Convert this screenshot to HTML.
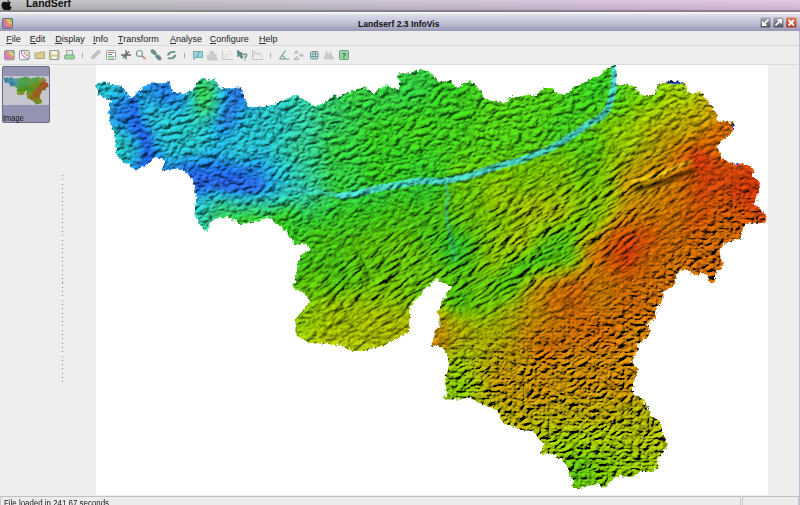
<!DOCTYPE html>
<html><head><meta charset="utf-8">
<style>
*{margin:0;padding:0;box-sizing:border-box}
html,body{width:800px;height:505px;overflow:hidden;background:#eeeeee;font-family:"Liberation Sans",sans-serif}
.a{position:absolute}
#macbar{left:0;top:0;width:800px;height:11px;background:linear-gradient(to right,#b6b6b6 0%,#bab4c0 25%,#c4b8cc 50%,#d0b8d4 75%,#dcbcdc 100%)}
#macshade{left:0;top:0;width:800px;height:11px;background:linear-gradient(to bottom,rgba(255,255,255,.22),rgba(0,0,0,.08))}
#macline{left:0;top:10px;width:800px;height:2px;background:linear-gradient(to right,#8a8a8a,#857e90 50%,#907a98)}
#wtop{left:0;top:12px;width:800px;height:3px;background:linear-gradient(#f6f6f6,#f0f0f0 60%,#d4d4dc)}
#title{left:0;top:15px;width:800px;height:16px;background:linear-gradient(#dcdcea,#c8c8dc 35%,#b0b0c8 70%,#9898b6)}
#menu{left:0;top:31px;width:800px;height:15px;background:#ececec;border-bottom:1px solid #d8d8d8}
#tool{left:0;top:46px;width:800px;height:19px;background:linear-gradient(#efefef,#ededed);border-bottom:1px solid #dcdcdc}
#canvas{left:96px;top:65px;width:672px;height:430px;background:#fff}
#rightb{left:799px;top:31px;width:1px;height:474px;background:#bcbcd4}
#status{left:0;top:496px;width:800px;height:9px;background:#ececec;border-top:1px solid #c4c4c4}
#sp1{left:0;top:496px;width:741px;height:9px;border-top:1px solid #c0c0c0;border-left:1px solid #c8c8c8;border-right:1px solid #c8c8c8;background:#ececec}
#sp2{left:742px;top:496px;width:57px;height:9px;border-top:1px solid #c0c0c0;border-left:1px solid #c8c8c8;border-right:1px solid #c8c8c8;background:#ececec}
.m{position:absolute;top:34px;font-size:9px;line-height:10px;color:#1a1a1a;white-space:nowrap}
.m u{text-decoration:none;border-bottom:1px solid #333;display:inline-block;line-height:8px}
#lsf{left:26px;top:-2px;font-size:10.4px;font-weight:bold;color:#111;white-space:nowrap;line-height:12px}
#ttl{left:358px;top:18.5px;font-size:8.6px;font-weight:bold;color:#111;white-space:nowrap;line-height:10px}
#stt{left:4px;top:498px;font-size:8.5px;color:#111;white-space:nowrap;line-height:10px;transform:scaleX(0.93);transform-origin:0 0}
#thumb{left:2px;top:66px;width:48px;height:57px;background:#9494b2;border:1px solid #6c6c88;border-radius:2px}
#thimg{left:3px;top:76px;width:46px;height:29px;background:#c6c6d0}
#thl{left:3px;top:113px;font-size:8.5px;color:#111;line-height:10px;transform:scaleX(0.88);transform-origin:0 0}
#dots{left:62px;top:175px;width:1px;height:211px;background:repeating-linear-gradient(to bottom,#8a8a8a 0,#8a8a8a 1px,transparent 1px,transparent 4.3px)}
</style></head><body>
<div id="macbar" class="a"></div>
<div id="macshade" class="a"></div>
<div id="macline" class="a"></div>
<div id="wtop" class="a"></div>
<div id="title" class="a"></div>
<div id="menu" class="a"></div>
<div id="tool" class="a"></div>
<div id="canvas" class="a"></div>
<div id="rightb" class="a"></div>
<div id="sp1" class="a"></div>
<div id="sp2" class="a"></div>
<div id="dots" class="a"></div>
<div id="thumb" class="a"></div>
<div id="thimg" class="a"></div>
<svg class="a" style="left:3px;top:76px;filter:brightness(.82) saturate(1.1)" width="46" height="29" viewBox="96 65 672 430" preserveAspectRatio="none"><use href="#mapg"/></svg>
<div id="thl" class="a">Image</div>
<div id="lsf" class="a">LandSerf</div>
<div id="ttl" class="a">Landserf 2.3 InfoVis</div>
<div id="stt" class="a">File loaded in 241.67 seconds</div>
<div class="m" style="left:6.3px"><u>F</u>ile</div>
<div class="m" style="left:29.8px"><u>E</u>dit</div>
<div class="m" style="left:55.2px"><u>D</u>isplay</div>
<div class="m" style="left:93px"><u>I</u>nfo</div>
<div class="m" style="left:117.8px"><u>T</u>ransform</div>
<div class="m" style="left:170px"><u>A</u>nalyse</div>
<div class="m" style="left:209.7px"><u>C</u>onfigure</div>
<div class="m" style="left:259px"><u>H</u>elp</div>
<svg class="a" style="left:0;top:0" width="360" height="66" viewBox="0 0 360 66">
<!-- title icon -->
<defs><clipPath id="ic0"><rect x="2.5" y="18.5" width="10" height="10" rx="1"/></clipPath></defs>
<g clip-path="url(#ic0)"><rect x="2" y="18" width="11" height="11" fill="#c070c0"/><circle cx="13" cy="18.5" r="9.5" fill="#e08868"/><circle cx="13" cy="18.5" r="6.3" fill="#d8c070"/><circle cx="13" cy="18.5" r="3.2" fill="#70c070"/></g>
<rect x="2.5" y="18.5" width="10" height="10" rx="1.3" fill="none" stroke="#5a7474" stroke-width="1"/>
<!-- icon1 -->
<defs><clipPath id="ic1"><rect x="5" y="51" width="9" height="8.5" rx="0.5"/></clipPath><clipPath id="ic2"><rect x="20" y="51" width="9" height="8.5" rx="0.5"/></clipPath></defs>
<g clip-path="url(#ic1)"><rect x="4" y="50" width="11" height="10" fill="#d878c8"/><circle cx="14.5" cy="50.5" r="9" fill="#e0907a"/><circle cx="14.5" cy="50.5" r="6" fill="#dcc888"/><circle cx="14.5" cy="50.5" r="3" fill="#78c878"/></g>
<rect x="4.5" y="50.5" width="9.8" height="9.3" rx="1.2" fill="none" stroke="#7c9a96" stroke-width="1"/>
<g clip-path="url(#ic2)"><rect x="19" y="50" width="11" height="10" fill="#fafafa"/><circle cx="29.5" cy="50.5" r="8.3" fill="none" stroke="#c868c8" stroke-width="1.1"/><circle cx="29.5" cy="50.5" r="5.6" fill="none" stroke="#e07c70" stroke-width="1.1"/><circle cx="29.5" cy="50.5" r="3" fill="none" stroke="#d8c070" stroke-width="1.1"/></g>
<rect x="19.5" y="50.5" width="9.8" height="9.3" rx="1.2" fill="none" stroke="#7c9a96" stroke-width="1"/>
<!-- folder -->
<path d="M35 53 L39 53 L40 52 L44.5 52 L44.5 58.5 L35 58.5Z" fill="#dccb8c" stroke="#a8a880" stroke-width="1"/>
<!-- floppy -->
<g><rect x="49.5" y="50.5" width="9.5" height="9" rx="1" fill="#d8c88c" stroke="#8a9a90" stroke-width="1"/><rect x="51.5" y="51" width="5.5" height="3.5" fill="#f4f4f4"/><rect x="52" y="56.5" width="4.5" height="2.5" fill="#fafafa"/></g>
<!-- printer -->
<g><rect x="66.5" y="50.5" width="6" height="4.5" fill="#e4e8e4" stroke="#a0a8a8" stroke-width="1"/><rect x="64.5" y="55" width="10" height="4" rx="1" fill="#98d898" stroke="#80a890" stroke-width="1"/></g>
<rect x="82" y="53" width="1" height="5" fill="#a8a8a8"/>
<!-- pencil -->
<path d="M91.5 59 L92 56 L98.5 50 L100.5 52 L94 58.5Z" fill="#c0c0c0" stroke="#b0b0b0" stroke-width="0.6"/>
<!-- list -->
<g><rect x="106.5" y="50.5" width="9" height="9" rx="1" fill="#f4f4f4" stroke="#90a0a0" stroke-width="1"/><rect x="108" y="52" width="6" height="1" fill="#e07060"/><rect x="108" y="54" width="4" height="1" fill="#6080c0"/><rect x="108" y="56" width="6" height="1" fill="#80c080"/><rect x="108" y="57.5" width="6" height="1" fill="#90c890"/></g>
<!-- cross -->
<path d="M121 55 L131 55 M126 50 L126 59.5 M123 58 L129 51.5" stroke="#606868" stroke-width="1.3"/>
<!-- magnifier -->
<circle cx="139.5" cy="53.5" r="3" fill="#f0f4f4" stroke="#7aa0a0" stroke-width="1.2"/><path d="M141.8 55.8 L145.5 59" stroke="#c08070" stroke-width="1.6"/>
<!-- move -->
<g fill="#6a8c8a"><ellipse cx="153.7" cy="52.2" rx="3.6" ry="2.1" transform="rotate(42 153.7 52.2)"/><ellipse cx="158.4" cy="57.4" rx="3.6" ry="2.1" transform="rotate(42 158.4 57.4)"/></g>
<!-- rotate -->
<path d="M167 55.5 Q167.5 51.5 172 51 Q174.5 50.8 176 51.5 L174.5 53 Q172.5 52.6 171 53.2 Q169.5 54 169.3 55.5Z M176.3 54.8 Q175.8 58.8 171.3 59.3 Q168.8 59.5 167.3 58.8 L168.8 57.3 Q170.8 57.7 172.3 57.1 Q173.8 56.3 174 54.8Z" fill="#6a9494"/>
<rect x="184" y="53" width="1" height="5" fill="#a8a8a8"/>
<!-- bubble -->
<path d="M193.5 51.5 L202.5 51.5 L202.5 57.5 L196 57.5 L194 59.5 L194 57.5 L193.5 57.5Z" fill="#98d4dc" stroke="#70a8b0" stroke-width="1"/><path d="M197 57 L199 52" stroke="#508890" stroke-width="0.8"/>
<!-- bar chart -->
<path d="M207.5 59.5 L218 59.5 M208 55 L208 59 M210.5 51 L210.5 59 M213 51 L213 59 M215.5 54 L215.5 59" stroke="#c8c8c8" stroke-width="2.2"/>
<!-- scatter -->
<path d="M222.5 50 L222.5 59.5 L232.5 59.5" stroke="#c8c8c8" stroke-width="1" fill="none"/><g fill="#c0c0c0"><rect x="224" y="56" width="1" height="1"/><rect x="226" y="54" width="1" height="1"/><rect x="228" y="52" width="1" height="1"/><rect x="230" y="51" width="1" height="1"/><rect x="227" y="57" width="1" height="1"/><rect x="231" y="54" width="1" height="1"/></g>
<!-- cursor ? -->
<path d="M237.5 50.5 L238 57 L239.5 55.5 L241.5 58.5 L243 57.5 L241 54.5 L243 54Z" fill="#5a8a88" stroke="#5a8a88" stroke-width="1"/><path d="M243.5 55.5 Q244 53.5 246 54 Q247.5 55 246 56.5 L245 57.5 L245 58.5" stroke="#5a8a88" stroke-width="1.3" fill="none"/><rect x="244.5" y="59.5" width="1.2" height="1" fill="#5a8a88"/>
<!-- line chart -->
<path d="M252.5 50 L252.5 59.5 L263 59.5 M253 57 L255 51.5 L257.5 55 L259.5 52.5 L262.5 57.5" stroke="#c0c4c4" stroke-width="1" fill="none"/>
<rect x="270" y="53" width="1" height="5" fill="#a8a8a8"/>
<!-- angle -->
<path d="M279.5 59 L289 59 M279.5 59 L285.5 50.5 M282 55.5 Q284.5 56.5 285 59" stroke="#6a9898" stroke-width="1.1" fill="none"/>
<!-- mounds -->
<path d="M294.5 53 L296.5 50.5 L298.5 53Z M299.5 56 L301.5 53.5 L303.5 56Z M294 59.5 L296.5 56.5 L299 59.5Z" fill="#d0d4d4" stroke="#a8b0b0" stroke-width="0.8"/>
<!-- grid -->
<g stroke="#6a9898" stroke-width="1" fill="none"><rect x="310.5" y="51.5" width="7.5" height="7.5" rx="1"/><path d="M313 51.5 L313 59 M315.5 51.5 L315.5 59 M310.5 54 L318 54 M310.5 56.5 L318 56.5"/></g>
<!-- mountains -->
<path d="M324 59 L326.5 51 L328.5 55 L330.5 52 L333.5 59Z" fill="#c8cccc" stroke="#b8bcbc" stroke-width="0.6"/>
<!-- help -->
<rect x="339.5" y="50.5" width="9" height="9" rx="1" fill="#98d8a4" stroke="#6a9a80" stroke-width="1"/><text x="344" y="58.3" font-family="Liberation Sans" font-weight="bold" font-size="8" text-anchor="middle" fill="#3a5a50">?</text>
</svg>
<svg class="a" style="left:756px;top:14px" width="44" height="18" viewBox="756 14 44 18">
<defs><linearGradient id="gb" x1="0" y1="0" x2="0" y2="1"><stop offset="0" stop-color="#a8a8b8"/><stop offset="1" stop-color="#50505e"/></linearGradient>
<linearGradient id="gr" x1="0" y1="0" x2="0" y2="1"><stop offset="0" stop-color="#e87a5a"/><stop offset="1" stop-color="#b03828"/></linearGradient></defs>
<rect x="760.5" y="17.5" width="10" height="10" rx="1" fill="url(#gb)"/>
<path d="M768.5 19.5 L763 25 M762.8 21.5 L762.8 25.2 L766.5 25.2" stroke="#fff" stroke-width="1.7" fill="none"/>
<rect x="773.5" y="17.5" width="10" height="10" rx="1" fill="url(#gb)"/>
<path d="M775.5 25.5 L781 20 M777.5 19.8 L781.2 19.8 L781.2 23.5" stroke="#fff" stroke-width="1.7" fill="none"/>
<rect x="786" y="17.5" width="10.5" height="10" rx="1" fill="url(#gr)"/>
<path d="M788.5 20 L794 25.5 M794 20 L788.5 25.5" stroke="#fff" stroke-width="1.8"/>
</svg>
<svg class="a" style="left:0;top:0" width="14" height="12" viewBox="0 0 14 12">
<path d="M7 2.2 C8 1.3 9.8 1 11 2.2 C10 3 9.8 4.2 10 5.2 C10.3 6.4 11 7 11.8 7.2 C11.3 8.6 10.4 10 9.2 10.3 C8.4 10.5 7.8 9.9 7 9.9 C6.2 9.9 5.6 10.5 4.7 10.3 C3 9.8 1.5 7 1.5 5 C1.5 2.7 3 1.6 4.5 1.7 C5.7 1.8 6.3 2.5 7 2.2Z M7.2 1.5 C7.3 0.5 8 -0.3 9 -0.5 C9 0.5 8.3 1.4 7.2 1.5Z" fill="#111"/>
</svg>
<svg class="a" style="left:0;top:0" width="800" height="505" viewBox="0 0 800 505">
<defs><mask id="mk" maskUnits="userSpaceOnUse" x="0" y="0" width="800" height="505"><g filter="url(#rough)"><polygon fill="#fff" points="96,84 104,81 111,85 121,85.5 125,90 127.5,95 132.5,98 135,94 142.5,87.5 149,84 154,82 160,84 169,82 171,87.5 172.5,92.5 185,94 192.5,90 197.5,81 204,77.5 210,81 215,77.5 219,87.5 229,89 237.5,87.5 242.5,89 244,97.5 247.5,106 260,107.5 272.5,105 280,101 287.5,99 296,95 302.5,99 310,102.5 316,106 320,105 330,99 334,94 337.5,97.5 344,94 355,90 365,87 369,90 374,94 377.5,90 380,88 387.5,84.5 391,88 399,89.5 400,84.5 398,78 399,72 406,74 416,71 421,69 429,72 435,78 440,82 450,81 454,84.5 457.5,88 465,83 470,81 475,84.5 481,91 484,98 492.5,101 500,102 506,103 509,97 517.5,97 522.5,96 529,94.5 535,96 540,92 545,88 552.5,88 556,92 564,96 569,91 580,84.5 587.5,81 594,78 601,74.5 607.5,68 612.5,67 615,65 616,69.5 617.5,76 615,84.5 622.5,85 626,84 635,87 640,94.5 645,96 652.5,96 656,92 657.5,84 662.5,83 665,82.5 671,80.5 684,82.5 686,85 687.5,92 692.5,93 702.5,92.5 705,97.5 710,104 714,110 717.5,115 716,119 719,122 724,121 732,123 735,124 733,130 731,134 726,137 721,142 717,146 719,151 722,154 720,157 725,160 732,163.5 740,163.5 750.5,166 754,170 752,177 759,180 760,188.5 757,195 754,204 762,210.5 767,217 765.5,222 757,224 749,222 744,225.5 742,232.5 740,239 732,240 724,244 719,252 722,259.5 723,267 716.5,270 715,276 715,283 709,283 707.5,275 701,272.5 698.5,276 692,275 688,268.5 678,271 675.5,277.5 675.5,284 667.5,289 663.5,292 661.5,303 654.5,310 656,317 647.5,324 651,333 645.5,338.5 638.5,344 636.5,352.5 631,361.5 638.5,369 636.5,375 633,382 633,394 643,398.5 647.5,408 652,417.5 659,420 662,427 662,434 666.5,439 666.5,448 662,453 657,460 659,467 652,472 640,472 631,477 620,476 615,477 609,482.5 604.5,488 599,484 590,485.5 579.5,488 572,488 573.5,482.5 570.5,476.5 569,469 564.5,461.5 555.5,455.5 548,452.5 542,455.5 541,449.5 545,445 539,439 535,433 529,430.5 521,430 512,426 503.5,423.5 501,417 497,410.5 488,406 477,402 468.5,397.5 457.5,399.5 444.5,399.5 447,391 444.5,380 447,373.5 449,365 447,354 442.5,347.5 431.5,345 433.5,338.5 436,330 439.5,325.5 439.5,316 436.5,311.5 439.5,310 441,303 443.5,299 446.5,297.5 447.5,292 452,288 447.5,285 439,281 437,278.5 435,280 430,285 424,289.5 420,296 413,302 409,310 410,316 409,325.5 409,332 398,338 383,346 362,351 352,351 341.5,346 326,343.5 310.5,343.5 300.5,338 295.5,333 295.5,320 300.5,312.5 310.5,302 305.5,294.5 292.5,287 295.5,281.5 298,263.5 303,253.5 310.5,250.5 308,245.5 300.5,243 295.5,245.5 292.5,240.5 285,230 281,227.5 273.5,221.5 269,217 260,220 251,223 241,224.5 235,220 227.5,217 217,218.5 209.5,221.5 208,230.5 202.5,229 198,221.5 195,214 195,206.5 196.5,197.5 195,188.5 193.5,183 189,175.5 183,169.5 177.5,168.5 169.5,169.5 161,171 165,162.5 162.5,158.5 155.5,157 148.5,164 141.5,167 136,170.5 132,167 122,161.5 116.5,156 115.5,144.5 114,131 109.5,121 108.5,111.5 111,101 102.5,97.5 99,94"/></g></mask>
<mask id="ard" maskUnits="userSpaceOnUse" x="0" y="0" width="800" height="505"><g filter="url(#bl2)"><polygon fill="#fff" points="300 255 420 215 520 180 620 150 690 125 715 160 660 240 600 290 520 320 440 320 320 330"/></g></mask>
<filter id="bl" x="0" y="0" width="1" height="1"><feGaussianBlur stdDeviation="5"/></filter>
<filter id="bl3" x="0" y="0" width="800" height="505" filterUnits="userSpaceOnUse"><feGaussianBlur stdDeviation="2.5"/></filter>
<filter id="bl4" x="0" y="0" width="800" height="505" filterUnits="userSpaceOnUse"><feGaussianBlur stdDeviation="1.5"/></filter>
<filter id="bl2" x="0" y="0" width="800" height="505" filterUnits="userSpaceOnUse"><feGaussianBlur stdDeviation="25"/></filter>
<filter id="hs" x="-200" y="-300" width="1200" height="1100" filterUnits="userSpaceOnUse">
<feTurbulence type="turbulence" baseFrequency="0.1 0.13" numOctaves="4" seed="11" result="n"/>
<feDiffuseLighting in="n" surfaceScale="3.5" lighting-color="#ffffff" diffuseConstant="1" result="l"><feDistantLight azimuth="250" elevation="38"/></feDiffuseLighting>
<feComposite in="SourceGraphic" in2="l" operator="arithmetic" k1="1.45" k2="0.12" k3="0" k4="0" result="c"/>
<feComposite in="c" in2="SourceGraphic" operator="in"/>
</filter>
<filter id="hs2" x="-200" y="-300" width="1200" height="1100" filterUnits="userSpaceOnUse">
<feTurbulence type="turbulence" baseFrequency="0.05 0.16" numOctaves="3" seed="4" result="n"/>
<feDiffuseLighting in="n" surfaceScale="4" lighting-color="#ffffff" diffuseConstant="1" result="l"><feDistantLight azimuth="235" elevation="38"/></feDiffuseLighting>
<feComposite in="SourceGraphic" in2="l" operator="arithmetic" k1="1.35" k2="0" k3="0" k4="0" result="c"/>
<feComposite in="c" in2="SourceGraphic" operator="in"/>
</filter>
<mask id="sth" maskUnits="userSpaceOnUse" x="0" y="0" width="800" height="505"><g filter="url(#bl2)"><polygon fill="#fff" points="420 345 520 330 600 300 660 250 700 200 790 180 790 510 410 510"/></g></mask>
<filter id="hs3" x="0" y="0" width="800" height="505" filterUnits="userSpaceOnUse">
<feTurbulence type="turbulence" baseFrequency="0.12 0.15" numOctaves="3" seed="21" result="n"/>
<feDiffuseLighting in="n" surfaceScale="4" lighting-color="#ffffff" diffuseConstant="1" result="l"><feDistantLight azimuth="240" elevation="38"/></feDiffuseLighting>
<feComposite in="SourceGraphic" in2="l" operator="arithmetic" k1="1.35" k2="0" k3="0" k4="0" result="c"/>
<feComposite in="c" in2="SourceGraphic" operator="in"/>
</filter>
<filter id="rough" x="80" y="50" width="700" height="450" filterUnits="userSpaceOnUse"><feTurbulence type="fractalNoise" baseFrequency="0.35" numOctaves="2" seed="3" result="t"/><feDisplacementMap in="SourceGraphic" in2="t" scale="5" xChannelSelector="R" yChannelSelector="G"/></filter>
<g id="colg"><g filter="url(#bl)"><g stroke-width="8"><path stroke="#28b8c8" d="M90 64h16"/><path stroke="#28b8cc" d="M106 64h8"/><path stroke="#28b4d0" d="M114 64h8"/><path stroke="#24a8d0" d="M122 64h8"/><path stroke="#24a0d4" d="M130 64h8"/><path stroke="#2498d4" d="M138 64h8"/><path stroke="#2490d8" d="M146 64h8"/><path stroke="#208cd8" d="M154 64h8"/><path stroke="#2490d8" d="M162 64h8"/><path stroke="#2498d4" d="M170 64h8"/><path stroke="#24acd0" d="M178 64h8"/><path stroke="#28b8c4" d="M186 64h8"/><path stroke="#2cbcb8" d="M194 64h8"/><path stroke="#2cbcb0" d="M202 64h8"/><path stroke="#2cbcb8" d="M210 64h8"/><path stroke="#28b8c8" d="M218 64h8"/><path stroke="#24a8d0" d="M226 64h8"/><path stroke="#249cd4" d="M234 64h8"/><path stroke="#2498d4" d="M242 64h8"/><path stroke="#24a0d4" d="M250 64h8"/><path stroke="#24acd0" d="M258 64h8"/><path stroke="#28b8cc" d="M266 64h8"/><path stroke="#28bcc0" d="M274 64h8"/><path stroke="#2cbcb8" d="M282 64h8"/><path stroke="#2cc0b0" d="M290 64h8"/><path stroke="#2cc0a8" d="M298 64h8"/><path stroke="#30c4a0" d="M306 64h8"/><path stroke="#30c48c" d="M314 64h8"/><path stroke="#30c47c" d="M322 64h8"/><path stroke="#30c468" d="M330 64h8"/><path stroke="#30c45c" d="M338 64h8"/><path stroke="#30c450" d="M346 64h8"/><path stroke="#30c448" d="M354 64h8"/><path stroke="#30c444" d="M362 64h8"/><path stroke="#30c440" d="M370 64h8"/><path stroke="#30c43c" d="M378 64h16"/><path stroke="#30c438" d="M394 64h40"/><path stroke="#34c430" d="M434 64h8"/><path stroke="#34c428" d="M442 64h8"/><path stroke="#34c420" d="M450 64h8"/><path stroke="#38c420" d="M458 64h8"/><path stroke="#3cc420" d="M466 64h8"/><path stroke="#40c41c" d="M474 64h8"/><path stroke="#44c41c" d="M482 64h8"/><path stroke="#48c418" d="M490 64h8"/><path stroke="#4cc418" d="M498 64h8"/><path stroke="#50c814" d="M506 64h16"/><path stroke="#54c814" d="M522 64h24"/><path stroke="#50c814" d="M546 64h16"/><path stroke="#4cc418" d="M562 64h8"/><path stroke="#48c418" d="M570 64h8"/><path stroke="#44c418" d="M578 64h8"/><path stroke="#44c41c" d="M586 64h16"/><path stroke="#48c418" d="M602 64h8"/><path stroke="#50c814" d="M610 64h8"/><path stroke="#5cc810" d="M618 64h8"/><path stroke="#68c808" d="M626 64h8"/><path stroke="#78c804" d="M634 64h8"/><path stroke="#84c804" d="M642 64h8"/><path stroke="#8cc804" d="M650 64h8"/><path stroke="#98c800" d="M658 64h8"/><path stroke="#a0c800" d="M666 64h8"/><path stroke="#a4c800" d="M674 64h8"/><path stroke="#a8c400" d="M682 64h8"/><path stroke="#acc000" d="M690 64h8"/><path stroke="#b0b800" d="M698 64h8"/><path stroke="#b4b400" d="M706 64h8"/><path stroke="#b8ac00" d="M714 64h8"/><path stroke="#bca400" d="M722 64h8"/><path stroke="#c0a000" d="M730 64h8"/><path stroke="#c49c00" d="M738 64h8"/><path stroke="#c49800" d="M746 64h8"/><path stroke="#c89400" d="M754 64h16"/><path stroke="#c89000" d="M770 64h8"/><path stroke="#28b8c4" d="M90 72h16"/><path stroke="#28b8c8" d="M106 72h8"/><path stroke="#28b4d0" d="M114 72h8"/><path stroke="#24a8d0" d="M122 72h8"/><path stroke="#249cd4" d="M130 72h8"/><path stroke="#2494d8" d="M138 72h8"/><path stroke="#2088d8" d="M146 72h8"/><path stroke="#2084d8" d="M154 72h8"/><path stroke="#2088d8" d="M162 72h8"/><path stroke="#2490d8" d="M170 72h8"/><path stroke="#24a8d0" d="M178 72h8"/><path stroke="#28bcbc" d="M186 72h8"/><path stroke="#2cc0a8" d="M194 72h8"/><path stroke="#30c4a0" d="M202 72h8"/><path stroke="#2cc0ac" d="M210 72h8"/><path stroke="#28b8c8" d="M218 72h8"/><path stroke="#249cd4" d="M226 72h8"/><path stroke="#208cd8" d="M234 72h8"/><path stroke="#2088d8" d="M242 72h8"/><path stroke="#2494d8" d="M250 72h8"/><path stroke="#24a4d4" d="M258 72h8"/><path stroke="#28b8cc" d="M266 72h8"/><path stroke="#28bcc0" d="M274 72h8"/><path stroke="#2cbcb4" d="M282 72h8"/><path stroke="#2cc0ac" d="M290 72h8"/><path stroke="#2cc0a4" d="M298 72h8"/><path stroke="#30c49c" d="M306 72h8"/><path stroke="#30c488" d="M314 72h8"/><path stroke="#30c474" d="M322 72h8"/><path stroke="#30c464" d="M330 72h8"/><path stroke="#30c454" d="M338 72h8"/><path stroke="#30c448" d="M346 72h8"/><path stroke="#30c444" d="M354 72h8"/><path stroke="#30c440" d="M362 72h8"/><path stroke="#30c43c" d="M370 72h56"/><path stroke="#30c438" d="M426 72h8"/><path stroke="#34c430" d="M434 72h8"/><path stroke="#34c424" d="M442 72h8"/><path stroke="#34c420" d="M450 72h8"/><path stroke="#38c420" d="M458 72h8"/><path stroke="#3cc420" d="M466 72h8"/><path stroke="#40c41c" d="M474 72h8"/><path stroke="#44c41c" d="M482 72h8"/><path stroke="#48c418" d="M490 72h8"/><path stroke="#4cc418" d="M498 72h8"/><path stroke="#50c814" d="M506 72h16"/><path stroke="#54c814" d="M522 72h16"/><path stroke="#50c814" d="M538 72h16"/><path stroke="#4cc418" d="M554 72h8"/><path stroke="#48c418" d="M562 72h8"/><path stroke="#44c41c" d="M570 72h8"/><path stroke="#40c41c" d="M578 72h8"/><path stroke="#3cc420" d="M586 72h16"/><path stroke="#40c41c" d="M602 72h8"/><path stroke="#48c418" d="M610 72h8"/><path stroke="#58c810" d="M618 72h8"/><path stroke="#64c80c" d="M626 72h8"/><path stroke="#74cc04" d="M634 72h8"/><path stroke="#80c804" d="M642 72h8"/><path stroke="#88c804" d="M650 72h8"/><path stroke="#94c800" d="M658 72h8"/><path stroke="#9cc800" d="M666 72h8"/><path stroke="#a0c800" d="M674 72h8"/><path stroke="#a4c800" d="M682 72h8"/><path stroke="#a8c400" d="M690 72h8"/><path stroke="#acbc00" d="M698 72h8"/><path stroke="#b4b400" d="M706 72h8"/><path stroke="#b8a800" d="M714 72h8"/><path stroke="#c0a000" d="M722 72h8"/><path stroke="#c09c00" d="M730 72h8"/><path stroke="#c49800" d="M738 72h8"/><path stroke="#c89400" d="M746 72h8"/><path stroke="#c89000" d="M754 72h16"/><path stroke="#cc8c00" d="M770 72h8"/><path stroke="#28bcc0" d="M90 80h8"/><path stroke="#28b8c0" d="M98 80h8"/><path stroke="#28b8c8" d="M106 80h8"/><path stroke="#28b4d0" d="M114 80h8"/><path stroke="#24a8d0" d="M122 80h8"/><path stroke="#249cd4" d="M130 80h8"/><path stroke="#2490d8" d="M138 80h8"/><path stroke="#2084d8" d="M146 80h8"/><path stroke="#2080dc" d="M154 80h16"/><path stroke="#2088d8" d="M170 80h8"/><path stroke="#24a4d4" d="M178 80h8"/><path stroke="#2cbcb4" d="M186 80h8"/><path stroke="#30c47c" d="M194 80h8"/><path stroke="#30c46c" d="M202 80h8"/><path stroke="#30c4a0" d="M210 80h8"/><path stroke="#28b8cc" d="M218 80h8"/><path stroke="#2088d8" d="M226 80h8"/><path stroke="#207cdc" d="M234 80h16"/><path stroke="#2088d8" d="M250 80h8"/><path stroke="#24a0d4" d="M258 80h8"/><path stroke="#28b8c8" d="M266 80h8"/><path stroke="#28bcbc" d="M274 80h8"/><path stroke="#2cbcb4" d="M282 80h8"/><path stroke="#2cc0ac" d="M290 80h8"/><path stroke="#2cc0a4" d="M298 80h8"/><path stroke="#30c498" d="M306 80h8"/><path stroke="#30c484" d="M314 80h8"/><path stroke="#30c470" d="M322 80h8"/><path stroke="#30c460" d="M330 80h8"/><path stroke="#30c450" d="M338 80h8"/><path stroke="#30c444" d="M346 80h8"/><path stroke="#30c440" d="M354 80h8"/><path stroke="#30c43c" d="M362 80h64"/><path stroke="#30c438" d="M426 80h8"/><path stroke="#34c42c" d="M434 80h8"/><path stroke="#34c424" d="M442 80h8"/><path stroke="#34c420" d="M450 80h8"/><path stroke="#38c420" d="M458 80h8"/><path stroke="#3cc420" d="M466 80h8"/><path stroke="#40c41c" d="M474 80h8"/><path stroke="#44c418" d="M482 80h8"/><path stroke="#4cc418" d="M490 80h8"/><path stroke="#4cc814" d="M498 80h8"/><path stroke="#50c814" d="M506 80h40"/><path stroke="#4cc814" d="M546 80h8"/><path stroke="#48c418" d="M554 80h8"/><path stroke="#44c41c" d="M562 80h8"/><path stroke="#40c41c" d="M570 80h8"/><path stroke="#3cc41c" d="M578 80h8"/><path stroke="#38c420" d="M586 80h8"/><path stroke="#34c420" d="M594 80h8"/><path stroke="#38c420" d="M602 80h8"/><path stroke="#44c41c" d="M610 80h8"/><path stroke="#54c814" d="M618 80h8"/><path stroke="#60c80c" d="M626 80h8"/><path stroke="#70cc08" d="M634 80h8"/><path stroke="#78c804" d="M642 80h8"/><path stroke="#80c804" d="M650 80h8"/><path stroke="#8cc804" d="M658 80h8"/><path stroke="#98c800" d="M666 80h8"/><path stroke="#9cc800" d="M674 80h16"/><path stroke="#a4c800" d="M690 80h8"/><path stroke="#acbc00" d="M698 80h8"/><path stroke="#b4b000" d="M706 80h8"/><path stroke="#bca800" d="M714 80h8"/><path stroke="#c0a000" d="M722 80h8"/><path stroke="#c49800" d="M730 80h8"/><path stroke="#c89400" d="M738 80h8"/><path stroke="#c89000" d="M746 80h8"/><path stroke="#cc9000" d="M754 80h8"/><path stroke="#cc8c00" d="M762 80h16"/><path stroke="#28bcc0" d="M90 88h8"/><path stroke="#28b8c0" d="M98 88h8"/><path stroke="#28b8cc" d="M106 88h8"/><path stroke="#24b0d0" d="M114 88h8"/><path stroke="#24a4d4" d="M122 88h8"/><path stroke="#2498d4" d="M130 88h8"/><path stroke="#2494d4" d="M138 88h8"/><path stroke="#2088d8" d="M146 88h8"/><path stroke="#207cdc" d="M154 88h16"/><path stroke="#2080dc" d="M170 88h8"/><path stroke="#2498d4" d="M178 88h8"/><path stroke="#2cbcb4" d="M186 88h8"/><path stroke="#30c450" d="M194 88h8"/><path stroke="#30c440" d="M202 88h8"/><path stroke="#30c47c" d="M210 88h8"/><path stroke="#28b4d0" d="M218 88h8"/><path stroke="#207cdc" d="M226 88h8"/><path stroke="#2074dc" d="M234 88h16"/><path stroke="#2084d8" d="M250 88h8"/><path stroke="#24a4d4" d="M258 88h8"/><path stroke="#28b8c4" d="M266 88h8"/><path stroke="#2cbcb8" d="M274 88h8"/><path stroke="#2cbcb0" d="M282 88h8"/><path stroke="#2cc0a8" d="M290 88h8"/><path stroke="#2cc0a4" d="M298 88h8"/><path stroke="#30c498" d="M306 88h8"/><path stroke="#30c480" d="M314 88h8"/><path stroke="#30c46c" d="M322 88h8"/><path stroke="#30c460" d="M330 88h8"/><path stroke="#30c44c" d="M338 88h8"/><path stroke="#30c440" d="M346 88h8"/><path stroke="#30c43c" d="M354 88h64"/><path stroke="#30c438" d="M418 88h8"/><path stroke="#30c434" d="M426 88h8"/><path stroke="#34c424" d="M434 88h8"/><path stroke="#34c420" d="M442 88h16"/><path stroke="#38c420" d="M458 88h8"/><path stroke="#3cc41c" d="M466 88h8"/><path stroke="#40c41c" d="M474 88h8"/><path stroke="#48c418" d="M482 88h8"/><path stroke="#4cc818" d="M490 88h8"/><path stroke="#50c814" d="M498 88h48"/><path stroke="#4cc814" d="M546 88h8"/><path stroke="#48c418" d="M554 88h8"/><path stroke="#44c41c" d="M562 88h8"/><path stroke="#40c41c" d="M570 88h8"/><path stroke="#3cc41c" d="M578 88h8"/><path stroke="#38c420" d="M586 88h8"/><path stroke="#34c420" d="M594 88h8"/><path stroke="#38c420" d="M602 88h8"/><path stroke="#48c418" d="M610 88h8"/><path stroke="#54c814" d="M618 88h8"/><path stroke="#60c80c" d="M626 88h8"/><path stroke="#70cc08" d="M634 88h8"/><path stroke="#74cc04" d="M642 88h8"/><path stroke="#78c804" d="M650 88h8"/><path stroke="#88c804" d="M658 88h8"/><path stroke="#98c800" d="M666 88h24"/><path stroke="#a0c800" d="M690 88h8"/><path stroke="#acbc00" d="M698 88h8"/><path stroke="#b8ac00" d="M706 88h8"/><path stroke="#c0a000" d="M714 88h8"/><path stroke="#c49c00" d="M722 88h8"/><path stroke="#c49800" d="M730 88h8"/><path stroke="#c89000" d="M738 88h8"/><path stroke="#cc8c00" d="M746 88h16"/><path stroke="#cc8800" d="M762 88h8"/><path stroke="#d08800" d="M770 88h8"/><path stroke="#28b8c4" d="M90 96h8"/><path stroke="#28b8c8" d="M98 96h8"/><path stroke="#24b0d0" d="M106 96h8"/><path stroke="#24a0d4" d="M114 96h8"/><path stroke="#2494d8" d="M122 96h8"/><path stroke="#2498d4" d="M130 96h8"/><path stroke="#249cd4" d="M138 96h8"/><path stroke="#2498d4" d="M146 96h8"/><path stroke="#2080dc" d="M154 96h8"/><path stroke="#2078dc" d="M162 96h8"/><path stroke="#2084dc" d="M170 96h8"/><path stroke="#2490d8" d="M178 96h8"/><path stroke="#28bcc0" d="M186 96h8"/><path stroke="#30c44c" d="M194 96h8"/><path stroke="#30c43c" d="M202 96h8"/><path stroke="#30c47c" d="M210 96h8"/><path stroke="#24acd0" d="M218 96h8"/><path stroke="#2078dc" d="M226 96h8"/><path stroke="#2074dc" d="M234 96h8"/><path stroke="#2078dc" d="M242 96h8"/><path stroke="#208cd8" d="M250 96h8"/><path stroke="#24b0d0" d="M258 96h8"/><path stroke="#28bcbc" d="M266 96h8"/><path stroke="#2cbcb8" d="M274 96h8"/><path stroke="#2cc0b0" d="M282 96h8"/><path stroke="#2cc0a8" d="M290 96h8"/><path stroke="#30c0a0" d="M298 96h8"/><path stroke="#30c498" d="M306 96h8"/><path stroke="#30c478" d="M314 96h8"/><path stroke="#30c468" d="M322 96h8"/><path stroke="#30c460" d="M330 96h8"/><path stroke="#30c450" d="M338 96h8"/><path stroke="#30c440" d="M346 96h8"/><path stroke="#30c43c" d="M354 96h56"/><path stroke="#30c438" d="M410 96h8"/><path stroke="#30c434" d="M418 96h8"/><path stroke="#34c42c" d="M426 96h8"/><path stroke="#34c424" d="M434 96h8"/><path stroke="#34c420" d="M442 96h8"/><path stroke="#38c420" d="M450 96h8"/><path stroke="#3cc41c" d="M458 96h16"/><path stroke="#40c41c" d="M474 96h8"/><path stroke="#4cc418" d="M482 96h8"/><path stroke="#50c814" d="M490 96h64"/><path stroke="#48c418" d="M554 96h8"/><path stroke="#40c41c" d="M562 96h24"/><path stroke="#3cc420" d="M586 96h8"/><path stroke="#38c420" d="M594 96h8"/><path stroke="#3cc41c" d="M602 96h8"/><path stroke="#50c814" d="M610 96h8"/><path stroke="#54c814" d="M618 96h8"/><path stroke="#60c80c" d="M626 96h8"/><path stroke="#70cc08" d="M634 96h8"/><path stroke="#74cc04" d="M642 96h8"/><path stroke="#74c804" d="M650 96h8"/><path stroke="#8cc804" d="M658 96h8"/><path stroke="#9cc800" d="M666 96h8"/><path stroke="#98c800" d="M674 96h16"/><path stroke="#a4c800" d="M690 96h8"/><path stroke="#b4b400" d="M698 96h8"/><path stroke="#bca400" d="M706 96h8"/><path stroke="#c0a000" d="M714 96h8"/><path stroke="#c49800" d="M722 96h8"/><path stroke="#c89000" d="M730 96h8"/><path stroke="#cc8c00" d="M738 96h8"/><path stroke="#cc8800" d="M746 96h8"/><path stroke="#d08400" d="M754 96h24"/><path stroke="#28b8cc" d="M90 104h16"/><path stroke="#249cd4" d="M106 104h8"/><path stroke="#2080dc" d="M114 104h8"/><path stroke="#207cdc" d="M122 104h8"/><path stroke="#2490d8" d="M130 104h8"/><path stroke="#24a4d4" d="M138 104h8"/><path stroke="#24a8d0" d="M146 104h8"/><path stroke="#249cd4" d="M154 104h8"/><path stroke="#208cd8" d="M162 104h16"/><path stroke="#2490d8" d="M178 104h8"/><path stroke="#28b8c4" d="M186 104h8"/><path stroke="#30c46c" d="M194 104h8"/><path stroke="#30c458" d="M202 104h8"/><path stroke="#30c48c" d="M210 104h8"/><path stroke="#24a0d4" d="M218 104h8"/><path stroke="#2078dc" d="M226 104h16"/><path stroke="#2088d8" d="M242 104h8"/><path stroke="#24a4d4" d="M250 104h8"/><path stroke="#28b8c8" d="M258 104h8"/><path stroke="#28bcb8" d="M266 104h8"/><path stroke="#2cbcb8" d="M274 104h8"/><path stroke="#2cbcb0" d="M282 104h8"/><path stroke="#2cc0a4" d="M290 104h8"/><path stroke="#30c4a0" d="M298 104h8"/><path stroke="#30c498" d="M306 104h8"/><path stroke="#30c474" d="M314 104h8"/><path stroke="#30c464" d="M322 104h8"/><path stroke="#30c460" d="M330 104h8"/><path stroke="#30c458" d="M338 104h8"/><path stroke="#30c440" d="M346 104h8"/><path stroke="#30c43c" d="M354 104h24"/><path stroke="#30c438" d="M378 104h24"/><path stroke="#30c434" d="M402 104h8"/><path stroke="#34c430" d="M410 104h8"/><path stroke="#34c428" d="M418 104h8"/><path stroke="#34c424" d="M426 104h8"/><path stroke="#34c420" d="M434 104h8"/><path stroke="#38c420" d="M442 104h8"/><path stroke="#3cc420" d="M450 104h8"/><path stroke="#3cc41c" d="M458 104h8"/><path stroke="#40c41c" d="M466 104h8"/><path stroke="#44c41c" d="M474 104h8"/><path stroke="#4cc818" d="M482 104h8"/><path stroke="#50c814" d="M490 104h64"/><path stroke="#48c418" d="M554 104h8"/><path stroke="#44c41c" d="M562 104h8"/><path stroke="#40c41c" d="M570 104h32"/><path stroke="#4cc418" d="M602 104h8"/><path stroke="#54c814" d="M610 104h8"/><path stroke="#58c810" d="M618 104h8"/><path stroke="#68c808" d="M626 104h8"/><path stroke="#7cc804" d="M634 104h8"/><path stroke="#78c804" d="M642 104h8"/><path stroke="#7cc804" d="M650 104h8"/><path stroke="#9cc800" d="M658 104h8"/><path stroke="#a8c400" d="M666 104h24"/><path stroke="#b0b800" d="M690 104h8"/><path stroke="#b8ac00" d="M698 104h8"/><path stroke="#c0a000" d="M706 104h8"/><path stroke="#c49c00" d="M714 104h8"/><path stroke="#c89400" d="M722 104h8"/><path stroke="#cc8800" d="M730 104h8"/><path stroke="#d08400" d="M738 104h8"/><path stroke="#d08000" d="M746 104h32"/><path stroke="#28b8cc" d="M90 112h8"/><path stroke="#28b8d0" d="M98 112h8"/><path stroke="#2494d4" d="M106 112h8"/><path stroke="#2078dc" d="M114 112h8"/><path stroke="#2070e0" d="M122 112h8"/><path stroke="#2080dc" d="M130 112h8"/><path stroke="#24a8d4" d="M138 112h8"/><path stroke="#28b8cc" d="M146 112h16"/><path stroke="#28b4d0" d="M162 112h8"/><path stroke="#24b0d0" d="M170 112h8"/><path stroke="#28b4d0" d="M178 112h8"/><path stroke="#28bcbc" d="M186 112h8"/><path stroke="#30c488" d="M194 112h8"/><path stroke="#30c46c" d="M202 112h8"/><path stroke="#2cc0a8" d="M210 112h8"/><path stroke="#2494d4" d="M218 112h8"/><path stroke="#207cdc" d="M226 112h8"/><path stroke="#2084d8" d="M234 112h8"/><path stroke="#24acd0" d="M242 112h8"/><path stroke="#28b8cc" d="M250 112h8"/><path stroke="#28b8c4" d="M258 112h8"/><path stroke="#2cbcb8" d="M266 112h16"/><path stroke="#2cbcb4" d="M282 112h8"/><path stroke="#2cc0a4" d="M290 112h8"/><path stroke="#30c4a0" d="M298 112h8"/><path stroke="#30c498" d="M306 112h8"/><path stroke="#30c474" d="M314 112h8"/><path stroke="#30c464" d="M322 112h8"/><path stroke="#30c460" d="M330 112h8"/><path stroke="#30c45c" d="M338 112h8"/><path stroke="#30c448" d="M346 112h8"/><path stroke="#30c43c" d="M354 112h16"/><path stroke="#30c438" d="M370 112h8"/><path stroke="#30c434" d="M378 112h8"/><path stroke="#34c430" d="M386 112h8"/><path stroke="#34c42c" d="M394 112h8"/><path stroke="#34c424" d="M402 112h8"/><path stroke="#38c420" d="M410 112h40"/><path stroke="#3cc420" d="M450 112h8"/><path stroke="#3cc41c" d="M458 112h8"/><path stroke="#40c41c" d="M466 112h8"/><path stroke="#44c418" d="M474 112h8"/><path stroke="#4cc814" d="M482 112h8"/><path stroke="#50c814" d="M490 112h64"/><path stroke="#48c418" d="M554 112h8"/><path stroke="#44c41c" d="M562 112h8"/><path stroke="#40c41c" d="M570 112h16"/><path stroke="#44c418" d="M586 112h8"/><path stroke="#50c814" d="M594 112h8"/><path stroke="#5cc810" d="M602 112h8"/><path stroke="#64c80c" d="M610 112h8"/><path stroke="#6ccc08" d="M618 112h8"/><path stroke="#78c804" d="M626 112h8"/><path stroke="#90c800" d="M634 112h8"/><path stroke="#98c800" d="M642 112h16"/><path stroke="#a8c800" d="M658 112h8"/><path stroke="#acc000" d="M666 112h8"/><path stroke="#b4b000" d="M674 112h24"/><path stroke="#b8ac00" d="M698 112h8"/><path stroke="#c0a000" d="M706 112h8"/><path stroke="#c49800" d="M714 112h8"/><path stroke="#d08800" d="M722 112h8"/><path stroke="#d07c00" d="M730 112h8"/><path stroke="#d07800" d="M738 112h40"/><path stroke="#28b4d0" d="M90 120h8"/><path stroke="#24a8d0" d="M98 120h8"/><path stroke="#2490d8" d="M106 120h8"/><path stroke="#2080dc" d="M114 120h8"/><path stroke="#2070e0" d="M122 120h8"/><path stroke="#206ce0" d="M130 120h8"/><path stroke="#208cd8" d="M138 120h8"/><path stroke="#28b4d0" d="M146 120h8"/><path stroke="#28b8c4" d="M154 120h8"/><path stroke="#28b8c0" d="M162 120h16"/><path stroke="#28bcc0" d="M178 120h8"/><path stroke="#28bcbc" d="M186 120h8"/><path stroke="#2cc0a8" d="M194 120h8"/><path stroke="#2cc0a4" d="M202 120h8"/><path stroke="#28b8cc" d="M210 120h8"/><path stroke="#2088d8" d="M218 120h8"/><path stroke="#2084d8" d="M226 120h8"/><path stroke="#249cd4" d="M234 120h8"/><path stroke="#28b8c8" d="M242 120h16"/><path stroke="#28b8c0" d="M258 120h8"/><path stroke="#28bcbc" d="M266 120h8"/><path stroke="#2cbcb8" d="M274 120h8"/><path stroke="#2cbcb0" d="M282 120h8"/><path stroke="#2cc0a4" d="M290 120h8"/><path stroke="#30c4a0" d="M298 120h8"/><path stroke="#30c498" d="M306 120h8"/><path stroke="#30c478" d="M314 120h8"/><path stroke="#30c464" d="M322 120h8"/><path stroke="#30c460" d="M330 120h8"/><path stroke="#30c45c" d="M338 120h8"/><path stroke="#30c44c" d="M346 120h8"/><path stroke="#30c440" d="M354 120h8"/><path stroke="#30c438" d="M362 120h8"/><path stroke="#34c430" d="M370 120h8"/><path stroke="#34c428" d="M378 120h16"/><path stroke="#34c420" d="M394 120h8"/><path stroke="#38c420" d="M402 120h8"/><path stroke="#3cc41c" d="M410 120h40"/><path stroke="#40c41c" d="M450 120h24"/><path stroke="#48c418" d="M474 120h8"/><path stroke="#4cc814" d="M482 120h8"/><path stroke="#50c814" d="M490 120h56"/><path stroke="#48c418" d="M546 120h8"/><path stroke="#44c41c" d="M554 120h8"/><path stroke="#40c41c" d="M562 120h8"/><path stroke="#44c418" d="M570 120h8"/><path stroke="#48c418" d="M578 120h8"/><path stroke="#50c814" d="M586 120h8"/><path stroke="#60c80c" d="M594 120h8"/><path stroke="#6ccc08" d="M602 120h8"/><path stroke="#78c804" d="M610 120h8"/><path stroke="#7cc804" d="M618 120h8"/><path stroke="#84c804" d="M626 120h8"/><path stroke="#a0c800" d="M634 120h8"/><path stroke="#a8c400" d="M642 120h16"/><path stroke="#acc000" d="M658 120h8"/><path stroke="#b4b400" d="M666 120h8"/><path stroke="#b8ac00" d="M674 120h8"/><path stroke="#bca800" d="M682 120h8"/><path stroke="#b8a800" d="M690 120h8"/><path stroke="#bca400" d="M698 120h8"/><path stroke="#c49800" d="M706 120h8"/><path stroke="#d08400" d="M714 120h8"/><path stroke="#d47000" d="M722 120h24"/><path stroke="#d47400" d="M746 120h32"/><path stroke="#28b8c8" d="M90 128h8"/><path stroke="#28b8c4" d="M98 128h8"/><path stroke="#28b8c8" d="M106 128h8"/><path stroke="#24acd0" d="M114 128h8"/><path stroke="#2088d8" d="M122 128h8"/><path stroke="#1c68e0" d="M130 128h8"/><path stroke="#2070e0" d="M138 128h8"/><path stroke="#249cd4" d="M146 128h8"/><path stroke="#28b8c4" d="M154 128h8"/><path stroke="#28bcc0" d="M162 128h16"/><path stroke="#28bcbc" d="M178 128h24"/><path stroke="#28bcc0" d="M202 128h8"/><path stroke="#24a4d4" d="M210 128h8"/><path stroke="#208cd8" d="M218 128h16"/><path stroke="#24a4d4" d="M234 128h8"/><path stroke="#28b8c8" d="M242 128h8"/><path stroke="#28b8c4" d="M250 128h8"/><path stroke="#28bcc0" d="M258 128h8"/><path stroke="#28bcbc" d="M266 128h8"/><path stroke="#28bcb8" d="M274 128h8"/><path stroke="#2cbcb4" d="M282 128h8"/><path stroke="#2cc0a8" d="M290 128h8"/><path stroke="#30c4a0" d="M298 128h8"/><path stroke="#30c494" d="M306 128h8"/><path stroke="#30c47c" d="M314 128h8"/><path stroke="#30c464" d="M322 128h8"/><path stroke="#30c45c" d="M330 128h8"/><path stroke="#30c450" d="M338 128h8"/><path stroke="#30c448" d="M346 128h8"/><path stroke="#30c43c" d="M354 128h8"/><path stroke="#34c42c" d="M362 128h8"/><path stroke="#34c424" d="M370 128h24"/><path stroke="#38c420" d="M394 128h8"/><path stroke="#3cc41c" d="M402 128h8"/><path stroke="#40c41c" d="M410 128h56"/><path stroke="#44c41c" d="M466 128h8"/><path stroke="#4cc418" d="M474 128h8"/><path stroke="#50c814" d="M482 128h56"/><path stroke="#4cc418" d="M538 128h8"/><path stroke="#44c41c" d="M546 128h8"/><path stroke="#40c41c" d="M554 128h16"/><path stroke="#44c418" d="M570 128h8"/><path stroke="#50c814" d="M578 128h8"/><path stroke="#5cc810" d="M586 128h8"/><path stroke="#68c808" d="M594 128h8"/><path stroke="#7cc804" d="M602 128h8"/><path stroke="#88c804" d="M610 128h8"/><path stroke="#8cc804" d="M618 128h8"/><path stroke="#94c800" d="M626 128h8"/><path stroke="#a0c800" d="M634 128h8"/><path stroke="#acc000" d="M642 128h8"/><path stroke="#b4b400" d="M650 128h8"/><path stroke="#b8ac00" d="M658 128h16"/><path stroke="#bca800" d="M674 128h16"/><path stroke="#c09c00" d="M690 128h8"/><path stroke="#cc9000" d="M698 128h8"/><path stroke="#d08000" d="M706 128h8"/><path stroke="#d47000" d="M714 128h8"/><path stroke="#d46800" d="M722 128h8"/><path stroke="#d46c00" d="M730 128h16"/><path stroke="#d47000" d="M746 128h32"/><path stroke="#28b8c4" d="M90 136h8"/><path stroke="#28bcc0" d="M98 136h8"/><path stroke="#28bcbc" d="M106 136h16"/><path stroke="#28b8cc" d="M122 136h8"/><path stroke="#2084d8" d="M130 136h8"/><path stroke="#1c6ce0" d="M138 136h8"/><path stroke="#207cdc" d="M146 136h8"/><path stroke="#28b4d0" d="M154 136h8"/><path stroke="#28b8c4" d="M162 136h16"/><path stroke="#28bcc0" d="M178 136h24"/><path stroke="#28b8c8" d="M202 136h8"/><path stroke="#24acd0" d="M210 136h8"/><path stroke="#249cd4" d="M218 136h8"/><path stroke="#24a4d4" d="M226 136h8"/><path stroke="#28b4d0" d="M234 136h8"/><path stroke="#28b8c8" d="M242 136h8"/><path stroke="#28b8c4" d="M250 136h8"/><path stroke="#28bcc0" d="M258 136h8"/><path stroke="#28bcbc" d="M266 136h8"/><path stroke="#2cbcb8" d="M274 136h8"/><path stroke="#2cc0b0" d="M282 136h8"/><path stroke="#30c4a0" d="M290 136h8"/><path stroke="#30c490" d="M298 136h8"/><path stroke="#30c48c" d="M306 136h8"/><path stroke="#30c478" d="M314 136h8"/><path stroke="#30c45c" d="M322 136h8"/><path stroke="#30c448" d="M330 136h8"/><path stroke="#30c440" d="M338 136h16"/><path stroke="#30c434" d="M354 136h8"/><path stroke="#34c428" d="M362 136h8"/><path stroke="#34c424" d="M370 136h24"/><path stroke="#34c420" d="M394 136h8"/><path stroke="#3cc420" d="M402 136h8"/><path stroke="#40c41c" d="M410 136h56"/><path stroke="#48c418" d="M466 136h8"/><path stroke="#50c814" d="M474 136h64"/><path stroke="#4cc418" d="M538 136h8"/><path stroke="#44c41c" d="M546 136h8"/><path stroke="#40c41c" d="M554 136h16"/><path stroke="#4cc418" d="M570 136h8"/><path stroke="#54c814" d="M578 136h8"/><path stroke="#58c810" d="M586 136h8"/><path stroke="#64c80c" d="M594 136h8"/><path stroke="#7cc804" d="M602 136h8"/><path stroke="#90c800" d="M610 136h8"/><path stroke="#94c800" d="M618 136h16"/><path stroke="#9cc800" d="M634 136h8"/><path stroke="#b0b800" d="M642 136h8"/><path stroke="#b8a800" d="M650 136h8"/><path stroke="#bca400" d="M658 136h8"/><path stroke="#c0a000" d="M666 136h16"/><path stroke="#c09c00" d="M682 136h8"/><path stroke="#cc8c00" d="M690 136h8"/><path stroke="#d47800" d="M698 136h8"/><path stroke="#d47000" d="M706 136h8"/><path stroke="#d46c00" d="M714 136h64"/><path stroke="#28b8c4" d="M90 144h8"/><path stroke="#28bcc0" d="M98 144h8"/><path stroke="#28bcbc" d="M106 144h24"/><path stroke="#24b0d0" d="M130 144h8"/><path stroke="#2074dc" d="M138 144h16"/><path stroke="#24a8d4" d="M154 144h8"/><path stroke="#28b8cc" d="M162 144h8"/><path stroke="#28b8c8" d="M170 144h8"/><path stroke="#28b8c0" d="M178 144h8"/><path stroke="#28bcbc" d="M186 144h8"/><path stroke="#28bcc0" d="M194 144h8"/><path stroke="#28b8c8" d="M202 144h8"/><path stroke="#24b0d0" d="M210 144h8"/><path stroke="#24acd0" d="M218 144h8"/><path stroke="#28b8cc" d="M226 144h8"/><path stroke="#28b8c8" d="M234 144h24"/><path stroke="#28b8c4" d="M258 144h8"/><path stroke="#28bcbc" d="M266 144h8"/><path stroke="#2cbcb4" d="M274 144h8"/><path stroke="#2cc0a4" d="M282 144h8"/><path stroke="#30c490" d="M290 144h8"/><path stroke="#30c488" d="M298 144h16"/><path stroke="#30c474" d="M314 144h8"/><path stroke="#30c450" d="M322 144h8"/><path stroke="#30c440" d="M330 144h8"/><path stroke="#30c43c" d="M338 144h16"/><path stroke="#30c438" d="M354 144h8"/><path stroke="#34c428" d="M362 144h8"/><path stroke="#34c424" d="M370 144h24"/><path stroke="#34c420" d="M394 144h8"/><path stroke="#38c420" d="M402 144h8"/><path stroke="#3cc41c" d="M410 144h24"/><path stroke="#40c41c" d="M434 144h24"/><path stroke="#44c41c" d="M458 144h8"/><path stroke="#4cc418" d="M466 144h8"/><path stroke="#50c814" d="M474 144h24"/><path stroke="#54c814" d="M498 144h8"/><path stroke="#50c814" d="M506 144h24"/><path stroke="#54c814" d="M530 144h16"/><path stroke="#50c814" d="M546 144h8"/><path stroke="#4cc418" d="M554 144h8"/><path stroke="#4cc814" d="M562 144h8"/><path stroke="#54c814" d="M570 144h24"/><path stroke="#5cc810" d="M594 144h8"/><path stroke="#78c804" d="M602 144h8"/><path stroke="#90c800" d="M610 144h8"/><path stroke="#94c800" d="M618 144h16"/><path stroke="#a8c400" d="M634 144h8"/><path stroke="#b4b400" d="M642 144h8"/><path stroke="#b8ac00" d="M650 144h8"/><path stroke="#c0a400" d="M658 144h8"/><path stroke="#c49800" d="M666 144h8"/><path stroke="#cc8800" d="M674 144h8"/><path stroke="#d08000" d="M682 144h8"/><path stroke="#d47000" d="M690 144h8"/><path stroke="#d46c00" d="M698 144h56"/><path stroke="#d86800" d="M754 144h16"/><path stroke="#d86400" d="M770 144h8"/><path stroke="#28b8c4" d="M90 152h8"/><path stroke="#28bcc0" d="M98 152h8"/><path stroke="#28bcbc" d="M106 152h24"/><path stroke="#28b8d0" d="M130 152h8"/><path stroke="#2084d8" d="M138 152h8"/><path stroke="#1c6ce0" d="M146 152h8"/><path stroke="#208cd8" d="M154 152h8"/><path stroke="#28b8cc" d="M162 152h8"/><path stroke="#28b8c8" d="M170 152h16"/><path stroke="#28b8c4" d="M186 152h8"/><path stroke="#28b8c8" d="M194 152h8"/><path stroke="#24b0d0" d="M202 152h8"/><path stroke="#24a4d4" d="M210 152h8"/><path stroke="#24a8d0" d="M218 152h8"/><path stroke="#28b8cc" d="M226 152h8"/><path stroke="#28b8c8" d="M234 152h16"/><path stroke="#28b8cc" d="M250 152h16"/><path stroke="#28b8c4" d="M266 152h8"/><path stroke="#2cbcb4" d="M274 152h8"/><path stroke="#2cc0a4" d="M282 152h8"/><path stroke="#30c48c" d="M290 152h8"/><path stroke="#30c488" d="M298 152h16"/><path stroke="#30c474" d="M314 152h8"/><path stroke="#30c44c" d="M322 152h8"/><path stroke="#30c43c" d="M330 152h24"/><path stroke="#30c438" d="M354 152h8"/><path stroke="#34c42c" d="M362 152h8"/><path stroke="#34c424" d="M370 152h24"/><path stroke="#34c420" d="M394 152h8"/><path stroke="#38c420" d="M402 152h24"/><path stroke="#3cc420" d="M426 152h8"/><path stroke="#3cc41c" d="M434 152h8"/><path stroke="#44c41c" d="M442 152h8"/><path stroke="#44c418" d="M450 152h8"/><path stroke="#4cc418" d="M458 152h8"/><path stroke="#50c814" d="M466 152h24"/><path stroke="#54c814" d="M490 152h8"/><path stroke="#58c810" d="M498 152h8"/><path stroke="#54c814" d="M506 152h24"/><path stroke="#5cc810" d="M530 152h8"/><path stroke="#64c80c" d="M538 152h8"/><path stroke="#68c80c" d="M546 152h8"/><path stroke="#68c808" d="M554 152h8"/><path stroke="#64c80c" d="M562 152h8"/><path stroke="#60c810" d="M570 152h8"/><path stroke="#54c814" d="M578 152h16"/><path stroke="#5cc810" d="M594 152h8"/><path stroke="#78c804" d="M602 152h8"/><path stroke="#90c800" d="M610 152h8"/><path stroke="#98c800" d="M618 152h8"/><path stroke="#a0c800" d="M626 152h8"/><path stroke="#b0b800" d="M634 152h8"/><path stroke="#b8b000" d="M642 152h8"/><path stroke="#b8ac00" d="M650 152h8"/><path stroke="#c0a000" d="M658 152h8"/><path stroke="#cc8c00" d="M666 152h8"/><path stroke="#d07c00" d="M674 152h8"/><path stroke="#d46c00" d="M682 152h8"/><path stroke="#d8400c" d="M690 152h8"/><path stroke="#d8480c" d="M698 152h8"/><path stroke="#d86000" d="M706 152h8"/><path stroke="#d46800" d="M714 152h8"/><path stroke="#d46c00" d="M722 152h16"/><path stroke="#d86800" d="M738 152h8"/><path stroke="#d86400" d="M746 152h8"/><path stroke="#d86000" d="M754 152h8"/><path stroke="#d85c04" d="M762 152h16"/><path stroke="#28b8c4" d="M90 160h8"/><path stroke="#28b8c0" d="M98 160h8"/><path stroke="#28bcc0" d="M106 160h16"/><path stroke="#28b8c8" d="M122 160h8"/><path stroke="#24a4d4" d="M130 160h8"/><path stroke="#207cdc" d="M138 160h8"/><path stroke="#1c6ce0" d="M146 160h8"/><path stroke="#2080dc" d="M154 160h8"/><path stroke="#24a8d4" d="M162 160h8"/><path stroke="#24a8d0" d="M170 160h8"/><path stroke="#2498d4" d="M178 160h8"/><path stroke="#2490d8" d="M186 160h16"/><path stroke="#208cd8" d="M202 160h8"/><path stroke="#2088d8" d="M210 160h8"/><path stroke="#208cd8" d="M218 160h8"/><path stroke="#249cd4" d="M226 160h8"/><path stroke="#24acd0" d="M234 160h16"/><path stroke="#24a0d4" d="M250 160h8"/><path stroke="#24a4d4" d="M258 160h8"/><path stroke="#28b8d0" d="M266 160h8"/><path stroke="#28bcc0" d="M274 160h8"/><path stroke="#2cc0ac" d="M282 160h8"/><path stroke="#30c4a0" d="M290 160h8"/><path stroke="#30c490" d="M298 160h8"/><path stroke="#30c48c" d="M306 160h8"/><path stroke="#30c478" d="M314 160h8"/><path stroke="#30c454" d="M322 160h8"/><path stroke="#30c440" d="M330 160h8"/><path stroke="#30c43c" d="M338 160h16"/><path stroke="#30c438" d="M354 160h8"/><path stroke="#34c42c" d="M362 160h8"/><path stroke="#34c424" d="M370 160h8"/><path stroke="#34c420" d="M378 160h24"/><path stroke="#34c424" d="M402 160h24"/><path stroke="#34c420" d="M426 160h8"/><path stroke="#3cc420" d="M434 160h8"/><path stroke="#44c41c" d="M442 160h8"/><path stroke="#4cc418" d="M450 160h8"/><path stroke="#54c814" d="M458 160h16"/><path stroke="#58c810" d="M474 160h16"/><path stroke="#5cc810" d="M490 160h8"/><path stroke="#64c80c" d="M498 160h32"/><path stroke="#6cc808" d="M530 160h8"/><path stroke="#74cc04" d="M538 160h8"/><path stroke="#78c804" d="M546 160h24"/><path stroke="#6ccc08" d="M570 160h8"/><path stroke="#60c80c" d="M578 160h8"/><path stroke="#5cc810" d="M586 160h8"/><path stroke="#6ccc08" d="M594 160h8"/><path stroke="#88c804" d="M602 160h8"/><path stroke="#94c800" d="M610 160h8"/><path stroke="#a4c800" d="M618 160h8"/><path stroke="#b0bc00" d="M626 160h8"/><path stroke="#bca800" d="M634 160h8"/><path stroke="#c09c00" d="M642 160h8"/><path stroke="#c49c00" d="M650 160h8"/><path stroke="#c89400" d="M658 160h8"/><path stroke="#d08400" d="M666 160h8"/><path stroke="#d47400" d="M674 160h8"/><path stroke="#d85008" d="M682 160h8"/><path stroke="#d43010" d="M690 160h8"/><path stroke="#d43410" d="M698 160h8"/><path stroke="#d8480c" d="M706 160h8"/><path stroke="#d85804" d="M714 160h8"/><path stroke="#d86000" d="M722 160h16"/><path stroke="#d85c04" d="M738 160h8"/><path stroke="#d85404" d="M746 160h8"/><path stroke="#d85408" d="M754 160h16"/><path stroke="#d85404" d="M770 160h8"/><path stroke="#28b8c8" d="M90 168h8"/><path stroke="#28b8c4" d="M98 168h16"/><path stroke="#28b8c8" d="M114 168h8"/><path stroke="#24acd0" d="M122 168h8"/><path stroke="#208cd8" d="M130 168h8"/><path stroke="#206ce0" d="M138 168h8"/><path stroke="#1c6ce0" d="M146 168h8"/><path stroke="#2078dc" d="M154 168h8"/><path stroke="#208cd8" d="M162 168h8"/><path stroke="#2084d8" d="M170 168h8"/><path stroke="#2078dc" d="M178 168h8"/><path stroke="#206ce0" d="M186 168h8"/><path stroke="#1c6ce0" d="M194 168h8"/><path stroke="#2070dc" d="M202 168h8"/><path stroke="#2074dc" d="M210 168h8"/><path stroke="#1c6ce0" d="M218 168h16"/><path stroke="#2074dc" d="M234 168h8"/><path stroke="#207cdc" d="M242 168h8"/><path stroke="#2080dc" d="M250 168h8"/><path stroke="#2494d8" d="M258 168h8"/><path stroke="#24a8d0" d="M266 168h8"/><path stroke="#28b8c8" d="M274 168h8"/><path stroke="#28bcb8" d="M282 168h8"/><path stroke="#2cc0ac" d="M290 168h8"/><path stroke="#30c49c" d="M298 168h8"/><path stroke="#30c48c" d="M306 168h8"/><path stroke="#30c478" d="M314 168h8"/><path stroke="#30c458" d="M322 168h8"/><path stroke="#30c444" d="M330 168h8"/><path stroke="#30c43c" d="M338 168h16"/><path stroke="#30c438" d="M354 168h8"/><path stroke="#34c428" d="M362 168h8"/><path stroke="#38c420" d="M370 168h24"/><path stroke="#34c420" d="M394 168h8"/><path stroke="#34c424" d="M402 168h8"/><path stroke="#34c428" d="M410 168h16"/><path stroke="#34c424" d="M426 168h8"/><path stroke="#38c420" d="M434 168h8"/><path stroke="#44c41c" d="M442 168h8"/><path stroke="#54c814" d="M450 168h8"/><path stroke="#60c80c" d="M458 168h8"/><path stroke="#64c80c" d="M466 168h16"/><path stroke="#68c808" d="M482 168h8"/><path stroke="#6ccc08" d="M490 168h8"/><path stroke="#74cc04" d="M498 168h8"/><path stroke="#78c804" d="M506 168h32"/><path stroke="#7cc804" d="M538 168h32"/><path stroke="#74cc04" d="M570 168h8"/><path stroke="#68c808" d="M578 168h16"/><path stroke="#74c804" d="M594 168h8"/><path stroke="#8cc804" d="M602 168h8"/><path stroke="#94c800" d="M610 168h8"/><path stroke="#acbc00" d="M618 168h8"/><path stroke="#bca400" d="M626 168h8"/><path stroke="#c09c00" d="M634 168h8"/><path stroke="#c49800" d="M642 168h8"/><path stroke="#c89400" d="M650 168h8"/><path stroke="#cc8c00" d="M658 168h8"/><path stroke="#d08000" d="M666 168h8"/><path stroke="#d47400" d="M674 168h8"/><path stroke="#d86000" d="M682 168h8"/><path stroke="#d8480c" d="M690 168h8"/><path stroke="#d84010" d="M698 168h8"/><path stroke="#d8440c" d="M706 168h8"/><path stroke="#d84c08" d="M714 168h32"/><path stroke="#d8480c" d="M746 168h24"/><path stroke="#d84c08" d="M770 168h8"/><path stroke="#28b8cc" d="M90 176h24"/><path stroke="#24b0d0" d="M114 176h8"/><path stroke="#24a0d4" d="M122 176h8"/><path stroke="#2084d8" d="M130 176h8"/><path stroke="#2070dc" d="M138 176h8"/><path stroke="#2070e0" d="M146 176h8"/><path stroke="#2078dc" d="M154 176h8"/><path stroke="#2080dc" d="M162 176h8"/><path stroke="#2078dc" d="M170 176h8"/><path stroke="#206ce0" d="M178 176h8"/><path stroke="#1c64e4" d="M186 176h16"/><path stroke="#1c68e0" d="M202 176h8"/><path stroke="#1c6ce0" d="M210 176h8"/><path stroke="#1c64e4" d="M218 176h8"/><path stroke="#1860e4" d="M226 176h8"/><path stroke="#1c64e0" d="M234 176h8"/><path stroke="#1c6ce0" d="M242 176h8"/><path stroke="#2074dc" d="M250 176h8"/><path stroke="#2490d8" d="M258 176h8"/><path stroke="#249cd4" d="M266 176h8"/><path stroke="#28b8cc" d="M274 176h8"/><path stroke="#28bcc0" d="M282 176h8"/><path stroke="#2cc0ac" d="M290 176h8"/><path stroke="#30c490" d="M298 176h8"/><path stroke="#30c48c" d="M306 176h8"/><path stroke="#30c47c" d="M314 176h8"/><path stroke="#30c454" d="M322 176h8"/><path stroke="#30c43c" d="M330 176h16"/><path stroke="#30c440" d="M346 176h8"/><path stroke="#30c43c" d="M354 176h8"/><path stroke="#34c428" d="M362 176h8"/><path stroke="#38c420" d="M370 176h8"/><path stroke="#3cc420" d="M378 176h8"/><path stroke="#38c420" d="M386 176h8"/><path stroke="#34c420" d="M394 176h8"/><path stroke="#34c428" d="M402 176h32"/><path stroke="#34c420" d="M434 176h8"/><path stroke="#44c418" d="M442 176h8"/><path stroke="#5cc810" d="M450 176h8"/><path stroke="#68c808" d="M458 176h8"/><path stroke="#6ccc08" d="M466 176h8"/><path stroke="#70cc08" d="M474 176h8"/><path stroke="#74cc04" d="M482 176h8"/><path stroke="#7cc804" d="M490 176h8"/><path stroke="#80c804" d="M498 176h16"/><path stroke="#7cc804" d="M514 176h16"/><path stroke="#80c804" d="M530 176h8"/><path stroke="#84c804" d="M538 176h8"/><path stroke="#80c804" d="M546 176h24"/><path stroke="#78c804" d="M570 176h8"/><path stroke="#68c808" d="M578 176h16"/><path stroke="#74cc04" d="M594 176h8"/><path stroke="#88c804" d="M602 176h8"/><path stroke="#9cc800" d="M610 176h8"/><path stroke="#bca400" d="M618 176h8"/><path stroke="#c49800" d="M626 176h8"/><path stroke="#c49c00" d="M634 176h8"/><path stroke="#c49800" d="M642 176h8"/><path stroke="#cc8c00" d="M650 176h8"/><path stroke="#d08800" d="M658 176h8"/><path stroke="#d08000" d="M666 176h8"/><path stroke="#d07800" d="M674 176h8"/><path stroke="#d46c00" d="M682 176h8"/><path stroke="#d86000" d="M690 176h8"/><path stroke="#d8480c" d="M698 176h8"/><path stroke="#d8440c" d="M706 176h8"/><path stroke="#d8480c" d="M714 176h24"/><path stroke="#d8440c" d="M738 176h8"/><path stroke="#d84010" d="M746 176h8"/><path stroke="#d8400c" d="M754 176h8"/><path stroke="#d8440c" d="M762 176h8"/><path stroke="#d8480c" d="M770 176h8"/><path stroke="#28b4d0" d="M90 184h16"/><path stroke="#24b0d0" d="M106 184h8"/><path stroke="#24a8d0" d="M114 184h8"/><path stroke="#2498d4" d="M122 184h8"/><path stroke="#2088d8" d="M130 184h8"/><path stroke="#207cdc" d="M138 184h16"/><path stroke="#2080dc" d="M154 184h8"/><path stroke="#207cdc" d="M162 184h8"/><path stroke="#2074dc" d="M170 184h8"/><path stroke="#1c68e0" d="M178 184h8"/><path stroke="#1c64e4" d="M186 184h16"/><path stroke="#1c68e0" d="M202 184h8"/><path stroke="#2074dc" d="M210 184h8"/><path stroke="#1c64e0" d="M218 184h8"/><path stroke="#1860e4" d="M226 184h8"/><path stroke="#1c64e0" d="M234 184h8"/><path stroke="#1c68e0" d="M242 184h8"/><path stroke="#2070e0" d="M250 184h8"/><path stroke="#2494d8" d="M258 184h8"/><path stroke="#2494d4" d="M266 184h8"/><path stroke="#24b0d0" d="M274 184h8"/><path stroke="#28b8c0" d="M282 184h8"/><path stroke="#2cc0b0" d="M290 184h8"/><path stroke="#30c4a0" d="M298 184h8"/><path stroke="#30c498" d="M306 184h8"/><path stroke="#30c480" d="M314 184h8"/><path stroke="#30c45c" d="M322 184h8"/><path stroke="#30c434" d="M330 184h16"/><path stroke="#30c448" d="M346 184h16"/><path stroke="#34c430" d="M362 184h8"/><path stroke="#34c424" d="M370 184h8"/><path stroke="#34c420" d="M378 184h8"/><path stroke="#34c424" d="M386 184h16"/><path stroke="#34c42c" d="M402 184h8"/><path stroke="#34c430" d="M410 184h16"/><path stroke="#34c42c" d="M426 184h8"/><path stroke="#34c420" d="M434 184h8"/><path stroke="#48c418" d="M442 184h8"/><path stroke="#64c80c" d="M450 184h8"/><path stroke="#6ccc08" d="M458 184h8"/><path stroke="#70cc08" d="M466 184h16"/><path stroke="#7cc804" d="M482 184h8"/><path stroke="#88c804" d="M490 184h16"/><path stroke="#80c804" d="M506 184h8"/><path stroke="#7cc804" d="M514 184h8"/><path stroke="#80c804" d="M522 184h8"/><path stroke="#84c804" d="M530 184h8"/><path stroke="#8cc804" d="M538 184h32"/><path stroke="#80c804" d="M570 184h8"/><path stroke="#74cc04" d="M578 184h8"/><path stroke="#70cc08" d="M586 184h8"/><path stroke="#78c804" d="M594 184h8"/><path stroke="#7cc804" d="M602 184h8"/><path stroke="#a4c800" d="M610 184h8"/><path stroke="#c49c00" d="M618 184h8"/><path stroke="#c89400" d="M626 184h8"/><path stroke="#c09c00" d="M634 184h8"/><path stroke="#c49c00" d="M642 184h8"/><path stroke="#cc8c00" d="M650 184h8"/><path stroke="#d08800" d="M658 184h8"/><path stroke="#d08000" d="M666 184h8"/><path stroke="#d47800" d="M674 184h8"/><path stroke="#d46c00" d="M682 184h8"/><path stroke="#d85804" d="M690 184h8"/><path stroke="#d84c08" d="M698 184h24"/><path stroke="#d84808" d="M722 184h8"/><path stroke="#d8480c" d="M730 184h8"/><path stroke="#d83c10" d="M738 184h8"/><path stroke="#d43c10" d="M746 184h8"/><path stroke="#d83c10" d="M754 184h8"/><path stroke="#d84010" d="M762 184h8"/><path stroke="#d8440c" d="M770 184h8"/><path stroke="#24b0d0" d="M90 192h16"/><path stroke="#24acd0" d="M106 192h8"/><path stroke="#24a4d4" d="M114 192h8"/><path stroke="#2498d4" d="M122 192h8"/><path stroke="#2490d8" d="M130 192h8"/><path stroke="#2088d8" d="M138 192h8"/><path stroke="#2084d8" d="M146 192h16"/><path stroke="#2084dc" d="M162 192h8"/><path stroke="#207cdc" d="M170 192h8"/><path stroke="#2074dc" d="M178 192h8"/><path stroke="#2070e0" d="M186 192h16"/><path stroke="#2088d8" d="M202 192h8"/><path stroke="#24a0d4" d="M210 192h8"/><path stroke="#2494d4" d="M218 192h8"/><path stroke="#2088d8" d="M226 192h8"/><path stroke="#2084d8" d="M234 192h8"/><path stroke="#207cdc" d="M242 192h8"/><path stroke="#208cd8" d="M250 192h8"/><path stroke="#24a4d4" d="M258 192h8"/><path stroke="#24a0d4" d="M266 192h8"/><path stroke="#28b8cc" d="M274 192h8"/><path stroke="#2cbcb8" d="M282 192h8"/><path stroke="#2cc0ac" d="M290 192h8"/><path stroke="#2cc0a8" d="M298 192h8"/><path stroke="#30c494" d="M306 192h8"/><path stroke="#30c478" d="M314 192h8"/><path stroke="#30c464" d="M322 192h8"/><path stroke="#34c430" d="M330 192h8"/><path stroke="#34c428" d="M338 192h8"/><path stroke="#30c44c" d="M346 192h16"/><path stroke="#30c438" d="M362 192h8"/><path stroke="#34c430" d="M370 192h8"/><path stroke="#30c434" d="M378 192h8"/><path stroke="#34c42c" d="M386 192h8"/><path stroke="#34c424" d="M394 192h8"/><path stroke="#34c428" d="M402 192h8"/><path stroke="#34c430" d="M410 192h16"/><path stroke="#34c42c" d="M426 192h8"/><path stroke="#38c420" d="M434 192h8"/><path stroke="#50c814" d="M442 192h8"/><path stroke="#64c80c" d="M450 192h8"/><path stroke="#6ccc08" d="M458 192h8"/><path stroke="#70cc08" d="M466 192h16"/><path stroke="#80c804" d="M482 192h8"/><path stroke="#94c800" d="M490 192h16"/><path stroke="#8cc804" d="M506 192h8"/><path stroke="#84c804" d="M514 192h16"/><path stroke="#90c800" d="M530 192h8"/><path stroke="#94c800" d="M538 192h16"/><path stroke="#90c800" d="M554 192h16"/><path stroke="#8cc804" d="M570 192h8"/><path stroke="#80c804" d="M578 192h8"/><path stroke="#84c804" d="M586 192h8"/><path stroke="#88c804" d="M594 192h16"/><path stroke="#a4c800" d="M610 192h8"/><path stroke="#c0a000" d="M618 192h8"/><path stroke="#c49800" d="M626 192h8"/><path stroke="#c49c00" d="M634 192h8"/><path stroke="#c49800" d="M642 192h8"/><path stroke="#cc8c00" d="M650 192h8"/><path stroke="#d08400" d="M658 192h8"/><path stroke="#d07c00" d="M666 192h8"/><path stroke="#d47400" d="M674 192h8"/><path stroke="#d46c00" d="M682 192h8"/><path stroke="#d85408" d="M690 192h8"/><path stroke="#d84c08" d="M698 192h8"/><path stroke="#d85008" d="M706 192h8"/><path stroke="#d85804" d="M714 192h8"/><path stroke="#d85408" d="M722 192h8"/><path stroke="#d8440c" d="M730 192h8"/><path stroke="#d43c10" d="M738 192h16"/><path stroke="#d83c10" d="M754 192h8"/><path stroke="#d84010" d="M762 192h8"/><path stroke="#d8440c" d="M770 192h8"/><path stroke="#24b0d0" d="M90 200h8"/><path stroke="#24acd0" d="M98 200h8"/><path stroke="#24a8d0" d="M106 200h8"/><path stroke="#24a4d4" d="M114 200h8"/><path stroke="#249cd4" d="M122 200h8"/><path stroke="#2494d4" d="M130 200h8"/><path stroke="#2490d8" d="M138 200h48"/><path stroke="#249cd4" d="M186 200h8"/><path stroke="#28b8d0" d="M194 200h8"/><path stroke="#28bcc0" d="M202 200h8"/><path stroke="#2cbcb8" d="M210 200h8"/><path stroke="#2cc0a8" d="M218 200h8"/><path stroke="#2cc0a4" d="M226 200h8"/><path stroke="#2cbcb4" d="M234 200h8"/><path stroke="#28b8c0" d="M242 200h8"/><path stroke="#2cc0b0" d="M250 200h8"/><path stroke="#2cc0a8" d="M258 200h8"/><path stroke="#2cbcb4" d="M266 200h8"/><path stroke="#2cc0ac" d="M274 200h8"/><path stroke="#30c490" d="M282 200h16"/><path stroke="#30c49c" d="M298 200h8"/><path stroke="#30c478" d="M306 200h8"/><path stroke="#30c458" d="M314 200h8"/><path stroke="#30c454" d="M322 200h8"/><path stroke="#30c43c" d="M330 200h8"/><path stroke="#34c430" d="M338 200h8"/><path stroke="#30c440" d="M346 200h16"/><path stroke="#30c434" d="M362 200h8"/><path stroke="#34c430" d="M370 200h16"/><path stroke="#34c424" d="M386 200h8"/><path stroke="#3cc420" d="M394 200h8"/><path stroke="#38c420" d="M402 200h8"/><path stroke="#34c424" d="M410 200h16"/><path stroke="#38c420" d="M426 200h8"/><path stroke="#44c418" d="M434 200h8"/><path stroke="#54c814" d="M442 200h8"/><path stroke="#64c80c" d="M450 200h8"/><path stroke="#6ccc08" d="M458 200h8"/><path stroke="#70cc08" d="M466 200h8"/><path stroke="#74cc04" d="M474 200h8"/><path stroke="#88c804" d="M482 200h8"/><path stroke="#94c800" d="M490 200h8"/><path stroke="#98c800" d="M498 200h8"/><path stroke="#94c800" d="M506 200h16"/><path stroke="#a4c800" d="M522 200h8"/><path stroke="#a8c400" d="M530 200h8"/><path stroke="#a4c800" d="M538 200h8"/><path stroke="#9cc800" d="M546 200h16"/><path stroke="#98c800" d="M562 200h8"/><path stroke="#90c800" d="M570 200h8"/><path stroke="#88c804" d="M578 200h16"/><path stroke="#8cc804" d="M594 200h8"/><path stroke="#90c800" d="M602 200h8"/><path stroke="#a8c400" d="M610 200h8"/><path stroke="#c0a400" d="M618 200h8"/><path stroke="#c89400" d="M626 200h8"/><path stroke="#c89000" d="M634 200h8"/><path stroke="#cc8c00" d="M642 200h8"/><path stroke="#cc8800" d="M650 200h8"/><path stroke="#d08000" d="M658 200h8"/><path stroke="#d47800" d="M666 200h8"/><path stroke="#d47400" d="M674 200h8"/><path stroke="#d47000" d="M682 200h8"/><path stroke="#d85c04" d="M690 200h8"/><path stroke="#d85408" d="M698 200h8"/><path stroke="#d85804" d="M706 200h8"/><path stroke="#d85c04" d="M714 200h8"/><path stroke="#d85804" d="M722 200h8"/><path stroke="#d84c08" d="M730 200h8"/><path stroke="#d8440c" d="M738 200h8"/><path stroke="#d8400c" d="M746 200h24"/><path stroke="#d8440c" d="M770 200h8"/><path stroke="#24acd0" d="M90 208h16"/><path stroke="#24a8d0" d="M106 208h8"/><path stroke="#24a4d4" d="M114 208h8"/><path stroke="#24a0d4" d="M122 208h8"/><path stroke="#249cd4" d="M130 208h8"/><path stroke="#2498d4" d="M138 208h8"/><path stroke="#249cd4" d="M146 208h16"/><path stroke="#24a0d4" d="M162 208h8"/><path stroke="#24a8d0" d="M170 208h8"/><path stroke="#28b8d0" d="M178 208h8"/><path stroke="#28b8c4" d="M186 208h8"/><path stroke="#2cbcb8" d="M194 208h8"/><path stroke="#2cc0b0" d="M202 208h8"/><path stroke="#30c490" d="M210 208h8"/><path stroke="#30c470" d="M218 208h8"/><path stroke="#30c484" d="M226 208h8"/><path stroke="#30c48c" d="M234 208h8"/><path stroke="#30c47c" d="M242 208h16"/><path stroke="#30c480" d="M258 208h8"/><path stroke="#30c478" d="M266 208h8"/><path stroke="#30c454" d="M274 208h8"/><path stroke="#30c43c" d="M282 208h8"/><path stroke="#30c444" d="M290 208h8"/><path stroke="#30c460" d="M298 208h8"/><path stroke="#30c45c" d="M306 208h8"/><path stroke="#30c44c" d="M314 208h8"/><path stroke="#30c444" d="M322 208h8"/><path stroke="#30c438" d="M330 208h8"/><path stroke="#34c428" d="M338 208h8"/><path stroke="#34c420" d="M346 208h8"/><path stroke="#34c424" d="M354 208h24"/><path stroke="#38c420" d="M378 208h8"/><path stroke="#44c41c" d="M386 208h8"/><path stroke="#4cc418" d="M394 208h16"/><path stroke="#44c418" d="M410 208h8"/><path stroke="#44c41c" d="M418 208h8"/><path stroke="#4cc418" d="M426 208h8"/><path stroke="#50c814" d="M434 208h8"/><path stroke="#54c814" d="M442 208h8"/><path stroke="#60c810" d="M450 208h8"/><path stroke="#6cc808" d="M458 208h8"/><path stroke="#70cc08" d="M466 208h8"/><path stroke="#74cc04" d="M474 208h8"/><path stroke="#84c804" d="M482 208h8"/><path stroke="#8cc804" d="M490 208h8"/><path stroke="#90c800" d="M498 208h16"/><path stroke="#a4c800" d="M514 208h8"/><path stroke="#acc000" d="M522 208h16"/><path stroke="#a8c400" d="M538 208h8"/><path stroke="#a8c000" d="M546 208h8"/><path stroke="#acbc00" d="M554 208h8"/><path stroke="#a8c400" d="M562 208h8"/><path stroke="#90c800" d="M570 208h8"/><path stroke="#80c804" d="M578 208h16"/><path stroke="#88c804" d="M594 208h8"/><path stroke="#98c800" d="M602 208h8"/><path stroke="#b0bc00" d="M610 208h8"/><path stroke="#c49c00" d="M618 208h8"/><path stroke="#cc8c00" d="M626 208h8"/><path stroke="#d08800" d="M634 208h16"/><path stroke="#d08400" d="M650 208h8"/><path stroke="#d07c00" d="M658 208h8"/><path stroke="#d47800" d="M666 208h8"/><path stroke="#d47400" d="M674 208h8"/><path stroke="#d47000" d="M682 208h8"/><path stroke="#d86000" d="M690 208h8"/><path stroke="#d85804" d="M698 208h8"/><path stroke="#d85c04" d="M706 208h24"/><path stroke="#d85804" d="M730 208h8"/><path stroke="#d85404" d="M738 208h8"/><path stroke="#d84c08" d="M746 208h8"/><path stroke="#d8480c" d="M754 208h24"/><path stroke="#24acd0" d="M90 216h16"/><path stroke="#24a8d0" d="M106 216h8"/><path stroke="#24a8d4" d="M114 216h8"/><path stroke="#24a4d4" d="M122 216h32"/><path stroke="#24acd0" d="M154 216h8"/><path stroke="#28b4d0" d="M162 216h8"/><path stroke="#28b8c8" d="M170 216h8"/><path stroke="#28bcbc" d="M178 216h8"/><path stroke="#2cc0b0" d="M186 216h8"/><path stroke="#2cc0a4" d="M194 216h8"/><path stroke="#30c4a0" d="M202 216h8"/><path stroke="#30c46c" d="M210 216h8"/><path stroke="#30c450" d="M218 216h8"/><path stroke="#30c458" d="M226 216h8"/><path stroke="#30c450" d="M234 216h8"/><path stroke="#34c42c" d="M242 216h8"/><path stroke="#34c430" d="M250 216h8"/><path stroke="#30c450" d="M258 216h8"/><path stroke="#34c430" d="M266 216h8"/><path stroke="#34c420" d="M274 216h8"/><path stroke="#34c42c" d="M282 216h8"/><path stroke="#30c434" d="M290 216h8"/><path stroke="#30c43c" d="M298 216h8"/><path stroke="#30c440" d="M306 216h16"/><path stroke="#30c438" d="M322 216h8"/><path stroke="#34c424" d="M330 216h8"/><path stroke="#3cc420" d="M338 216h8"/><path stroke="#3cc41c" d="M346 216h16"/><path stroke="#3cc420" d="M362 216h8"/><path stroke="#3cc41c" d="M370 216h8"/><path stroke="#44c418" d="M378 216h8"/><path stroke="#4cc814" d="M386 216h8"/><path stroke="#50c814" d="M394 216h24"/><path stroke="#4cc814" d="M418 216h8"/><path stroke="#50c814" d="M426 216h24"/><path stroke="#5cc810" d="M450 216h8"/><path stroke="#6ccc08" d="M458 216h8"/><path stroke="#70cc08" d="M466 216h16"/><path stroke="#7cc804" d="M482 216h8"/><path stroke="#80c804" d="M490 216h16"/><path stroke="#8cc804" d="M506 216h8"/><path stroke="#a0c800" d="M514 216h8"/><path stroke="#a8c400" d="M522 216h16"/><path stroke="#a8c800" d="M538 216h8"/><path stroke="#acc000" d="M546 216h8"/><path stroke="#acbc00" d="M554 216h8"/><path stroke="#a8c400" d="M562 216h8"/><path stroke="#88c804" d="M570 216h8"/><path stroke="#7cc804" d="M578 216h16"/><path stroke="#80c804" d="M594 216h8"/><path stroke="#a0c800" d="M602 216h8"/><path stroke="#bca800" d="M610 216h8"/><path stroke="#cc9000" d="M618 216h8"/><path stroke="#d08400" d="M626 216h24"/><path stroke="#d07c00" d="M650 216h8"/><path stroke="#d47800" d="M658 216h16"/><path stroke="#d47400" d="M674 216h8"/><path stroke="#d86800" d="M682 216h8"/><path stroke="#d85804" d="M690 216h8"/><path stroke="#d85404" d="M698 216h8"/><path stroke="#d85c04" d="M706 216h8"/><path stroke="#d86400" d="M714 216h16"/><path stroke="#d85c04" d="M730 216h8"/><path stroke="#d85804" d="M738 216h8"/><path stroke="#d85404" d="M746 216h8"/><path stroke="#d85008" d="M754 216h24"/><path stroke="#24b0d0" d="M90 224h8"/><path stroke="#24acd0" d="M98 224h24"/><path stroke="#24a8d0" d="M122 224h8"/><path stroke="#24acd0" d="M130 224h16"/><path stroke="#24b0d0" d="M146 224h8"/><path stroke="#28b8cc" d="M154 224h8"/><path stroke="#28b8c4" d="M162 224h8"/><path stroke="#28bcbc" d="M170 224h8"/><path stroke="#2cc0b0" d="M178 224h8"/><path stroke="#2cc0a4" d="M186 224h8"/><path stroke="#30c4a0" d="M194 224h8"/><path stroke="#30c498" d="M202 224h8"/><path stroke="#30c478" d="M210 224h8"/><path stroke="#30c444" d="M218 224h8"/><path stroke="#34c430" d="M226 224h16"/><path stroke="#34c420" d="M242 224h16"/><path stroke="#34c42c" d="M258 224h8"/><path stroke="#34c420" d="M266 224h8"/><path stroke="#38c420" d="M274 224h8"/><path stroke="#34c424" d="M282 224h8"/><path stroke="#34c430" d="M290 224h16"/><path stroke="#34c42c" d="M306 224h8"/><path stroke="#34c420" d="M314 224h8"/><path stroke="#38c420" d="M322 224h8"/><path stroke="#3cc420" d="M330 224h8"/><path stroke="#3cc41c" d="M338 224h8"/><path stroke="#40c41c" d="M346 224h16"/><path stroke="#44c41c" d="M362 224h8"/><path stroke="#48c418" d="M370 224h8"/><path stroke="#4cc814" d="M378 224h8"/><path stroke="#50c814" d="M386 224h64"/><path stroke="#54c814" d="M450 224h8"/><path stroke="#68c808" d="M458 224h8"/><path stroke="#6ccc08" d="M466 224h8"/><path stroke="#70cc08" d="M474 224h8"/><path stroke="#7cc804" d="M482 224h8"/><path stroke="#80c804" d="M490 224h16"/><path stroke="#8cc804" d="M506 224h8"/><path stroke="#9cc800" d="M514 224h16"/><path stroke="#98c800" d="M530 224h8"/><path stroke="#94c800" d="M538 224h24"/><path stroke="#78c804" d="M562 224h8"/><path stroke="#74cc04" d="M570 224h8"/><path stroke="#80c804" d="M578 224h8"/><path stroke="#7cc804" d="M586 224h8"/><path stroke="#88c804" d="M594 224h8"/><path stroke="#b4b400" d="M602 224h8"/><path stroke="#d08800" d="M610 224h8"/><path stroke="#d47800" d="M618 224h8"/><path stroke="#d47400" d="M626 224h8"/><path stroke="#d47000" d="M634 224h8"/><path stroke="#d46c00" d="M642 224h8"/><path stroke="#d47000" d="M650 224h8"/><path stroke="#d47400" d="M658 224h24"/><path stroke="#d86800" d="M682 224h8"/><path stroke="#d85c04" d="M690 224h16"/><path stroke="#d86400" d="M706 224h8"/><path stroke="#d46c00" d="M714 224h16"/><path stroke="#d86400" d="M730 224h8"/><path stroke="#d85c04" d="M738 224h16"/><path stroke="#d85804" d="M754 224h16"/><path stroke="#d85404" d="M770 224h8"/><path stroke="#24b0d0" d="M90 232h48"/><path stroke="#28b4d0" d="M138 232h8"/><path stroke="#28b8cc" d="M146 232h8"/><path stroke="#28b8c4" d="M154 232h8"/><path stroke="#28bcbc" d="M162 232h8"/><path stroke="#2cbcb4" d="M170 232h8"/><path stroke="#2cc0a8" d="M178 232h8"/><path stroke="#2cc0a4" d="M186 232h8"/><path stroke="#30c49c" d="M194 232h8"/><path stroke="#30c494" d="M202 232h8"/><path stroke="#30c470" d="M210 232h8"/><path stroke="#30c43c" d="M218 232h8"/><path stroke="#34c42c" d="M226 232h16"/><path stroke="#34c428" d="M242 232h8"/><path stroke="#34c424" d="M250 232h8"/><path stroke="#34c42c" d="M258 232h8"/><path stroke="#34c424" d="M266 232h8"/><path stroke="#34c420" d="M274 232h16"/><path stroke="#38c420" d="M290 232h16"/><path stroke="#3cc41c" d="M306 232h8"/><path stroke="#44c418" d="M314 232h8"/><path stroke="#48c418" d="M322 232h8"/><path stroke="#44c418" d="M330 232h8"/><path stroke="#44c41c" d="M338 232h16"/><path stroke="#48c418" d="M354 232h8"/><path stroke="#50c814" d="M362 232h8"/><path stroke="#54c814" d="M370 232h8"/><path stroke="#58c810" d="M378 232h40"/><path stroke="#54c814" d="M418 232h8"/><path stroke="#50c814" d="M426 232h16"/><path stroke="#48c418" d="M442 232h8"/><path stroke="#40c41c" d="M450 232h8"/><path stroke="#50c814" d="M458 232h8"/><path stroke="#64c80c" d="M466 232h8"/><path stroke="#6ccc08" d="M474 232h8"/><path stroke="#7cc804" d="M482 232h8"/><path stroke="#84c804" d="M490 232h8"/><path stroke="#8cc804" d="M498 232h8"/><path stroke="#94c800" d="M506 232h8"/><path stroke="#a4c800" d="M514 232h8"/><path stroke="#9cc800" d="M522 232h8"/><path stroke="#94c800" d="M530 232h8"/><path stroke="#88c804" d="M538 232h8"/><path stroke="#70cc08" d="M546 232h8"/><path stroke="#60c80c" d="M554 232h8"/><path stroke="#58c810" d="M562 232h8"/><path stroke="#64c80c" d="M570 232h8"/><path stroke="#98c800" d="M578 232h8"/><path stroke="#acc000" d="M586 232h8"/><path stroke="#b4b400" d="M594 232h8"/><path stroke="#d08800" d="M602 232h8"/><path stroke="#d86400" d="M610 232h8"/><path stroke="#d85c04" d="M618 232h16"/><path stroke="#d85804" d="M634 232h16"/><path stroke="#d86400" d="M650 232h8"/><path stroke="#d47000" d="M658 232h8"/><path stroke="#d47400" d="M666 232h8"/><path stroke="#d47000" d="M674 232h8"/><path stroke="#d46c00" d="M682 232h56"/><path stroke="#d46800" d="M738 232h8"/><path stroke="#d86800" d="M746 232h8"/><path stroke="#d86400" d="M754 232h8"/><path stroke="#d86000" d="M762 232h8"/><path stroke="#d85c04" d="M770 232h8"/><path stroke="#28b4d0" d="M90 240h32"/><path stroke="#28b8d0" d="M122 240h8"/><path stroke="#28b8cc" d="M130 240h8"/><path stroke="#28b8c8" d="M138 240h8"/><path stroke="#28b8c4" d="M146 240h8"/><path stroke="#28bcc0" d="M154 240h8"/><path stroke="#2cbcb8" d="M162 240h8"/><path stroke="#2cc0b0" d="M170 240h8"/><path stroke="#2cc0a8" d="M178 240h8"/><path stroke="#30c0a0" d="M186 240h8"/><path stroke="#30c498" d="M194 240h8"/><path stroke="#30c48c" d="M202 240h8"/><path stroke="#30c468" d="M210 240h8"/><path stroke="#30c444" d="M218 240h8"/><path stroke="#30c434" d="M226 240h40"/><path stroke="#34c42c" d="M266 240h8"/><path stroke="#34c424" d="M274 240h8"/><path stroke="#38c420" d="M282 240h8"/><path stroke="#3cc420" d="M290 240h8"/><path stroke="#3cc41c" d="M298 240h8"/><path stroke="#44c41c" d="M306 240h8"/><path stroke="#48c418" d="M314 240h8"/><path stroke="#4cc418" d="M322 240h16"/><path stroke="#4cc814" d="M338 240h8"/><path stroke="#54c814" d="M346 240h8"/><path stroke="#5cc810" d="M354 240h24"/><path stroke="#60c80c" d="M378 240h8"/><path stroke="#64c80c" d="M386 240h8"/><path stroke="#68c808" d="M394 240h8"/><path stroke="#68c80c" d="M402 240h8"/><path stroke="#60c810" d="M410 240h8"/><path stroke="#54c814" d="M418 240h8"/><path stroke="#50c814" d="M426 240h8"/><path stroke="#4cc818" d="M434 240h8"/><path stroke="#38c420" d="M442 240h8"/><path stroke="#34c430" d="M450 240h8"/><path stroke="#34c424" d="M458 240h8"/><path stroke="#48c418" d="M466 240h8"/><path stroke="#64c80c" d="M474 240h8"/><path stroke="#7cc804" d="M482 240h8"/><path stroke="#8cc804" d="M490 240h8"/><path stroke="#94c800" d="M498 240h8"/><path stroke="#9cc800" d="M506 240h8"/><path stroke="#acc000" d="M514 240h8"/><path stroke="#a8c400" d="M522 240h8"/><path stroke="#8cc804" d="M530 240h8"/><path stroke="#74cc04" d="M538 240h8"/><path stroke="#5cc810" d="M546 240h8"/><path stroke="#54c814" d="M554 240h8"/><path stroke="#58c810" d="M562 240h8"/><path stroke="#6ccc08" d="M570 240h8"/><path stroke="#b0b800" d="M578 240h8"/><path stroke="#bca400" d="M586 240h8"/><path stroke="#c89400" d="M594 240h8"/><path stroke="#d47000" d="M602 240h8"/><path stroke="#d85804" d="M610 240h8"/><path stroke="#d85008" d="M618 240h16"/><path stroke="#d85408" d="M634 240h8"/><path stroke="#d85404" d="M642 240h8"/><path stroke="#d85c00" d="M650 240h8"/><path stroke="#d46c00" d="M658 240h8"/><path stroke="#d47000" d="M666 240h24"/><path stroke="#d46c00" d="M690 240h72"/><path stroke="#d86800" d="M762 240h8"/><path stroke="#d86400" d="M770 240h8"/><path stroke="#28b8cc" d="M90 248h40"/><path stroke="#28b8c8" d="M130 248h8"/><path stroke="#28b8c4" d="M138 248h8"/><path stroke="#28bcc0" d="M146 248h8"/><path stroke="#28bcbc" d="M154 248h8"/><path stroke="#2cbcb4" d="M162 248h8"/><path stroke="#2cc0ac" d="M170 248h8"/><path stroke="#2cc0a8" d="M178 248h8"/><path stroke="#30c4a0" d="M186 248h8"/><path stroke="#30c494" d="M194 248h8"/><path stroke="#30c484" d="M202 248h8"/><path stroke="#30c468" d="M210 248h8"/><path stroke="#30c450" d="M218 248h8"/><path stroke="#30c440" d="M226 248h24"/><path stroke="#30c43c" d="M250 248h8"/><path stroke="#30c438" d="M258 248h8"/><path stroke="#34c42c" d="M266 248h8"/><path stroke="#34c420" d="M274 248h8"/><path stroke="#3cc420" d="M282 248h8"/><path stroke="#3cc41c" d="M290 248h8"/><path stroke="#40c41c" d="M298 248h8"/><path stroke="#48c418" d="M306 248h8"/><path stroke="#4cc418" d="M314 248h8"/><path stroke="#50c814" d="M322 248h24"/><path stroke="#5cc810" d="M346 248h8"/><path stroke="#60c80c" d="M354 248h24"/><path stroke="#64c80c" d="M378 248h8"/><path stroke="#6cc808" d="M386 248h8"/><path stroke="#6ccc08" d="M394 248h16"/><path stroke="#68c808" d="M410 248h8"/><path stroke="#60c80c" d="M418 248h8"/><path stroke="#54c814" d="M426 248h8"/><path stroke="#4cc418" d="M434 248h8"/><path stroke="#34c424" d="M442 248h8"/><path stroke="#30c434" d="M450 248h8"/><path stroke="#34c430" d="M458 248h8"/><path stroke="#40c41c" d="M466 248h8"/><path stroke="#64c80c" d="M474 248h8"/><path stroke="#80c804" d="M482 248h8"/><path stroke="#8cc804" d="M490 248h8"/><path stroke="#90c800" d="M498 248h8"/><path stroke="#9cc800" d="M506 248h8"/><path stroke="#a8c400" d="M514 248h8"/><path stroke="#98c800" d="M522 248h8"/><path stroke="#64c80c" d="M530 248h8"/><path stroke="#50c814" d="M538 248h8"/><path stroke="#54c814" d="M546 248h24"/><path stroke="#68c808" d="M570 248h8"/><path stroke="#b0b800" d="M578 248h8"/><path stroke="#c89400" d="M586 248h8"/><path stroke="#d47800" d="M594 248h8"/><path stroke="#d46800" d="M602 248h8"/><path stroke="#d85404" d="M610 248h8"/><path stroke="#d8440c" d="M618 248h8"/><path stroke="#d84010" d="M626 248h8"/><path stroke="#d85008" d="M634 248h8"/><path stroke="#d86000" d="M642 248h8"/><path stroke="#d86800" d="M650 248h8"/><path stroke="#d46c00" d="M658 248h8"/><path stroke="#d47000" d="M666 248h8"/><path stroke="#d47400" d="M674 248h8"/><path stroke="#d47000" d="M682 248h24"/><path stroke="#d46c00" d="M706 248h24"/><path stroke="#d47000" d="M730 248h16"/><path stroke="#d46c00" d="M746 248h24"/><path stroke="#d86800" d="M770 248h8"/><path stroke="#28b8cc" d="M90 256h16"/><path stroke="#28b8c8" d="M106 256h24"/><path stroke="#28b8c4" d="M130 256h8"/><path stroke="#28b8c0" d="M138 256h8"/><path stroke="#28bcbc" d="M146 256h8"/><path stroke="#2cbcb8" d="M154 256h8"/><path stroke="#2cbcb0" d="M162 256h8"/><path stroke="#2cc0ac" d="M170 256h8"/><path stroke="#2cc0a4" d="M178 256h8"/><path stroke="#30c4a0" d="M186 256h8"/><path stroke="#30c494" d="M194 256h8"/><path stroke="#30c484" d="M202 256h8"/><path stroke="#30c470" d="M210 256h8"/><path stroke="#30c45c" d="M218 256h8"/><path stroke="#30c450" d="M226 256h8"/><path stroke="#30c44c" d="M234 256h8"/><path stroke="#30c448" d="M242 256h8"/><path stroke="#30c440" d="M250 256h8"/><path stroke="#30c434" d="M258 256h8"/><path stroke="#34c424" d="M266 256h8"/><path stroke="#38c420" d="M274 256h8"/><path stroke="#40c41c" d="M282 256h24"/><path stroke="#48c418" d="M306 256h8"/><path stroke="#50c814" d="M314 256h24"/><path stroke="#54c814" d="M338 256h8"/><path stroke="#5cc810" d="M346 256h8"/><path stroke="#60c80c" d="M354 256h16"/><path stroke="#64c80c" d="M370 256h16"/><path stroke="#68c808" d="M386 256h8"/><path stroke="#6ccc08" d="M394 256h32"/><path stroke="#64c80c" d="M426 256h8"/><path stroke="#54c814" d="M434 256h8"/><path stroke="#3cc420" d="M442 256h8"/><path stroke="#34c428" d="M450 256h8"/><path stroke="#34c424" d="M458 256h8"/><path stroke="#48c418" d="M466 256h8"/><path stroke="#6ccc08" d="M474 256h8"/><path stroke="#88c804" d="M482 256h8"/><path stroke="#90c800" d="M490 256h16"/><path stroke="#84c804" d="M506 256h8"/><path stroke="#74c804" d="M514 256h8"/><path stroke="#64c80c" d="M522 256h8"/><path stroke="#4cc418" d="M530 256h8"/><path stroke="#44c418" d="M538 256h8"/><path stroke="#50c814" d="M546 256h8"/><path stroke="#58c810" d="M554 256h16"/><path stroke="#68c80c" d="M570 256h8"/><path stroke="#b0b800" d="M578 256h8"/><path stroke="#d08400" d="M586 256h8"/><path stroke="#d46c00" d="M594 256h8"/><path stroke="#d46800" d="M602 256h8"/><path stroke="#d85404" d="M610 256h8"/><path stroke="#d84010" d="M618 256h8"/><path stroke="#d83c10" d="M626 256h8"/><path stroke="#d85404" d="M634 256h8"/><path stroke="#d46c00" d="M642 256h16"/><path stroke="#d47000" d="M658 256h8"/><path stroke="#d47400" d="M666 256h24"/><path stroke="#d47000" d="M690 256h32"/><path stroke="#d46c00" d="M722 256h8"/><path stroke="#d47000" d="M730 256h16"/><path stroke="#d46c00" d="M746 256h24"/><path stroke="#d46800" d="M770 256h8"/><path stroke="#28b8c8" d="M90 264h24"/><path stroke="#28b8c4" d="M114 264h16"/><path stroke="#28bcc0" d="M130 264h8"/><path stroke="#28bcbc" d="M138 264h8"/><path stroke="#2cbcb8" d="M146 264h8"/><path stroke="#2cbcb4" d="M154 264h8"/><path stroke="#2cc0b0" d="M162 264h8"/><path stroke="#2cc0a8" d="M170 264h8"/><path stroke="#2cc0a4" d="M178 264h8"/><path stroke="#30c4a0" d="M186 264h8"/><path stroke="#30c494" d="M194 264h8"/><path stroke="#30c484" d="M202 264h8"/><path stroke="#30c474" d="M210 264h8"/><path stroke="#30c464" d="M218 264h8"/><path stroke="#30c45c" d="M226 264h8"/><path stroke="#30c450" d="M234 264h8"/><path stroke="#30c448" d="M242 264h8"/><path stroke="#30c43c" d="M250 264h8"/><path stroke="#34c42c" d="M258 264h8"/><path stroke="#38c420" d="M266 264h8"/><path stroke="#3cc41c" d="M274 264h8"/><path stroke="#40c41c" d="M282 264h24"/><path stroke="#4cc418" d="M306 264h8"/><path stroke="#50c814" d="M314 264h32"/><path stroke="#54c814" d="M346 264h8"/><path stroke="#5cc810" d="M354 264h8"/><path stroke="#60c80c" d="M362 264h8"/><path stroke="#64c80c" d="M370 264h24"/><path stroke="#6ccc08" d="M394 264h32"/><path stroke="#6cc808" d="M426 264h8"/><path stroke="#60c80c" d="M434 264h8"/><path stroke="#4cc418" d="M442 264h8"/><path stroke="#40c41c" d="M450 264h8"/><path stroke="#44c418" d="M458 264h8"/><path stroke="#58c810" d="M466 264h8"/><path stroke="#70cc08" d="M474 264h8"/><path stroke="#84c804" d="M482 264h8"/><path stroke="#8cc804" d="M490 264h8"/><path stroke="#88c804" d="M498 264h8"/><path stroke="#6ccc08" d="M506 264h8"/><path stroke="#4cc814" d="M514 264h16"/><path stroke="#50c814" d="M530 264h16"/><path stroke="#5cc810" d="M546 264h8"/><path stroke="#68c808" d="M554 264h8"/><path stroke="#6ccc08" d="M562 264h8"/><path stroke="#88c804" d="M570 264h8"/><path stroke="#b8b000" d="M578 264h8"/><path stroke="#d08800" d="M586 264h8"/><path stroke="#d47400" d="M594 264h8"/><path stroke="#d46c00" d="M602 264h8"/><path stroke="#d85c04" d="M610 264h8"/><path stroke="#d8480c" d="M618 264h16"/><path stroke="#d86000" d="M634 264h8"/><path stroke="#d46c00" d="M642 264h8"/><path stroke="#d47000" d="M650 264h16"/><path stroke="#d47400" d="M666 264h8"/><path stroke="#d47800" d="M674 264h8"/><path stroke="#d47400" d="M682 264h16"/><path stroke="#d47000" d="M698 264h40"/><path stroke="#d46c00" d="M738 264h40"/><path stroke="#28b8c4" d="M90 272h24"/><path stroke="#28b8c0" d="M114 272h8"/><path stroke="#28bcc0" d="M122 272h8"/><path stroke="#28bcbc" d="M130 272h8"/><path stroke="#2cbcb8" d="M138 272h8"/><path stroke="#2cbcb4" d="M146 272h8"/><path stroke="#2cbcb0" d="M154 272h8"/><path stroke="#2cc0ac" d="M162 272h8"/><path stroke="#2cc0a8" d="M170 272h8"/><path stroke="#2cc0a4" d="M178 272h8"/><path stroke="#30c4a0" d="M186 272h8"/><path stroke="#30c490" d="M194 272h8"/><path stroke="#30c484" d="M202 272h8"/><path stroke="#30c478" d="M210 272h8"/><path stroke="#30c468" d="M218 272h8"/><path stroke="#30c45c" d="M226 272h8"/><path stroke="#30c450" d="M234 272h8"/><path stroke="#30c444" d="M242 272h8"/><path stroke="#30c434" d="M250 272h8"/><path stroke="#34c424" d="M258 272h8"/><path stroke="#3cc41c" d="M266 272h8"/><path stroke="#44c41c" d="M274 272h8"/><path stroke="#44c418" d="M282 272h8"/><path stroke="#48c418" d="M290 272h8"/><path stroke="#50c814" d="M298 272h8"/><path stroke="#58c810" d="M306 272h16"/><path stroke="#54c814" d="M322 272h8"/><path stroke="#50c814" d="M330 272h16"/><path stroke="#54c814" d="M346 272h8"/><path stroke="#5cc810" d="M354 272h8"/><path stroke="#64c80c" d="M362 272h24"/><path stroke="#68c808" d="M386 272h8"/><path stroke="#6ccc08" d="M394 272h8"/><path stroke="#70cc08" d="M402 272h16"/><path stroke="#6ccc08" d="M418 272h16"/><path stroke="#68c80c" d="M434 272h8"/><path stroke="#5cc810" d="M442 272h8"/><path stroke="#58c810" d="M450 272h16"/><path stroke="#64c80c" d="M466 272h8"/><path stroke="#70cc08" d="M474 272h8"/><path stroke="#78c804" d="M482 272h16"/><path stroke="#6ccc08" d="M498 272h8"/><path stroke="#58c810" d="M506 272h8"/><path stroke="#48c418" d="M514 272h8"/><path stroke="#4cc418" d="M522 272h8"/><path stroke="#6ccc08" d="M530 272h8"/><path stroke="#8cc804" d="M538 272h8"/><path stroke="#9cc800" d="M546 272h8"/><path stroke="#a8c400" d="M554 272h8"/><path stroke="#b4b000" d="M562 272h8"/><path stroke="#c09c00" d="M570 272h8"/><path stroke="#c89000" d="M578 272h8"/><path stroke="#d08800" d="M586 272h8"/><path stroke="#d07c00" d="M594 272h8"/><path stroke="#d47400" d="M602 272h8"/><path stroke="#d86800" d="M610 272h8"/><path stroke="#d85c04" d="M618 272h16"/><path stroke="#d86800" d="M634 272h8"/><path stroke="#d46c00" d="M642 272h8"/><path stroke="#d47000" d="M650 272h16"/><path stroke="#d47400" d="M666 272h8"/><path stroke="#d47800" d="M674 272h8"/><path stroke="#d47400" d="M682 272h16"/><path stroke="#d47000" d="M698 272h40"/><path stroke="#d46c00" d="M738 272h40"/><path stroke="#28b8c0" d="M90 280h16"/><path stroke="#28bcc0" d="M106 280h8"/><path stroke="#28bcbc" d="M114 280h16"/><path stroke="#2cbcb8" d="M130 280h8"/><path stroke="#2cbcb4" d="M138 280h16"/><path stroke="#2cc0b0" d="M154 280h8"/><path stroke="#2cc0ac" d="M162 280h8"/><path stroke="#2cc0a8" d="M170 280h8"/><path stroke="#2cc0a0" d="M178 280h8"/><path stroke="#30c49c" d="M186 280h8"/><path stroke="#30c490" d="M194 280h8"/><path stroke="#30c484" d="M202 280h8"/><path stroke="#30c474" d="M210 280h8"/><path stroke="#30c468" d="M218 280h8"/><path stroke="#30c45c" d="M226 280h8"/><path stroke="#30c44c" d="M234 280h8"/><path stroke="#30c43c" d="M242 280h8"/><path stroke="#34c428" d="M250 280h8"/><path stroke="#38c420" d="M258 280h8"/><path stroke="#44c41c" d="M266 280h8"/><path stroke="#48c418" d="M274 280h8"/><path stroke="#50c814" d="M282 280h8"/><path stroke="#54c814" d="M290 280h8"/><path stroke="#5cc810" d="M298 280h8"/><path stroke="#60c80c" d="M306 280h16"/><path stroke="#58c810" d="M322 280h8"/><path stroke="#54c814" d="M330 280h16"/><path stroke="#58c810" d="M346 280h8"/><path stroke="#60c80c" d="M354 280h8"/><path stroke="#68c808" d="M362 280h8"/><path stroke="#6ccc08" d="M370 280h8"/><path stroke="#70cc08" d="M378 280h8"/><path stroke="#78c804" d="M386 280h16"/><path stroke="#70cc08" d="M402 280h32"/><path stroke="#6ccc08" d="M434 280h8"/><path stroke="#64c80c" d="M442 280h8"/><path stroke="#5cc810" d="M450 280h16"/><path stroke="#64c80c" d="M466 280h8"/><path stroke="#6ccc08" d="M474 280h8"/><path stroke="#6cc808" d="M482 280h8"/><path stroke="#60c80c" d="M490 280h8"/><path stroke="#58c810" d="M498 280h8"/><path stroke="#54c814" d="M506 280h16"/><path stroke="#70cc08" d="M522 280h8"/><path stroke="#b0b800" d="M530 280h8"/><path stroke="#c0a000" d="M538 280h8"/><path stroke="#c49c00" d="M546 280h8"/><path stroke="#c89000" d="M554 280h8"/><path stroke="#d08000" d="M562 280h8"/><path stroke="#d47400" d="M570 280h16"/><path stroke="#d07c00" d="M586 280h24"/><path stroke="#d47400" d="M610 280h8"/><path stroke="#d47000" d="M618 280h8"/><path stroke="#d46c00" d="M626 280h8"/><path stroke="#d47000" d="M634 280h24"/><path stroke="#d47400" d="M658 280h40"/><path stroke="#d47000" d="M698 280h56"/><path stroke="#d46c00" d="M754 280h24"/><path stroke="#28bcc0" d="M90 288h8"/><path stroke="#28bcbc" d="M98 288h24"/><path stroke="#2cbcb8" d="M122 288h8"/><path stroke="#2cbcb4" d="M130 288h16"/><path stroke="#2cc0b0" d="M146 288h8"/><path stroke="#2cc0ac" d="M154 288h8"/><path stroke="#2cc0a8" d="M162 288h8"/><path stroke="#2cc0a4" d="M170 288h8"/><path stroke="#30c4a0" d="M178 288h8"/><path stroke="#30c494" d="M186 288h8"/><path stroke="#30c488" d="M194 288h8"/><path stroke="#30c47c" d="M202 288h8"/><path stroke="#30c470" d="M210 288h8"/><path stroke="#30c464" d="M218 288h8"/><path stroke="#30c454" d="M226 288h8"/><path stroke="#30c444" d="M234 288h8"/><path stroke="#34c430" d="M242 288h8"/><path stroke="#38c420" d="M250 288h8"/><path stroke="#40c41c" d="M258 288h8"/><path stroke="#4cc418" d="M266 288h8"/><path stroke="#50c814" d="M274 288h8"/><path stroke="#58c810" d="M282 288h8"/><path stroke="#5cc810" d="M290 288h8"/><path stroke="#60c80c" d="M298 288h48"/><path stroke="#64c80c" d="M346 288h8"/><path stroke="#6ccc08" d="M354 288h8"/><path stroke="#74cc04" d="M362 288h8"/><path stroke="#78c804" d="M370 288h8"/><path stroke="#7cc804" d="M378 288h24"/><path stroke="#74cc04" d="M402 288h8"/><path stroke="#70cc08" d="M410 288h24"/><path stroke="#6ccc08" d="M434 288h8"/><path stroke="#60c80c" d="M442 288h8"/><path stroke="#58c810" d="M450 288h16"/><path stroke="#5cc810" d="M466 288h8"/><path stroke="#68c808" d="M474 288h8"/><path stroke="#6ccc08" d="M482 288h8"/><path stroke="#64c80c" d="M490 288h8"/><path stroke="#58c810" d="M498 288h16"/><path stroke="#6ccc08" d="M514 288h8"/><path stroke="#acbc00" d="M522 288h8"/><path stroke="#c49c00" d="M530 288h8"/><path stroke="#c89400" d="M538 288h8"/><path stroke="#cc8c00" d="M546 288h8"/><path stroke="#d07c00" d="M554 288h8"/><path stroke="#d47000" d="M562 288h8"/><path stroke="#d46800" d="M570 288h8"/><path stroke="#d46c00" d="M578 288h8"/><path stroke="#d47800" d="M586 288h8"/><path stroke="#d08000" d="M594 288h16"/><path stroke="#d07800" d="M610 288h8"/><path stroke="#d47000" d="M618 288h24"/><path stroke="#d47400" d="M642 288h56"/><path stroke="#d47000" d="M698 288h80"/><path stroke="#28bcbc" d="M90 296h16"/><path stroke="#2cbcb8" d="M106 296h16"/><path stroke="#2cbcb4" d="M122 296h16"/><path stroke="#2cc0b0" d="M138 296h8"/><path stroke="#2cc0ac" d="M146 296h8"/><path stroke="#2cc0a8" d="M154 296h8"/><path stroke="#2cc0a4" d="M162 296h8"/><path stroke="#30c0a0" d="M170 296h8"/><path stroke="#30c49c" d="M178 296h8"/><path stroke="#30c490" d="M186 296h8"/><path stroke="#30c484" d="M194 296h8"/><path stroke="#30c478" d="M202 296h8"/><path stroke="#30c468" d="M210 296h8"/><path stroke="#30c458" d="M218 296h8"/><path stroke="#30c448" d="M226 296h8"/><path stroke="#30c434" d="M234 296h8"/><path stroke="#34c420" d="M242 296h8"/><path stroke="#40c41c" d="M250 296h8"/><path stroke="#48c418" d="M258 296h8"/><path stroke="#54c814" d="M266 296h8"/><path stroke="#5cc810" d="M274 296h8"/><path stroke="#64c80c" d="M282 296h8"/><path stroke="#68c808" d="M290 296h16"/><path stroke="#6ccc08" d="M306 296h8"/><path stroke="#70cc08" d="M314 296h8"/><path stroke="#78c804" d="M322 296h8"/><path stroke="#7cc804" d="M330 296h8"/><path stroke="#80c804" d="M338 296h8"/><path stroke="#84c804" d="M346 296h8"/><path stroke="#88c804" d="M354 296h16"/><path stroke="#84c804" d="M370 296h8"/><path stroke="#80c804" d="M378 296h24"/><path stroke="#7cc804" d="M402 296h8"/><path stroke="#74cc04" d="M410 296h24"/><path stroke="#70cc08" d="M434 296h8"/><path stroke="#60c80c" d="M442 296h8"/><path stroke="#54c814" d="M450 296h16"/><path stroke="#58c810" d="M466 296h8"/><path stroke="#6ccc08" d="M474 296h8"/><path stroke="#70cc08" d="M482 296h8"/><path stroke="#6ccc08" d="M490 296h8"/><path stroke="#68c80c" d="M498 296h8"/><path stroke="#6ccc08" d="M506 296h8"/><path stroke="#94c800" d="M514 296h8"/><path stroke="#b8a800" d="M522 296h8"/><path stroke="#c49800" d="M530 296h8"/><path stroke="#c89000" d="M538 296h8"/><path stroke="#d07c00" d="M546 296h8"/><path stroke="#d47400" d="M554 296h8"/><path stroke="#d47000" d="M562 296h8"/><path stroke="#d46c00" d="M570 296h16"/><path stroke="#d07c00" d="M586 296h8"/><path stroke="#d08000" d="M594 296h16"/><path stroke="#d07800" d="M610 296h8"/><path stroke="#d47000" d="M618 296h24"/><path stroke="#d47400" d="M642 296h8"/><path stroke="#d47800" d="M650 296h16"/><path stroke="#d47400" d="M666 296h40"/><path stroke="#d47000" d="M706 296h72"/><path stroke="#2cbcb8" d="M90 304h16"/><path stroke="#2cbcb4" d="M106 304h16"/><path stroke="#2cbcb0" d="M122 304h8"/><path stroke="#2cc0b0" d="M130 304h8"/><path stroke="#2cc0ac" d="M138 304h8"/><path stroke="#2cc0a8" d="M146 304h8"/><path stroke="#2cc0a4" d="M154 304h8"/><path stroke="#2cc0a0" d="M162 304h8"/><path stroke="#30c49c" d="M170 304h8"/><path stroke="#30c494" d="M178 304h8"/><path stroke="#30c488" d="M186 304h8"/><path stroke="#30c47c" d="M194 304h8"/><path stroke="#30c46c" d="M202 304h8"/><path stroke="#30c460" d="M210 304h8"/><path stroke="#30c44c" d="M218 304h8"/><path stroke="#30c43c" d="M226 304h8"/><path stroke="#34c428" d="M234 304h8"/><path stroke="#3cc420" d="M242 304h8"/><path stroke="#48c418" d="M250 304h8"/><path stroke="#54c814" d="M258 304h8"/><path stroke="#60c80c" d="M266 304h8"/><path stroke="#68c808" d="M274 304h8"/><path stroke="#74cc04" d="M282 304h8"/><path stroke="#7cc804" d="M290 304h8"/><path stroke="#84c804" d="M298 304h8"/><path stroke="#88c804" d="M306 304h8"/><path stroke="#8cc804" d="M314 304h8"/><path stroke="#98c800" d="M322 304h8"/><path stroke="#9cc800" d="M330 304h16"/><path stroke="#a0c800" d="M346 304h8"/><path stroke="#9cc800" d="M354 304h16"/><path stroke="#98c800" d="M370 304h8"/><path stroke="#94c800" d="M378 304h16"/><path stroke="#90c800" d="M394 304h8"/><path stroke="#8cc804" d="M402 304h8"/><path stroke="#84c804" d="M410 304h16"/><path stroke="#8cc804" d="M426 304h16"/><path stroke="#6ccc08" d="M442 304h8"/><path stroke="#58c810" d="M450 304h8"/><path stroke="#54c814" d="M458 304h8"/><path stroke="#5cc810" d="M466 304h8"/><path stroke="#70cc08" d="M474 304h16"/><path stroke="#74cc04" d="M490 304h8"/><path stroke="#84c804" d="M498 304h8"/><path stroke="#a0c800" d="M506 304h8"/><path stroke="#b4b400" d="M514 304h8"/><path stroke="#c0a000" d="M522 304h8"/><path stroke="#c49800" d="M530 304h8"/><path stroke="#cc8c00" d="M538 304h8"/><path stroke="#d47800" d="M546 304h8"/><path stroke="#d47000" d="M554 304h24"/><path stroke="#d47400" d="M578 304h8"/><path stroke="#d07c00" d="M586 304h8"/><path stroke="#d08000" d="M594 304h16"/><path stroke="#d07800" d="M610 304h8"/><path stroke="#d47000" d="M618 304h24"/><path stroke="#d47400" d="M642 304h8"/><path stroke="#d47800" d="M650 304h40"/><path stroke="#d47400" d="M690 304h88"/><path stroke="#2cbcb4" d="M90 312h24"/><path stroke="#2cc0b0" d="M114 312h8"/><path stroke="#2cc0ac" d="M122 312h16"/><path stroke="#2cc0a8" d="M138 312h8"/><path stroke="#2cc0a4" d="M146 312h16"/><path stroke="#30c4a0" d="M162 312h8"/><path stroke="#30c494" d="M170 312h8"/><path stroke="#30c488" d="M178 312h8"/><path stroke="#30c47c" d="M186 312h8"/><path stroke="#30c470" d="M194 312h8"/><path stroke="#30c464" d="M202 312h8"/><path stroke="#30c454" d="M210 312h8"/><path stroke="#30c440" d="M218 312h8"/><path stroke="#34c42c" d="M226 312h8"/><path stroke="#38c420" d="M234 312h8"/><path stroke="#44c41c" d="M242 312h8"/><path stroke="#50c814" d="M250 312h8"/><path stroke="#5cc810" d="M258 312h8"/><path stroke="#68c808" d="M266 312h8"/><path stroke="#78c804" d="M274 312h8"/><path stroke="#84c804" d="M282 312h8"/><path stroke="#8cc804" d="M290 312h8"/><path stroke="#90c800" d="M298 312h16"/><path stroke="#98c800" d="M314 312h8"/><path stroke="#a0c800" d="M322 312h8"/><path stroke="#a4c800" d="M330 312h32"/><path stroke="#a8c400" d="M362 312h16"/><path stroke="#a8c000" d="M378 312h8"/><path stroke="#acc000" d="M386 312h8"/><path stroke="#a8c400" d="M394 312h8"/><path stroke="#a8c800" d="M402 312h8"/><path stroke="#a4c800" d="M410 312h8"/><path stroke="#acc000" d="M418 312h8"/><path stroke="#b0b400" d="M426 312h8"/><path stroke="#b0b800" d="M434 312h8"/><path stroke="#a4c800" d="M442 312h8"/><path stroke="#7cc804" d="M450 312h8"/><path stroke="#70cc08" d="M458 312h8"/><path stroke="#78c804" d="M466 312h8"/><path stroke="#7cc804" d="M474 312h8"/><path stroke="#80c804" d="M482 312h8"/><path stroke="#94c800" d="M490 312h8"/><path stroke="#acc000" d="M498 312h8"/><path stroke="#b0b800" d="M506 312h8"/><path stroke="#bca800" d="M514 312h8"/><path stroke="#c49c00" d="M522 312h8"/><path stroke="#c49800" d="M530 312h8"/><path stroke="#c89000" d="M538 312h8"/><path stroke="#d08000" d="M546 312h8"/><path stroke="#d47800" d="M554 312h8"/><path stroke="#d47400" d="M562 312h8"/><path stroke="#d47000" d="M570 312h16"/><path stroke="#d47400" d="M586 312h8"/><path stroke="#d07c00" d="M594 312h16"/><path stroke="#d47800" d="M610 312h8"/><path stroke="#d47400" d="M618 312h8"/><path stroke="#d47000" d="M626 312h8"/><path stroke="#d47400" d="M634 312h16"/><path stroke="#d47800" d="M650 312h64"/><path stroke="#d47400" d="M714 312h64"/><path stroke="#2cbcb4" d="M90 320h8"/><path stroke="#2cbcb0" d="M98 320h8"/><path stroke="#2cc0b0" d="M106 320h8"/><path stroke="#2cc0ac" d="M114 320h16"/><path stroke="#2cc0a8" d="M130 320h8"/><path stroke="#2cc0a4" d="M138 320h16"/><path stroke="#30c4a0" d="M154 320h8"/><path stroke="#30c494" d="M162 320h8"/><path stroke="#30c48c" d="M170 320h8"/><path stroke="#30c480" d="M178 320h8"/><path stroke="#30c474" d="M186 320h8"/><path stroke="#30c468" d="M194 320h8"/><path stroke="#30c458" d="M202 320h8"/><path stroke="#30c448" d="M210 320h8"/><path stroke="#30c434" d="M218 320h8"/><path stroke="#34c420" d="M226 320h8"/><path stroke="#40c41c" d="M234 320h8"/><path stroke="#4cc418" d="M242 320h8"/><path stroke="#58c810" d="M250 320h8"/><path stroke="#64c80c" d="M258 320h8"/><path stroke="#74cc04" d="M266 320h8"/><path stroke="#80c804" d="M274 320h8"/><path stroke="#8cc804" d="M282 320h8"/><path stroke="#90c800" d="M290 320h16"/><path stroke="#94c800" d="M306 320h8"/><path stroke="#98c800" d="M314 320h8"/><path stroke="#a4c800" d="M322 320h8"/><path stroke="#a8c800" d="M330 320h24"/><path stroke="#a8c400" d="M354 320h8"/><path stroke="#acc000" d="M362 320h24"/><path stroke="#acbc00" d="M386 320h8"/><path stroke="#acc000" d="M394 320h16"/><path stroke="#b0b800" d="M410 320h8"/><path stroke="#bca800" d="M418 320h8"/><path stroke="#c0a000" d="M426 320h16"/><path stroke="#bca800" d="M442 320h8"/><path stroke="#b0b800" d="M450 320h8"/><path stroke="#acbc00" d="M458 320h8"/><path stroke="#a8c400" d="M466 320h8"/><path stroke="#a0c800" d="M474 320h16"/><path stroke="#acbc00" d="M490 320h8"/><path stroke="#b0b400" d="M498 320h8"/><path stroke="#b4b400" d="M506 320h8"/><path stroke="#bca400" d="M514 320h8"/><path stroke="#c49c00" d="M522 320h8"/><path stroke="#c89400" d="M530 320h8"/><path stroke="#cc8c00" d="M538 320h8"/><path stroke="#d08400" d="M546 320h8"/><path stroke="#d07c00" d="M554 320h8"/><path stroke="#d47400" d="M562 320h8"/><path stroke="#d47000" d="M570 320h32"/><path stroke="#d47400" d="M602 320h16"/><path stroke="#d47800" d="M618 320h8"/><path stroke="#d07800" d="M626 320h16"/><path stroke="#d47800" d="M642 320h24"/><path stroke="#d07800" d="M666 320h48"/><path stroke="#d47800" d="M714 320h64"/><path stroke="#2cc0b0" d="M90 328h8"/><path stroke="#2cc0ac" d="M98 328h16"/><path stroke="#2cc0a8" d="M114 328h16"/><path stroke="#2cc0a4" d="M130 328h8"/><path stroke="#2cc0a0" d="M138 328h8"/><path stroke="#30c4a0" d="M146 328h8"/><path stroke="#30c494" d="M154 328h8"/><path stroke="#30c48c" d="M162 328h8"/><path stroke="#30c480" d="M170 328h8"/><path stroke="#30c478" d="M178 328h8"/><path stroke="#30c468" d="M186 328h8"/><path stroke="#30c45c" d="M194 328h8"/><path stroke="#30c44c" d="M202 328h8"/><path stroke="#30c43c" d="M210 328h8"/><path stroke="#34c428" d="M218 328h8"/><path stroke="#3cc420" d="M226 328h8"/><path stroke="#44c418" d="M234 328h8"/><path stroke="#50c814" d="M242 328h8"/><path stroke="#60c80c" d="M250 328h8"/><path stroke="#6ccc08" d="M258 328h8"/><path stroke="#78c804" d="M266 328h8"/><path stroke="#84c804" d="M274 328h8"/><path stroke="#8cc804" d="M282 328h8"/><path stroke="#90c800" d="M290 328h8"/><path stroke="#94c800" d="M298 328h16"/><path stroke="#9cc800" d="M314 328h8"/><path stroke="#a8c400" d="M322 328h40"/><path stroke="#acc000" d="M362 328h24"/><path stroke="#acbc00" d="M386 328h16"/><path stroke="#b0b800" d="M402 328h8"/><path stroke="#bca800" d="M410 328h8"/><path stroke="#c49c00" d="M418 328h8"/><path stroke="#c49800" d="M426 328h8"/><path stroke="#c49c00" d="M434 328h8"/><path stroke="#c0a000" d="M442 328h8"/><path stroke="#b4b000" d="M450 328h8"/><path stroke="#b4b400" d="M458 328h8"/><path stroke="#b0b800" d="M466 328h8"/><path stroke="#acbc00" d="M474 328h8"/><path stroke="#acc000" d="M482 328h8"/><path stroke="#b0b800" d="M490 328h8"/><path stroke="#b4b400" d="M498 328h8"/><path stroke="#b4b000" d="M506 328h8"/><path stroke="#bca400" d="M514 328h8"/><path stroke="#c89400" d="M522 328h8"/><path stroke="#cc8800" d="M530 328h8"/><path stroke="#d08400" d="M538 328h16"/><path stroke="#d08000" d="M554 328h8"/><path stroke="#d47800" d="M562 328h8"/><path stroke="#d47000" d="M570 328h40"/><path stroke="#d47400" d="M610 328h8"/><path stroke="#d07c00" d="M618 328h8"/><path stroke="#d08000" d="M626 328h24"/><path stroke="#d07c00" d="M650 328h88"/><path stroke="#d07800" d="M738 328h40"/><path stroke="#2cc0ac" d="M90 336h8"/><path stroke="#2cc0a8" d="M98 336h16"/><path stroke="#2cc0a4" d="M114 336h16"/><path stroke="#30c0a0" d="M130 336h8"/><path stroke="#30c49c" d="M138 336h8"/><path stroke="#30c494" d="M146 336h8"/><path stroke="#30c48c" d="M154 336h8"/><path stroke="#30c484" d="M162 336h8"/><path stroke="#30c478" d="M170 336h8"/><path stroke="#30c46c" d="M178 336h8"/><path stroke="#30c460" d="M186 336h8"/><path stroke="#30c450" d="M194 336h8"/><path stroke="#30c440" d="M202 336h8"/><path stroke="#34c430" d="M210 336h8"/><path stroke="#34c420" d="M218 336h8"/><path stroke="#40c41c" d="M226 336h8"/><path stroke="#4cc418" d="M234 336h8"/><path stroke="#58c810" d="M242 336h8"/><path stroke="#64c80c" d="M250 336h8"/><path stroke="#70cc08" d="M258 336h8"/><path stroke="#7cc804" d="M266 336h8"/><path stroke="#88c804" d="M274 336h8"/><path stroke="#90c800" d="M282 336h8"/><path stroke="#94c800" d="M290 336h8"/><path stroke="#98c800" d="M298 336h8"/><path stroke="#9cc800" d="M306 336h8"/><path stroke="#a8c400" d="M314 336h8"/><path stroke="#acc000" d="M322 336h16"/><path stroke="#a8c000" d="M338 336h8"/><path stroke="#a8c400" d="M346 336h8"/><path stroke="#acc000" d="M354 336h16"/><path stroke="#acbc00" d="M370 336h8"/><path stroke="#acc000" d="M378 336h8"/><path stroke="#acbc00" d="M386 336h16"/><path stroke="#b4b000" d="M402 336h8"/><path stroke="#c09c00" d="M410 336h8"/><path stroke="#c89000" d="M418 336h16"/><path stroke="#c89400" d="M434 336h8"/><path stroke="#c09c00" d="M442 336h8"/><path stroke="#b8ac00" d="M450 336h8"/><path stroke="#b4b400" d="M458 336h8"/><path stroke="#b0b400" d="M466 336h8"/><path stroke="#b0b800" d="M474 336h16"/><path stroke="#b0b400" d="M490 336h8"/><path stroke="#b4b000" d="M498 336h8"/><path stroke="#b8ac00" d="M506 336h8"/><path stroke="#c09c00" d="M514 336h8"/><path stroke="#cc8c00" d="M522 336h8"/><path stroke="#d08400" d="M530 336h8"/><path stroke="#d08000" d="M538 336h8"/><path stroke="#d07c00" d="M546 336h16"/><path stroke="#d07800" d="M562 336h8"/><path stroke="#d47400" d="M570 336h16"/><path stroke="#d47000" d="M586 336h24"/><path stroke="#d07800" d="M610 336h8"/><path stroke="#d08000" d="M618 336h8"/><path stroke="#d08400" d="M626 336h16"/><path stroke="#d08000" d="M642 336h88"/><path stroke="#d07c00" d="M730 336h48"/><path stroke="#2cc0a8" d="M90 344h16"/><path stroke="#2cc0a4" d="M106 344h16"/><path stroke="#30c4a0" d="M122 344h8"/><path stroke="#30c49c" d="M130 344h8"/><path stroke="#30c494" d="M138 344h8"/><path stroke="#30c48c" d="M146 344h8"/><path stroke="#30c484" d="M154 344h8"/><path stroke="#30c478" d="M162 344h8"/><path stroke="#30c470" d="M170 344h8"/><path stroke="#30c464" d="M178 344h8"/><path stroke="#30c454" d="M186 344h8"/><path stroke="#30c448" d="M194 344h8"/><path stroke="#30c438" d="M202 344h8"/><path stroke="#34c424" d="M210 344h8"/><path stroke="#3cc420" d="M218 344h8"/><path stroke="#44c418" d="M226 344h8"/><path stroke="#50c814" d="M234 344h8"/><path stroke="#5cc810" d="M242 344h8"/><path stroke="#68c80c" d="M250 344h8"/><path stroke="#74cc04" d="M258 344h8"/><path stroke="#80c804" d="M266 344h8"/><path stroke="#88c804" d="M274 344h8"/><path stroke="#90c800" d="M282 344h8"/><path stroke="#98c800" d="M290 344h8"/><path stroke="#9cc800" d="M298 344h8"/><path stroke="#a4c800" d="M306 344h8"/><path stroke="#acc000" d="M314 344h32"/><path stroke="#a8c000" d="M346 344h8"/><path stroke="#acc000" d="M354 344h32"/><path stroke="#acbc00" d="M386 344h8"/><path stroke="#b0b800" d="M394 344h8"/><path stroke="#bca800" d="M402 344h8"/><path stroke="#c49800" d="M410 344h8"/><path stroke="#cc8c00" d="M418 344h8"/><path stroke="#cc8800" d="M426 344h8"/><path stroke="#cc8c00" d="M434 344h8"/><path stroke="#c49800" d="M442 344h8"/><path stroke="#b8ac00" d="M450 344h8"/><path stroke="#b4b400" d="M458 344h8"/><path stroke="#b0b800" d="M466 344h16"/><path stroke="#b4b400" d="M482 344h8"/><path stroke="#b4b000" d="M490 344h8"/><path stroke="#b8ac00" d="M498 344h8"/><path stroke="#c0a400" d="M506 344h8"/><path stroke="#c49800" d="M514 344h8"/><path stroke="#cc8c00" d="M522 344h8"/><path stroke="#d08000" d="M530 344h8"/><path stroke="#d47800" d="M538 344h8"/><path stroke="#d47400" d="M546 344h16"/><path stroke="#d07800" d="M562 344h8"/><path stroke="#d07c00" d="M570 344h16"/><path stroke="#d47800" d="M586 344h8"/><path stroke="#d47400" d="M594 344h8"/><path stroke="#d47800" d="M602 344h8"/><path stroke="#d07c00" d="M610 344h8"/><path stroke="#d08000" d="M618 344h8"/><path stroke="#d08400" d="M626 344h96"/><path stroke="#d08000" d="M722 344h56"/><path stroke="#2cc0a4" d="M90 352h16"/><path stroke="#2cc0a0" d="M106 352h8"/><path stroke="#30c4a0" d="M114 352h8"/><path stroke="#30c49c" d="M122 352h8"/><path stroke="#30c494" d="M130 352h8"/><path stroke="#30c48c" d="M138 352h8"/><path stroke="#30c484" d="M146 352h8"/><path stroke="#30c47c" d="M154 352h8"/><path stroke="#30c470" d="M162 352h8"/><path stroke="#30c464" d="M170 352h8"/><path stroke="#30c458" d="M178 352h8"/><path stroke="#30c44c" d="M186 352h8"/><path stroke="#30c43c" d="M194 352h8"/><path stroke="#34c42c" d="M202 352h8"/><path stroke="#34c420" d="M210 352h8"/><path stroke="#40c41c" d="M218 352h8"/><path stroke="#48c418" d="M226 352h8"/><path stroke="#54c814" d="M234 352h8"/><path stroke="#60c810" d="M242 352h8"/><path stroke="#68c808" d="M250 352h8"/><path stroke="#74cc04" d="M258 352h8"/><path stroke="#80c804" d="M266 352h8"/><path stroke="#88c804" d="M274 352h8"/><path stroke="#90c800" d="M282 352h8"/><path stroke="#98c800" d="M290 352h8"/><path stroke="#a0c800" d="M298 352h8"/><path stroke="#a8c400" d="M306 352h8"/><path stroke="#acc000" d="M314 352h32"/><path stroke="#a8c000" d="M346 352h16"/><path stroke="#acc000" d="M362 352h24"/><path stroke="#acbc00" d="M386 352h8"/><path stroke="#b4b400" d="M394 352h8"/><path stroke="#bca400" d="M402 352h8"/><path stroke="#c49800" d="M410 352h8"/><path stroke="#cc9000" d="M418 352h8"/><path stroke="#cc8c00" d="M426 352h8"/><path stroke="#c89000" d="M434 352h8"/><path stroke="#bca400" d="M442 352h8"/><path stroke="#acc000" d="M450 352h8"/><path stroke="#a8c400" d="M458 352h8"/><path stroke="#acc000" d="M466 352h8"/><path stroke="#b0b800" d="M474 352h8"/><path stroke="#b4b400" d="M482 352h8"/><path stroke="#b8ac00" d="M490 352h8"/><path stroke="#bca400" d="M498 352h8"/><path stroke="#c09c00" d="M506 352h8"/><path stroke="#c49800" d="M514 352h8"/><path stroke="#c89000" d="M522 352h8"/><path stroke="#d08000" d="M530 352h8"/><path stroke="#d47400" d="M538 352h8"/><path stroke="#d47000" d="M546 352h8"/><path stroke="#d47400" d="M554 352h8"/><path stroke="#d08000" d="M562 352h8"/><path stroke="#d08400" d="M570 352h96"/><path stroke="#d08800" d="M666 352h56"/><path stroke="#d08400" d="M722 352h56"/><path stroke="#2cc0a4" d="M90 360h8"/><path stroke="#30c4a0" d="M98 360h16"/><path stroke="#30c498" d="M114 360h8"/><path stroke="#30c490" d="M122 360h8"/><path stroke="#30c48c" d="M130 360h8"/><path stroke="#30c484" d="M138 360h8"/><path stroke="#30c47c" d="M146 360h8"/><path stroke="#30c470" d="M154 360h8"/><path stroke="#30c468" d="M162 360h8"/><path stroke="#30c45c" d="M170 360h8"/><path stroke="#30c450" d="M178 360h8"/><path stroke="#30c444" d="M186 360h8"/><path stroke="#30c434" d="M194 360h8"/><path stroke="#34c424" d="M202 360h8"/><path stroke="#38c420" d="M210 360h8"/><path stroke="#44c41c" d="M218 360h8"/><path stroke="#4cc418" d="M226 360h8"/><path stroke="#58c810" d="M234 360h8"/><path stroke="#60c80c" d="M242 360h8"/><path stroke="#6cc808" d="M250 360h8"/><path stroke="#74cc04" d="M258 360h8"/><path stroke="#80c804" d="M266 360h8"/><path stroke="#88c804" d="M274 360h8"/><path stroke="#90c800" d="M282 360h8"/><path stroke="#98c800" d="M290 360h8"/><path stroke="#a0c800" d="M298 360h8"/><path stroke="#a8c400" d="M306 360h16"/><path stroke="#acc000" d="M322 360h16"/><path stroke="#a8c000" d="M338 360h8"/><path stroke="#a8c400" d="M346 360h16"/><path stroke="#a8c000" d="M362 360h8"/><path stroke="#acc000" d="M370 360h16"/><path stroke="#b0bc00" d="M386 360h8"/><path stroke="#b4b400" d="M394 360h8"/><path stroke="#bca400" d="M402 360h8"/><path stroke="#c49c00" d="M410 360h8"/><path stroke="#c49800" d="M418 360h16"/><path stroke="#bca800" d="M434 360h8"/><path stroke="#a8c800" d="M442 360h8"/><path stroke="#98c800" d="M450 360h8"/><path stroke="#9cc800" d="M458 360h8"/><path stroke="#acc000" d="M466 360h8"/><path stroke="#b0b800" d="M474 360h8"/><path stroke="#b4b400" d="M482 360h8"/><path stroke="#bca800" d="M490 360h8"/><path stroke="#c0a000" d="M498 360h8"/><path stroke="#c49c00" d="M506 360h16"/><path stroke="#c49800" d="M522 360h8"/><path stroke="#cc8c00" d="M530 360h8"/><path stroke="#d07c00" d="M538 360h16"/><path stroke="#cc8800" d="M554 360h8"/><path stroke="#cc8c00" d="M562 360h56"/><path stroke="#cc8800" d="M618 360h16"/><path stroke="#d08800" d="M634 360h16"/><path stroke="#cc8800" d="M650 360h16"/><path stroke="#cc8c00" d="M666 360h56"/><path stroke="#cc8800" d="M722 360h32"/><path stroke="#d08800" d="M754 360h24"/><path stroke="#30c4a0" d="M90 368h8"/><path stroke="#30c49c" d="M98 368h8"/><path stroke="#30c494" d="M106 368h8"/><path stroke="#30c490" d="M114 368h8"/><path stroke="#30c488" d="M122 368h8"/><path stroke="#30c484" d="M130 368h8"/><path stroke="#30c47c" d="M138 368h8"/><path stroke="#30c470" d="M146 368h8"/><path stroke="#30c468" d="M154 368h8"/><path stroke="#30c460" d="M162 368h8"/><path stroke="#30c454" d="M170 368h8"/><path stroke="#30c448" d="M178 368h8"/><path stroke="#30c43c" d="M186 368h8"/><path stroke="#34c42c" d="M194 368h8"/><path stroke="#34c420" d="M202 368h8"/><path stroke="#3cc41c" d="M210 368h8"/><path stroke="#44c418" d="M218 368h8"/><path stroke="#50c814" d="M226 368h8"/><path stroke="#58c810" d="M234 368h8"/><path stroke="#60c80c" d="M242 368h8"/><path stroke="#6ccc08" d="M250 368h8"/><path stroke="#74cc04" d="M258 368h8"/><path stroke="#80c804" d="M266 368h8"/><path stroke="#88c804" d="M274 368h8"/><path stroke="#90c800" d="M282 368h8"/><path stroke="#98c800" d="M290 368h8"/><path stroke="#a0c800" d="M298 368h8"/><path stroke="#a4c800" d="M306 368h8"/><path stroke="#a8c400" d="M314 368h56"/><path stroke="#a8c000" d="M370 368h8"/><path stroke="#acc000" d="M378 368h8"/><path stroke="#b0bc00" d="M386 368h8"/><path stroke="#b4b400" d="M394 368h8"/><path stroke="#b8ac00" d="M402 368h8"/><path stroke="#bca400" d="M410 368h8"/><path stroke="#c0a400" d="M418 368h8"/><path stroke="#b8ac00" d="M426 368h8"/><path stroke="#acc000" d="M434 368h8"/><path stroke="#98c800" d="M442 368h8"/><path stroke="#94c800" d="M450 368h8"/><path stroke="#98c800" d="M458 368h8"/><path stroke="#acc000" d="M466 368h8"/><path stroke="#b0b400" d="M474 368h8"/><path stroke="#b4b400" d="M482 368h8"/><path stroke="#c0a400" d="M490 368h8"/><path stroke="#c49c00" d="M498 368h32"/><path stroke="#c89400" d="M530 368h8"/><path stroke="#cc8c00" d="M538 368h8"/><path stroke="#c89000" d="M546 368h8"/><path stroke="#c89400" d="M554 368h16"/><path stroke="#c89000" d="M570 368h8"/><path stroke="#cc8c00" d="M578 368h80"/><path stroke="#cc9000" d="M658 368h8"/><path stroke="#c89000" d="M666 368h48"/><path stroke="#cc9000" d="M714 368h8"/><path stroke="#cc8c00" d="M722 368h40"/><path stroke="#cc8800" d="M762 368h16"/><path stroke="#30c498" d="M90 376h8"/><path stroke="#30c494" d="M98 376h8"/><path stroke="#30c48c" d="M106 376h8"/><path stroke="#30c488" d="M114 376h8"/><path stroke="#30c480" d="M122 376h8"/><path stroke="#30c47c" d="M130 376h8"/><path stroke="#30c474" d="M138 376h8"/><path stroke="#30c468" d="M146 376h8"/><path stroke="#30c460" d="M154 376h8"/><path stroke="#30c458" d="M162 376h8"/><path stroke="#30c44c" d="M170 376h8"/><path stroke="#30c440" d="M178 376h8"/><path stroke="#30c434" d="M186 376h8"/><path stroke="#34c424" d="M194 376h8"/><path stroke="#38c420" d="M202 376h8"/><path stroke="#40c41c" d="M210 376h8"/><path stroke="#48c418" d="M218 376h8"/><path stroke="#50c814" d="M226 376h8"/><path stroke="#58c810" d="M234 376h8"/><path stroke="#64c80c" d="M242 376h8"/><path stroke="#6ccc08" d="M250 376h8"/><path stroke="#74cc04" d="M258 376h8"/><path stroke="#7cc804" d="M266 376h8"/><path stroke="#88c804" d="M274 376h8"/><path stroke="#90c800" d="M282 376h8"/><path stroke="#94c800" d="M290 376h8"/><path stroke="#9cc800" d="M298 376h8"/><path stroke="#a0c800" d="M306 376h8"/><path stroke="#a4c800" d="M314 376h8"/><path stroke="#a8c400" d="M322 376h56"/><path stroke="#acc000" d="M378 376h8"/><path stroke="#acbc00" d="M386 376h8"/><path stroke="#b0b800" d="M394 376h8"/><path stroke="#b4b000" d="M402 376h16"/><path stroke="#b4b400" d="M418 376h8"/><path stroke="#acbc00" d="M426 376h8"/><path stroke="#a4c800" d="M434 376h8"/><path stroke="#98c800" d="M442 376h8"/><path stroke="#94c800" d="M450 376h16"/><path stroke="#a4c800" d="M466 376h8"/><path stroke="#b0b800" d="M474 376h8"/><path stroke="#b8b000" d="M482 376h8"/><path stroke="#c49c00" d="M490 376h8"/><path stroke="#c49800" d="M498 376h16"/><path stroke="#c49c00" d="M514 376h8"/><path stroke="#c49800" d="M522 376h8"/><path stroke="#c89400" d="M530 376h8"/><path stroke="#c89000" d="M538 376h16"/><path stroke="#c89400" d="M554 376h16"/><path stroke="#c89000" d="M570 376h8"/><path stroke="#cc8c00" d="M578 376h56"/><path stroke="#c89000" d="M634 376h16"/><path stroke="#c89400" d="M650 376h16"/><path stroke="#c49400" d="M666 376h24"/><path stroke="#c89400" d="M690 376h32"/><path stroke="#c89000" d="M722 376h24"/><path stroke="#cc9000" d="M746 376h8"/><path stroke="#cc8c00" d="M754 376h24"/><path stroke="#30c490" d="M90 384h8"/><path stroke="#30c48c" d="M98 384h8"/><path stroke="#30c488" d="M106 384h8"/><path stroke="#30c480" d="M114 384h8"/><path stroke="#30c478" d="M122 384h8"/><path stroke="#30c474" d="M130 384h8"/><path stroke="#30c46c" d="M138 384h8"/><path stroke="#30c460" d="M146 384h8"/><path stroke="#30c458" d="M154 384h8"/><path stroke="#30c450" d="M162 384h8"/><path stroke="#30c444" d="M170 384h8"/><path stroke="#30c438" d="M178 384h8"/><path stroke="#34c42c" d="M186 384h8"/><path stroke="#34c420" d="M194 384h8"/><path stroke="#3cc420" d="M202 384h8"/><path stroke="#44c41c" d="M210 384h8"/><path stroke="#4cc418" d="M218 384h8"/><path stroke="#54c814" d="M226 384h8"/><path stroke="#5cc810" d="M234 384h8"/><path stroke="#64c80c" d="M242 384h8"/><path stroke="#6ccc08" d="M250 384h8"/><path stroke="#74cc04" d="M258 384h8"/><path stroke="#7cc804" d="M266 384h8"/><path stroke="#84c804" d="M274 384h8"/><path stroke="#8cc804" d="M282 384h8"/><path stroke="#94c800" d="M290 384h8"/><path stroke="#98c800" d="M298 384h8"/><path stroke="#9cc800" d="M306 384h8"/><path stroke="#a0c800" d="M314 384h8"/><path stroke="#a4c800" d="M322 384h32"/><path stroke="#a8c800" d="M354 384h8"/><path stroke="#a8c400" d="M362 384h16"/><path stroke="#acc000" d="M378 384h8"/><path stroke="#acbc00" d="M386 384h8"/><path stroke="#b0b800" d="M394 384h24"/><path stroke="#acbc00" d="M418 384h8"/><path stroke="#a8c400" d="M426 384h8"/><path stroke="#9cc800" d="M434 384h8"/><path stroke="#90c800" d="M442 384h8"/><path stroke="#88c804" d="M450 384h8"/><path stroke="#84c804" d="M458 384h8"/><path stroke="#8cc804" d="M466 384h8"/><path stroke="#a8c000" d="M474 384h8"/><path stroke="#b8ac00" d="M482 384h8"/><path stroke="#c49800" d="M490 384h40"/><path stroke="#c89000" d="M530 384h24"/><path stroke="#c89400" d="M554 384h8"/><path stroke="#c89000" d="M562 384h16"/><path stroke="#cc9000" d="M578 384h8"/><path stroke="#c89000" d="M586 384h24"/><path stroke="#cc9000" d="M610 384h8"/><path stroke="#cc8c00" d="M618 384h8"/><path stroke="#c89000" d="M626 384h16"/><path stroke="#c89400" d="M642 384h8"/><path stroke="#c49800" d="M650 384h8"/><path stroke="#c49c00" d="M658 384h8"/><path stroke="#c09c00" d="M666 384h8"/><path stroke="#c49c00" d="M674 384h24"/><path stroke="#c49800" d="M698 384h24"/><path stroke="#c89400" d="M722 384h24"/><path stroke="#c89000" d="M746 384h32"/><path stroke="#30c488" d="M90 392h8"/><path stroke="#30c484" d="M98 392h8"/><path stroke="#30c480" d="M106 392h8"/><path stroke="#30c478" d="M114 392h8"/><path stroke="#30c470" d="M122 392h8"/><path stroke="#30c46c" d="M130 392h8"/><path stroke="#30c464" d="M138 392h8"/><path stroke="#30c45c" d="M146 392h8"/><path stroke="#30c450" d="M154 392h8"/><path stroke="#30c448" d="M162 392h8"/><path stroke="#30c43c" d="M170 392h8"/><path stroke="#34c430" d="M178 392h8"/><path stroke="#34c424" d="M186 392h8"/><path stroke="#38c420" d="M194 392h8"/><path stroke="#40c41c" d="M202 392h8"/><path stroke="#44c418" d="M210 392h8"/><path stroke="#4cc418" d="M218 392h8"/><path stroke="#54c814" d="M226 392h8"/><path stroke="#5cc810" d="M234 392h8"/><path stroke="#64c80c" d="M242 392h8"/><path stroke="#6cc808" d="M250 392h8"/><path stroke="#74cc04" d="M258 392h8"/><path stroke="#7cc804" d="M266 392h8"/><path stroke="#80c804" d="M274 392h8"/><path stroke="#88c804" d="M282 392h8"/><path stroke="#90c800" d="M290 392h8"/><path stroke="#94c800" d="M298 392h8"/><path stroke="#98c800" d="M306 392h8"/><path stroke="#9cc800" d="M314 392h8"/><path stroke="#a0c800" d="M322 392h24"/><path stroke="#a4c800" d="M346 392h16"/><path stroke="#a8c800" d="M362 392h8"/><path stroke="#a8c400" d="M370 392h8"/><path stroke="#a8c000" d="M378 392h8"/><path stroke="#acc000" d="M386 392h8"/><path stroke="#acbc00" d="M394 392h24"/><path stroke="#acc000" d="M418 392h8"/><path stroke="#a4c800" d="M426 392h8"/><path stroke="#98c800" d="M434 392h8"/><path stroke="#90c800" d="M442 392h8"/><path stroke="#88c804" d="M450 392h8"/><path stroke="#84c804" d="M458 392h8"/><path stroke="#90c800" d="M466 392h8"/><path stroke="#acbc00" d="M474 392h8"/><path stroke="#b4b400" d="M482 392h8"/><path stroke="#c0a400" d="M490 392h8"/><path stroke="#c49c00" d="M498 392h24"/><path stroke="#c49800" d="M522 392h8"/><path stroke="#c89000" d="M530 392h24"/><path stroke="#c49800" d="M554 392h16"/><path stroke="#c89400" d="M570 392h8"/><path stroke="#c89000" d="M578 392h8"/><path stroke="#c89400" d="M586 392h8"/><path stroke="#c49800" d="M594 392h16"/><path stroke="#c89400" d="M610 392h8"/><path stroke="#c89000" d="M618 392h8"/><path stroke="#c89400" d="M626 392h8"/><path stroke="#c49800" d="M634 392h8"/><path stroke="#c0a000" d="M642 392h8"/><path stroke="#c0a400" d="M650 392h8"/><path stroke="#bca400" d="M658 392h16"/><path stroke="#c0a400" d="M674 392h8"/><path stroke="#c0a000" d="M682 392h24"/><path stroke="#c09c00" d="M706 392h8"/><path stroke="#c49c00" d="M714 392h8"/><path stroke="#c49800" d="M722 392h24"/><path stroke="#c89400" d="M746 392h24"/><path stroke="#c89000" d="M770 392h8"/><path stroke="#30c484" d="M90 400h8"/><path stroke="#30c47c" d="M98 400h8"/><path stroke="#30c478" d="M106 400h8"/><path stroke="#30c470" d="M114 400h8"/><path stroke="#30c46c" d="M122 400h8"/><path stroke="#30c464" d="M130 400h8"/><path stroke="#30c45c" d="M138 400h8"/><path stroke="#30c454" d="M146 400h8"/><path stroke="#30c448" d="M154 400h8"/><path stroke="#30c440" d="M162 400h8"/><path stroke="#30c434" d="M170 400h8"/><path stroke="#34c42c" d="M178 400h8"/><path stroke="#34c420" d="M186 400h8"/><path stroke="#3cc420" d="M194 400h8"/><path stroke="#40c41c" d="M202 400h8"/><path stroke="#48c418" d="M210 400h8"/><path stroke="#4cc814" d="M218 400h8"/><path stroke="#54c814" d="M226 400h8"/><path stroke="#5cc810" d="M234 400h8"/><path stroke="#64c80c" d="M242 400h8"/><path stroke="#68c808" d="M250 400h8"/><path stroke="#70cc08" d="M258 400h8"/><path stroke="#78c804" d="M266 400h8"/><path stroke="#80c804" d="M274 400h8"/><path stroke="#84c804" d="M282 400h8"/><path stroke="#8cc804" d="M290 400h8"/><path stroke="#90c800" d="M298 400h8"/><path stroke="#94c800" d="M306 400h8"/><path stroke="#98c800" d="M314 400h8"/><path stroke="#9cc800" d="M322 400h16"/><path stroke="#a0c800" d="M338 400h16"/><path stroke="#a4c800" d="M354 400h16"/><path stroke="#a8c400" d="M370 400h16"/><path stroke="#acc000" d="M386 400h32"/><path stroke="#a8c400" d="M418 400h8"/><path stroke="#a4c800" d="M426 400h8"/><path stroke="#9cc800" d="M434 400h8"/><path stroke="#94c800" d="M442 400h8"/><path stroke="#90c800" d="M450 400h16"/><path stroke="#a8c400" d="M466 400h8"/><path stroke="#b0b800" d="M474 400h8"/><path stroke="#b4b400" d="M482 400h8"/><path stroke="#b8b000" d="M490 400h8"/><path stroke="#bca400" d="M498 400h8"/><path stroke="#c0a000" d="M506 400h16"/><path stroke="#c09c00" d="M522 400h8"/><path stroke="#c89400" d="M530 400h16"/><path stroke="#c49c00" d="M546 400h8"/><path stroke="#c0a400" d="M554 400h16"/><path stroke="#c09c00" d="M570 400h8"/><path stroke="#c49c00" d="M578 400h8"/><path stroke="#c0a000" d="M586 400h8"/><path stroke="#bca400" d="M594 400h8"/><path stroke="#c0a400" d="M602 400h8"/><path stroke="#c0a000" d="M610 400h8"/><path stroke="#c49c00" d="M618 400h8"/><path stroke="#c0a000" d="M626 400h8"/><path stroke="#bca800" d="M634 400h8"/><path stroke="#b8ac00" d="M642 400h32"/><path stroke="#b8a800" d="M674 400h8"/><path stroke="#bca800" d="M682 400h8"/><path stroke="#bca400" d="M690 400h8"/><path stroke="#c0a400" d="M698 400h8"/><path stroke="#c0a000" d="M706 400h16"/><path stroke="#c09c00" d="M722 400h8"/><path stroke="#c49c00" d="M730 400h8"/><path stroke="#c49800" d="M738 400h24"/><path stroke="#c49400" d="M762 400h8"/><path stroke="#c89400" d="M770 400h8"/><path stroke="#30c47c" d="M90 408h8"/><path stroke="#30c474" d="M98 408h8"/><path stroke="#30c470" d="M106 408h8"/><path stroke="#30c468" d="M114 408h8"/><path stroke="#30c464" d="M122 408h8"/><path stroke="#30c45c" d="M130 408h8"/><path stroke="#30c454" d="M138 408h8"/><path stroke="#30c44c" d="M146 408h8"/><path stroke="#30c444" d="M154 408h8"/><path stroke="#30c438" d="M162 408h8"/><path stroke="#34c430" d="M170 408h8"/><path stroke="#34c424" d="M178 408h8"/><path stroke="#38c420" d="M186 408h8"/><path stroke="#3cc41c" d="M194 408h8"/><path stroke="#44c41c" d="M202 408h8"/><path stroke="#48c418" d="M210 408h8"/><path stroke="#50c814" d="M218 408h8"/><path stroke="#54c814" d="M226 408h8"/><path stroke="#5cc810" d="M234 408h8"/><path stroke="#64c80c" d="M242 408h8"/><path stroke="#68c808" d="M250 408h8"/><path stroke="#70cc08" d="M258 408h8"/><path stroke="#78c804" d="M266 408h8"/><path stroke="#7cc804" d="M274 408h8"/><path stroke="#84c804" d="M282 408h8"/><path stroke="#88c804" d="M290 408h8"/><path stroke="#8cc804" d="M298 408h8"/><path stroke="#90c800" d="M306 408h8"/><path stroke="#94c800" d="M314 408h8"/><path stroke="#98c800" d="M322 408h16"/><path stroke="#9cc800" d="M338 408h8"/><path stroke="#a0c800" d="M346 408h16"/><path stroke="#a4c800" d="M362 408h8"/><path stroke="#a8c800" d="M370 408h8"/><path stroke="#a8c400" d="M378 408h16"/><path stroke="#acc000" d="M394 408h16"/><path stroke="#a8c000" d="M410 408h8"/><path stroke="#a8c400" d="M418 408h8"/><path stroke="#a4c800" d="M426 408h8"/><path stroke="#a0c800" d="M434 408h8"/><path stroke="#9cc800" d="M442 408h16"/><path stroke="#a4c800" d="M458 408h8"/><path stroke="#acbc00" d="M466 408h8"/><path stroke="#b0b800" d="M474 408h8"/><path stroke="#b4b400" d="M482 408h8"/><path stroke="#b4b000" d="M490 408h8"/><path stroke="#b8ac00" d="M498 408h8"/><path stroke="#bca400" d="M506 408h8"/><path stroke="#c0a400" d="M514 408h16"/><path stroke="#c0a000" d="M530 408h16"/><path stroke="#bca400" d="M546 408h8"/><path stroke="#bca800" d="M554 408h16"/><path stroke="#bca400" d="M570 408h16"/><path stroke="#bca800" d="M586 408h40"/><path stroke="#b4b000" d="M626 408h8"/><path stroke="#b4b400" d="M634 408h32"/><path stroke="#b4b000" d="M666 408h8"/><path stroke="#b8b000" d="M674 408h8"/><path stroke="#b8ac00" d="M682 408h16"/><path stroke="#bca800" d="M698 408h8"/><path stroke="#bca400" d="M706 408h8"/><path stroke="#c0a400" d="M714 408h8"/><path stroke="#c0a000" d="M722 408h16"/><path stroke="#c09c00" d="M738 408h8"/><path stroke="#c49c00" d="M746 408h8"/><path stroke="#c49800" d="M754 408h24"/><path stroke="#30c474" d="M90 416h8"/><path stroke="#30c470" d="M98 416h8"/><path stroke="#30c468" d="M106 416h8"/><path stroke="#30c464" d="M114 416h8"/><path stroke="#30c45c" d="M122 416h8"/><path stroke="#30c454" d="M130 416h8"/><path stroke="#30c44c" d="M138 416h8"/><path stroke="#30c444" d="M146 416h8"/><path stroke="#30c43c" d="M154 416h8"/><path stroke="#30c434" d="M162 416h8"/><path stroke="#34c428" d="M170 416h8"/><path stroke="#34c420" d="M178 416h8"/><path stroke="#38c420" d="M186 416h8"/><path stroke="#40c41c" d="M194 416h8"/><path stroke="#44c41c" d="M202 416h8"/><path stroke="#4cc418" d="M210 416h8"/><path stroke="#50c814" d="M218 416h8"/><path stroke="#58c810" d="M226 416h8"/><path stroke="#5cc810" d="M234 416h8"/><path stroke="#64c80c" d="M242 416h8"/><path stroke="#68c808" d="M250 416h8"/><path stroke="#70cc08" d="M258 416h8"/><path stroke="#74cc04" d="M266 416h8"/><path stroke="#7cc804" d="M274 416h8"/><path stroke="#80c804" d="M282 416h8"/><path stroke="#84c804" d="M290 416h8"/><path stroke="#88c804" d="M298 416h8"/><path stroke="#8cc804" d="M306 416h8"/><path stroke="#90c800" d="M314 416h8"/><path stroke="#94c800" d="M322 416h8"/><path stroke="#98c800" d="M330 416h8"/><path stroke="#9cc800" d="M338 416h16"/><path stroke="#a0c800" d="M354 416h8"/><path stroke="#a4c800" d="M362 416h16"/><path stroke="#a8c400" d="M378 416h16"/><path stroke="#a8c000" d="M394 416h16"/><path stroke="#a8c400" d="M410 416h24"/><path stroke="#a4c800" d="M434 416h16"/><path stroke="#a8c400" d="M450 416h8"/><path stroke="#acc000" d="M458 416h8"/><path stroke="#b0bc00" d="M466 416h8"/><path stroke="#b0b800" d="M474 416h8"/><path stroke="#b4b400" d="M482 416h16"/><path stroke="#b4b000" d="M498 416h8"/><path stroke="#b8a800" d="M506 416h8"/><path stroke="#bca400" d="M514 416h16"/><path stroke="#bca800" d="M530 416h8"/><path stroke="#b8ac00" d="M538 416h8"/><path stroke="#b8a800" d="M546 416h8"/><path stroke="#bca800" d="M554 416h16"/><path stroke="#b8a800" d="M570 416h8"/><path stroke="#b8ac00" d="M578 416h8"/><path stroke="#bca800" d="M586 416h24"/><path stroke="#b8ac00" d="M610 416h8"/><path stroke="#b4b000" d="M618 416h8"/><path stroke="#b4b400" d="M626 416h56"/><path stroke="#b4b000" d="M682 416h8"/><path stroke="#b8b000" d="M690 416h8"/><path stroke="#b8ac00" d="M698 416h8"/><path stroke="#b8a800" d="M706 416h8"/><path stroke="#bca800" d="M714 416h8"/><path stroke="#bca400" d="M722 416h8"/><path stroke="#c0a000" d="M730 416h16"/><path stroke="#c09c00" d="M746 416h8"/><path stroke="#c49c00" d="M754 416h16"/><path stroke="#c49800" d="M770 416h8"/><path stroke="#30c46c" d="M90 424h8"/><path stroke="#30c468" d="M98 424h8"/><path stroke="#30c464" d="M106 424h8"/><path stroke="#30c45c" d="M114 424h8"/><path stroke="#30c454" d="M122 424h8"/><path stroke="#30c450" d="M130 424h8"/><path stroke="#30c448" d="M138 424h8"/><path stroke="#30c440" d="M146 424h8"/><path stroke="#30c438" d="M154 424h8"/><path stroke="#34c42c" d="M162 424h8"/><path stroke="#34c424" d="M170 424h8"/><path stroke="#38c420" d="M178 424h8"/><path stroke="#3cc420" d="M186 424h8"/><path stroke="#40c41c" d="M194 424h8"/><path stroke="#44c418" d="M202 424h8"/><path stroke="#4cc418" d="M210 424h8"/><path stroke="#50c814" d="M218 424h8"/><path stroke="#58c810" d="M226 424h8"/><path stroke="#5cc810" d="M234 424h8"/><path stroke="#64c80c" d="M242 424h8"/><path stroke="#68c808" d="M250 424h8"/><path stroke="#6ccc08" d="M258 424h8"/><path stroke="#74cc04" d="M266 424h8"/><path stroke="#78c804" d="M274 424h8"/><path stroke="#80c804" d="M282 424h8"/><path stroke="#84c804" d="M290 424h8"/><path stroke="#88c804" d="M298 424h8"/><path stroke="#8cc804" d="M306 424h8"/><path stroke="#90c800" d="M314 424h8"/><path stroke="#94c800" d="M322 424h16"/><path stroke="#98c800" d="M338 424h8"/><path stroke="#9cc800" d="M346 424h8"/><path stroke="#a0c800" d="M354 424h16"/><path stroke="#a4c800" d="M370 424h8"/><path stroke="#a8c400" d="M378 424h24"/><path stroke="#a8c000" d="M402 424h16"/><path stroke="#a8c400" d="M418 424h32"/><path stroke="#acc000" d="M450 424h8"/><path stroke="#acbc00" d="M458 424h8"/><path stroke="#b0b800" d="M466 424h8"/><path stroke="#b0b400" d="M474 424h8"/><path stroke="#b4b400" d="M482 424h24"/><path stroke="#b4b000" d="M506 424h8"/><path stroke="#b8ac00" d="M514 424h16"/><path stroke="#b0b800" d="M530 424h24"/><path stroke="#b4b400" d="M554 424h8"/><path stroke="#b4b000" d="M562 424h8"/><path stroke="#b4b400" d="M570 424h8"/><path stroke="#b0b400" d="M578 424h8"/><path stroke="#b4b400" d="M586 424h24"/><path stroke="#b0b400" d="M610 424h8"/><path stroke="#b0b800" d="M618 424h16"/><path stroke="#b0b400" d="M634 424h16"/><path stroke="#b0b800" d="M650 424h24"/><path stroke="#b0b400" d="M674 424h8"/><path stroke="#b4b400" d="M682 424h16"/><path stroke="#b4b000" d="M698 424h8"/><path stroke="#b8ac00" d="M706 424h16"/><path stroke="#bca800" d="M722 424h8"/><path stroke="#bca400" d="M730 424h8"/><path stroke="#c0a400" d="M738 424h8"/><path stroke="#c0a000" d="M746 424h16"/><path stroke="#c09c00" d="M762 424h8"/><path stroke="#c49c00" d="M770 424h8"/><path stroke="#30c468" d="M90 432h8"/><path stroke="#30c460" d="M98 432h8"/><path stroke="#30c45c" d="M106 432h8"/><path stroke="#30c454" d="M114 432h8"/><path stroke="#30c450" d="M122 432h8"/><path stroke="#30c448" d="M130 432h8"/><path stroke="#30c440" d="M138 432h8"/><path stroke="#30c438" d="M146 432h8"/><path stroke="#34c430" d="M154 432h8"/><path stroke="#34c428" d="M162 432h8"/><path stroke="#34c420" d="M170 432h8"/><path stroke="#38c420" d="M178 432h8"/><path stroke="#3cc41c" d="M186 432h8"/><path stroke="#44c41c" d="M194 432h8"/><path stroke="#48c418" d="M202 432h8"/><path stroke="#4cc818" d="M210 432h8"/><path stroke="#54c814" d="M218 432h8"/><path stroke="#58c810" d="M226 432h8"/><path stroke="#5cc810" d="M234 432h8"/><path stroke="#64c80c" d="M242 432h8"/><path stroke="#68c808" d="M250 432h8"/><path stroke="#6ccc08" d="M258 432h8"/><path stroke="#70cc08" d="M266 432h8"/><path stroke="#78c804" d="M274 432h8"/><path stroke="#7cc804" d="M282 432h8"/><path stroke="#80c804" d="M290 432h8"/><path stroke="#84c804" d="M298 432h8"/><path stroke="#88c804" d="M306 432h8"/><path stroke="#8cc804" d="M314 432h8"/><path stroke="#90c800" d="M322 432h8"/><path stroke="#94c800" d="M330 432h8"/><path stroke="#98c800" d="M338 432h8"/><path stroke="#9cc800" d="M346 432h16"/><path stroke="#a0c800" d="M362 432h8"/><path stroke="#a4c800" d="M370 432h8"/><path stroke="#a8c400" d="M378 432h24"/><path stroke="#a8c000" d="M402 432h8"/><path stroke="#acc000" d="M410 432h40"/><path stroke="#acbc00" d="M450 432h8"/><path stroke="#b0bc00" d="M458 432h8"/><path stroke="#b0b800" d="M466 432h8"/><path stroke="#b4b400" d="M474 432h40"/><path stroke="#b4b000" d="M514 432h8"/><path stroke="#b0b800" d="M522 432h8"/><path stroke="#acbc00" d="M530 432h16"/><path stroke="#acc000" d="M546 432h8"/><path stroke="#a4c800" d="M554 432h16"/><path stroke="#a8c400" d="M570 432h40"/><path stroke="#acc000" d="M610 432h8"/><path stroke="#acbc00" d="M618 432h8"/><path stroke="#b0bc00" d="M626 432h32"/><path stroke="#b0b800" d="M658 432h32"/><path stroke="#b4b400" d="M690 432h16"/><path stroke="#b4b000" d="M706 432h8"/><path stroke="#b8ac00" d="M714 432h16"/><path stroke="#bca800" d="M730 432h8"/><path stroke="#bca400" d="M738 432h8"/><path stroke="#c0a400" d="M746 432h8"/><path stroke="#c0a000" d="M754 432h24"/><path stroke="#30c460" d="M90 440h8"/><path stroke="#30c45c" d="M98 440h8"/><path stroke="#30c454" d="M106 440h8"/><path stroke="#30c450" d="M114 440h8"/><path stroke="#30c448" d="M122 440h8"/><path stroke="#30c444" d="M130 440h8"/><path stroke="#30c43c" d="M138 440h8"/><path stroke="#30c434" d="M146 440h8"/><path stroke="#34c42c" d="M154 440h8"/><path stroke="#34c424" d="M162 440h8"/><path stroke="#38c420" d="M170 440h8"/><path stroke="#3cc420" d="M178 440h8"/><path stroke="#40c41c" d="M186 440h8"/><path stroke="#44c41c" d="M194 440h8"/><path stroke="#48c418" d="M202 440h8"/><path stroke="#50c814" d="M210 440h8"/><path stroke="#54c814" d="M218 440h8"/><path stroke="#58c810" d="M226 440h8"/><path stroke="#5cc810" d="M234 440h8"/><path stroke="#64c80c" d="M242 440h8"/><path stroke="#68c808" d="M250 440h8"/><path stroke="#6ccc08" d="M258 440h8"/><path stroke="#70cc08" d="M266 440h8"/><path stroke="#74c804" d="M274 440h8"/><path stroke="#7cc804" d="M282 440h8"/><path stroke="#80c804" d="M290 440h8"/><path stroke="#84c804" d="M298 440h8"/><path stroke="#88c804" d="M306 440h8"/><path stroke="#8cc804" d="M314 440h8"/><path stroke="#90c800" d="M322 440h8"/><path stroke="#94c800" d="M330 440h16"/><path stroke="#98c800" d="M346 440h8"/><path stroke="#9cc800" d="M354 440h8"/><path stroke="#a0c800" d="M362 440h8"/><path stroke="#a4c800" d="M370 440h8"/><path stroke="#a8c800" d="M378 440h8"/><path stroke="#a8c400" d="M386 440h16"/><path stroke="#a8c000" d="M402 440h8"/><path stroke="#acc000" d="M410 440h32"/><path stroke="#acbc00" d="M442 440h8"/><path stroke="#b0bc00" d="M450 440h8"/><path stroke="#b0b800" d="M458 440h16"/><path stroke="#b4b400" d="M474 440h40"/><path stroke="#b0b400" d="M514 440h8"/><path stroke="#b0bc00" d="M522 440h8"/><path stroke="#acbc00" d="M530 440h8"/><path stroke="#acc000" d="M538 440h8"/><path stroke="#a4c800" d="M546 440h8"/><path stroke="#94c800" d="M554 440h16"/><path stroke="#98c800" d="M570 440h8"/><path stroke="#a0c800" d="M578 440h8"/><path stroke="#a4c800" d="M586 440h8"/><path stroke="#a8c800" d="M594 440h24"/><path stroke="#a8c400" d="M618 440h8"/><path stroke="#acc000" d="M626 440h8"/><path stroke="#acbc00" d="M634 440h40"/><path stroke="#b0bc00" d="M674 440h8"/><path stroke="#b0b800" d="M682 440h16"/><path stroke="#b0b400" d="M698 440h8"/><path stroke="#b4b400" d="M706 440h8"/><path stroke="#b4b000" d="M714 440h8"/><path stroke="#b8ac00" d="M722 440h16"/><path stroke="#bca800" d="M738 440h8"/><path stroke="#bca400" d="M746 440h16"/><path stroke="#c0a000" d="M762 440h16"/><path stroke="#30c45c" d="M90 448h8"/><path stroke="#30c454" d="M98 448h8"/><path stroke="#30c450" d="M106 448h8"/><path stroke="#30c448" d="M114 448h8"/><path stroke="#30c444" d="M122 448h8"/><path stroke="#30c43c" d="M130 448h8"/><path stroke="#30c434" d="M138 448h8"/><path stroke="#34c430" d="M146 448h8"/><path stroke="#34c428" d="M154 448h8"/><path stroke="#34c420" d="M162 448h8"/><path stroke="#38c420" d="M170 448h8"/><path stroke="#3cc41c" d="M178 448h8"/><path stroke="#40c41c" d="M186 448h8"/><path stroke="#44c418" d="M194 448h8"/><path stroke="#4cc418" d="M202 448h8"/><path stroke="#50c814" d="M210 448h8"/><path stroke="#54c814" d="M218 448h8"/><path stroke="#58c810" d="M226 448h8"/><path stroke="#5cc810" d="M234 448h8"/><path stroke="#64c80c" d="M242 448h8"/><path stroke="#68c80c" d="M250 448h8"/><path stroke="#6ccc08" d="M258 448h8"/><path stroke="#70cc08" d="M266 448h8"/><path stroke="#74cc04" d="M274 448h8"/><path stroke="#78c804" d="M282 448h8"/><path stroke="#80c804" d="M290 448h8"/><path stroke="#84c804" d="M298 448h8"/><path stroke="#88c804" d="M306 448h8"/><path stroke="#8cc804" d="M314 448h8"/><path stroke="#90c800" d="M322 448h16"/><path stroke="#94c800" d="M338 448h8"/><path stroke="#98c800" d="M346 448h8"/><path stroke="#9cc800" d="M354 448h8"/><path stroke="#a0c800" d="M362 448h8"/><path stroke="#a4c800" d="M370 448h8"/><path stroke="#a8c800" d="M378 448h8"/><path stroke="#a8c400" d="M386 448h16"/><path stroke="#a8c000" d="M402 448h8"/><path stroke="#acc000" d="M410 448h16"/><path stroke="#acbc00" d="M426 448h16"/><path stroke="#b0bc00" d="M442 448h8"/><path stroke="#b0b800" d="M450 448h16"/><path stroke="#b0b400" d="M466 448h8"/><path stroke="#b4b400" d="M474 448h40"/><path stroke="#b0b800" d="M514 448h8"/><path stroke="#acbc00" d="M522 448h8"/><path stroke="#acc000" d="M530 448h8"/><path stroke="#a8c400" d="M538 448h8"/><path stroke="#9cc800" d="M546 448h8"/><path stroke="#94c800" d="M554 448h8"/><path stroke="#90c800" d="M562 448h24"/><path stroke="#98c800" d="M586 448h8"/><path stroke="#a0c800" d="M594 448h16"/><path stroke="#9cc800" d="M610 448h8"/><path stroke="#a0c800" d="M618 448h8"/><path stroke="#a8c400" d="M626 448h8"/><path stroke="#acc000" d="M634 448h40"/><path stroke="#acbc00" d="M674 448h16"/><path stroke="#b0b800" d="M690 448h16"/><path stroke="#b4b400" d="M706 448h16"/><path stroke="#b4b000" d="M722 448h8"/><path stroke="#b8ac00" d="M730 448h16"/><path stroke="#bca800" d="M746 448h8"/><path stroke="#bca400" d="M754 448h16"/><path stroke="#c0a000" d="M770 448h8"/><path stroke="#30c454" d="M90 456h8"/><path stroke="#30c450" d="M98 456h8"/><path stroke="#30c44c" d="M106 456h8"/><path stroke="#30c444" d="M114 456h8"/><path stroke="#30c440" d="M122 456h8"/><path stroke="#30c438" d="M130 456h8"/><path stroke="#34c430" d="M138 456h8"/><path stroke="#34c428" d="M146 456h8"/><path stroke="#34c424" d="M154 456h8"/><path stroke="#38c420" d="M162 456h8"/><path stroke="#3cc420" d="M170 456h8"/><path stroke="#40c41c" d="M178 456h8"/><path stroke="#44c41c" d="M186 456h8"/><path stroke="#48c418" d="M194 456h8"/><path stroke="#4cc418" d="M202 456h8"/><path stroke="#50c814" d="M210 456h8"/><path stroke="#54c814" d="M218 456h8"/><path stroke="#58c810" d="M226 456h8"/><path stroke="#5cc810" d="M234 456h8"/><path stroke="#64c80c" d="M242 456h8"/><path stroke="#68c80c" d="M250 456h8"/><path stroke="#6ccc08" d="M258 456h8"/><path stroke="#70cc08" d="M266 456h8"/><path stroke="#74cc04" d="M274 456h8"/><path stroke="#78c804" d="M282 456h8"/><path stroke="#7cc804" d="M290 456h8"/><path stroke="#80c804" d="M298 456h8"/><path stroke="#84c804" d="M306 456h8"/><path stroke="#88c804" d="M314 456h8"/><path stroke="#8cc804" d="M322 456h8"/><path stroke="#90c800" d="M330 456h8"/><path stroke="#94c800" d="M338 456h8"/><path stroke="#98c800" d="M346 456h8"/><path stroke="#9cc800" d="M354 456h8"/><path stroke="#a0c800" d="M362 456h8"/><path stroke="#a4c800" d="M370 456h8"/><path stroke="#a8c800" d="M378 456h8"/><path stroke="#a8c400" d="M386 456h16"/><path stroke="#acc000" d="M402 456h24"/><path stroke="#acbc00" d="M426 456h16"/><path stroke="#b0bc00" d="M442 456h8"/><path stroke="#b0b800" d="M450 456h24"/><path stroke="#b4b400" d="M474 456h32"/><path stroke="#b0b800" d="M506 456h8"/><path stroke="#b0bc00" d="M514 456h8"/><path stroke="#acc000" d="M522 456h8"/><path stroke="#a8c400" d="M530 456h8"/><path stroke="#a4c800" d="M538 456h8"/><path stroke="#98c800" d="M546 456h8"/><path stroke="#90c800" d="M554 456h8"/><path stroke="#8cc804" d="M562 456h8"/><path stroke="#78c804" d="M570 456h8"/><path stroke="#74cc04" d="M578 456h8"/><path stroke="#80c804" d="M586 456h8"/><path stroke="#84c804" d="M594 456h8"/><path stroke="#88c804" d="M602 456h8"/><path stroke="#90c800" d="M610 456h8"/><path stroke="#94c800" d="M618 456h8"/><path stroke="#98c800" d="M626 456h8"/><path stroke="#9cc800" d="M634 456h8"/><path stroke="#a4c800" d="M642 456h8"/><path stroke="#a8c400" d="M650 456h16"/><path stroke="#acc000" d="M666 456h16"/><path stroke="#acbc00" d="M682 456h16"/><path stroke="#b0b800" d="M698 456h16"/><path stroke="#b4b400" d="M714 456h8"/><path stroke="#b4b000" d="M722 456h16"/><path stroke="#b8ac00" d="M738 456h16"/><path stroke="#bca800" d="M754 456h8"/><path stroke="#bca400" d="M762 456h16"/><path stroke="#30c450" d="M90 464h8"/><path stroke="#30c44c" d="M98 464h8"/><path stroke="#30c444" d="M106 464h8"/><path stroke="#30c440" d="M114 464h8"/><path stroke="#30c438" d="M122 464h8"/><path stroke="#30c434" d="M130 464h8"/><path stroke="#34c42c" d="M138 464h8"/><path stroke="#34c424" d="M146 464h8"/><path stroke="#34c420" d="M154 464h8"/><path stroke="#38c420" d="M162 464h8"/><path stroke="#3cc41c" d="M170 464h8"/><path stroke="#40c41c" d="M178 464h8"/><path stroke="#44c41c" d="M186 464h8"/><path stroke="#48c418" d="M194 464h8"/><path stroke="#4cc818" d="M202 464h8"/><path stroke="#50c814" d="M210 464h8"/><path stroke="#54c814" d="M218 464h8"/><path stroke="#5cc810" d="M226 464h8"/><path stroke="#60c80c" d="M234 464h8"/><path stroke="#64c80c" d="M242 464h8"/><path stroke="#68c808" d="M250 464h8"/><path stroke="#6ccc08" d="M258 464h8"/><path stroke="#70cc08" d="M266 464h8"/><path stroke="#74cc04" d="M274 464h8"/><path stroke="#78c804" d="M282 464h8"/><path stroke="#7cc804" d="M290 464h8"/><path stroke="#80c804" d="M298 464h8"/><path stroke="#84c804" d="M306 464h8"/><path stroke="#88c804" d="M314 464h8"/><path stroke="#8cc804" d="M322 464h8"/><path stroke="#90c800" d="M330 464h8"/><path stroke="#94c800" d="M338 464h8"/><path stroke="#98c800" d="M346 464h8"/><path stroke="#9cc800" d="M354 464h8"/><path stroke="#a0c800" d="M362 464h8"/><path stroke="#a4c800" d="M370 464h16"/><path stroke="#a8c400" d="M386 464h16"/><path stroke="#acc000" d="M402 464h24"/><path stroke="#acbc00" d="M426 464h16"/><path stroke="#b0b800" d="M442 464h32"/><path stroke="#b0b400" d="M474 464h24"/><path stroke="#b0b800" d="M498 464h16"/><path stroke="#acbc00" d="M514 464h8"/><path stroke="#acc000" d="M522 464h8"/><path stroke="#a8c400" d="M530 464h8"/><path stroke="#a0c800" d="M538 464h8"/><path stroke="#94c800" d="M546 464h8"/><path stroke="#88c804" d="M554 464h8"/><path stroke="#74cc04" d="M562 464h8"/><path stroke="#68c808" d="M570 464h8"/><path stroke="#68c80c" d="M578 464h8"/><path stroke="#74cc04" d="M586 464h8"/><path stroke="#7cc804" d="M594 464h8"/><path stroke="#80c804" d="M602 464h8"/><path stroke="#88c804" d="M610 464h8"/><path stroke="#90c800" d="M618 464h8"/><path stroke="#94c800" d="M626 464h16"/><path stroke="#98c800" d="M642 464h8"/><path stroke="#a0c800" d="M650 464h8"/><path stroke="#a4c800" d="M658 464h8"/><path stroke="#a8c400" d="M666 464h16"/><path stroke="#acc000" d="M682 464h8"/><path stroke="#acbc00" d="M690 464h16"/><path stroke="#b0b800" d="M706 464h16"/><path stroke="#b4b400" d="M722 464h8"/><path stroke="#b4b000" d="M730 464h8"/><path stroke="#b8b000" d="M738 464h8"/><path stroke="#b8ac00" d="M746 464h8"/><path stroke="#b8a800" d="M754 464h8"/><path stroke="#bca800" d="M762 464h8"/><path stroke="#bca400" d="M770 464h8"/><path stroke="#30c448" d="M90 472h8"/><path stroke="#30c444" d="M98 472h8"/><path stroke="#30c440" d="M106 472h8"/><path stroke="#30c438" d="M114 472h8"/><path stroke="#30c434" d="M122 472h8"/><path stroke="#34c42c" d="M130 472h8"/><path stroke="#34c428" d="M138 472h8"/><path stroke="#34c420" d="M146 472h8"/><path stroke="#38c420" d="M154 472h8"/><path stroke="#3cc420" d="M162 472h8"/><path stroke="#40c41c" d="M170 472h8"/><path stroke="#44c41c" d="M178 472h8"/><path stroke="#48c418" d="M186 472h8"/><path stroke="#4cc418" d="M194 472h8"/><path stroke="#50c814" d="M202 472h8"/><path stroke="#54c814" d="M210 472h8"/><path stroke="#58c810" d="M218 472h8"/><path stroke="#5cc810" d="M226 472h8"/><path stroke="#60c80c" d="M234 472h8"/><path stroke="#64c80c" d="M242 472h8"/><path stroke="#68c808" d="M250 472h8"/><path stroke="#6ccc08" d="M258 472h8"/><path stroke="#70cc08" d="M266 472h8"/><path stroke="#74cc04" d="M274 472h8"/><path stroke="#78c804" d="M282 472h8"/><path stroke="#7cc804" d="M290 472h8"/><path stroke="#80c804" d="M298 472h8"/><path stroke="#84c804" d="M306 472h8"/><path stroke="#88c804" d="M314 472h8"/><path stroke="#8cc804" d="M322 472h8"/><path stroke="#90c800" d="M330 472h8"/><path stroke="#94c800" d="M338 472h8"/><path stroke="#98c800" d="M346 472h8"/><path stroke="#9cc800" d="M354 472h8"/><path stroke="#a0c800" d="M362 472h8"/><path stroke="#a4c800" d="M370 472h16"/><path stroke="#a8c400" d="M386 472h16"/><path stroke="#acc000" d="M402 472h24"/><path stroke="#acbc00" d="M426 472h8"/><path stroke="#b0bc00" d="M434 472h8"/><path stroke="#b0b800" d="M442 472h64"/><path stroke="#b0bc00" d="M506 472h8"/><path stroke="#acc000" d="M514 472h8"/><path stroke="#a8c400" d="M522 472h8"/><path stroke="#a4c800" d="M530 472h8"/><path stroke="#98c800" d="M538 472h8"/><path stroke="#8cc804" d="M546 472h8"/><path stroke="#78c804" d="M554 472h8"/><path stroke="#6cc808" d="M562 472h8"/><path stroke="#64c80c" d="M570 472h16"/><path stroke="#6ccc08" d="M586 472h8"/><path stroke="#7cc804" d="M594 472h16"/><path stroke="#88c804" d="M610 472h8"/><path stroke="#90c800" d="M618 472h16"/><path stroke="#94c800" d="M634 472h16"/><path stroke="#9cc800" d="M650 472h8"/><path stroke="#a0c800" d="M658 472h8"/><path stroke="#a4c800" d="M666 472h8"/><path stroke="#a8c400" d="M674 472h8"/><path stroke="#a8c000" d="M682 472h8"/><path stroke="#acc000" d="M690 472h8"/><path stroke="#acbc00" d="M698 472h8"/><path stroke="#b0bc00" d="M706 472h8"/><path stroke="#b0b800" d="M714 472h8"/><path stroke="#b4b400" d="M722 472h16"/><path stroke="#b4b000" d="M738 472h8"/><path stroke="#b8ac00" d="M746 472h16"/><path stroke="#b8a800" d="M762 472h8"/><path stroke="#bca800" d="M770 472h8"/><path stroke="#30c444" d="M90 480h8"/><path stroke="#30c440" d="M98 480h8"/><path stroke="#30c43c" d="M106 480h8"/><path stroke="#30c434" d="M114 480h8"/><path stroke="#34c430" d="M122 480h8"/><path stroke="#34c428" d="M130 480h8"/><path stroke="#34c424" d="M138 480h8"/><path stroke="#34c420" d="M146 480h8"/><path stroke="#38c420" d="M154 480h8"/><path stroke="#3cc41c" d="M162 480h8"/><path stroke="#40c41c" d="M170 480h8"/><path stroke="#44c41c" d="M178 480h8"/><path stroke="#48c418" d="M186 480h8"/><path stroke="#4cc418" d="M194 480h8"/><path stroke="#50c814" d="M202 480h8"/><path stroke="#54c814" d="M210 480h8"/><path stroke="#58c810" d="M218 480h8"/><path stroke="#5cc810" d="M226 480h8"/><path stroke="#60c80c" d="M234 480h8"/><path stroke="#64c80c" d="M242 480h8"/><path stroke="#68c808" d="M250 480h8"/><path stroke="#6ccc08" d="M258 480h8"/><path stroke="#70cc08" d="M266 480h8"/><path stroke="#74cc04" d="M274 480h8"/><path stroke="#78c804" d="M282 480h8"/><path stroke="#7cc804" d="M290 480h8"/><path stroke="#80c804" d="M298 480h8"/><path stroke="#84c804" d="M306 480h8"/><path stroke="#88c804" d="M314 480h8"/><path stroke="#8cc804" d="M322 480h8"/><path stroke="#90c800" d="M330 480h8"/><path stroke="#94c800" d="M338 480h8"/><path stroke="#98c800" d="M346 480h8"/><path stroke="#9cc800" d="M354 480h8"/><path stroke="#a0c800" d="M362 480h8"/><path stroke="#a4c800" d="M370 480h16"/><path stroke="#a8c400" d="M386 480h16"/><path stroke="#a8c000" d="M402 480h8"/><path stroke="#acc000" d="M410 480h16"/><path stroke="#acbc00" d="M426 480h16"/><path stroke="#b0bc00" d="M442 480h8"/><path stroke="#b0b800" d="M450 480h48"/><path stroke="#b0bc00" d="M498 480h8"/><path stroke="#acbc00" d="M506 480h8"/><path stroke="#acc000" d="M514 480h8"/><path stroke="#a8c400" d="M522 480h8"/><path stroke="#a0c800" d="M530 480h8"/><path stroke="#94c800" d="M538 480h8"/><path stroke="#84c804" d="M546 480h8"/><path stroke="#74cc04" d="M554 480h8"/><path stroke="#68c808" d="M562 480h8"/><path stroke="#64c80c" d="M570 480h8"/><path stroke="#68c80c" d="M578 480h8"/><path stroke="#6ccc08" d="M586 480h8"/><path stroke="#78c804" d="M594 480h8"/><path stroke="#80c804" d="M602 480h8"/><path stroke="#88c804" d="M610 480h8"/><path stroke="#90c800" d="M618 480h16"/><path stroke="#94c800" d="M634 480h16"/><path stroke="#98c800" d="M650 480h8"/><path stroke="#a0c800" d="M658 480h8"/><path stroke="#a4c800" d="M666 480h8"/><path stroke="#a8c400" d="M674 480h16"/><path stroke="#acc000" d="M690 480h8"/><path stroke="#acbc00" d="M698 480h16"/><path stroke="#b0b800" d="M714 480h16"/><path stroke="#b4b400" d="M730 480h8"/><path stroke="#b4b000" d="M738 480h16"/><path stroke="#b8ac00" d="M754 480h16"/><path stroke="#bca800" d="M770 480h8"/><path stroke="#30c440" d="M90 488h8"/><path stroke="#30c43c" d="M98 488h8"/><path stroke="#30c434" d="M106 488h8"/><path stroke="#34c430" d="M114 488h8"/><path stroke="#34c428" d="M122 488h8"/><path stroke="#34c424" d="M130 488h8"/><path stroke="#34c420" d="M138 488h8"/><path stroke="#38c420" d="M146 488h8"/><path stroke="#3cc420" d="M154 488h8"/><path stroke="#40c41c" d="M162 488h8"/><path stroke="#44c41c" d="M170 488h8"/><path stroke="#44c418" d="M178 488h8"/><path stroke="#48c418" d="M186 488h8"/><path stroke="#4cc818" d="M194 488h8"/><path stroke="#50c814" d="M202 488h8"/><path stroke="#54c814" d="M210 488h8"/><path stroke="#58c810" d="M218 488h8"/><path stroke="#5cc810" d="M226 488h8"/><path stroke="#60c80c" d="M234 488h8"/><path stroke="#64c80c" d="M242 488h8"/><path stroke="#68c808" d="M250 488h8"/><path stroke="#6ccc08" d="M258 488h8"/><path stroke="#70cc08" d="M266 488h8"/><path stroke="#74cc04" d="M274 488h8"/><path stroke="#78c804" d="M282 488h8"/><path stroke="#7cc804" d="M290 488h8"/><path stroke="#80c804" d="M298 488h8"/><path stroke="#84c804" d="M306 488h8"/><path stroke="#88c804" d="M314 488h8"/><path stroke="#8cc804" d="M322 488h8"/><path stroke="#90c800" d="M330 488h8"/><path stroke="#94c800" d="M338 488h8"/><path stroke="#98c800" d="M346 488h8"/><path stroke="#9cc800" d="M354 488h8"/><path stroke="#a0c800" d="M362 488h16"/><path stroke="#a4c800" d="M378 488h8"/><path stroke="#a8c400" d="M386 488h16"/><path stroke="#a8c000" d="M402 488h8"/><path stroke="#acc000" d="M410 488h16"/><path stroke="#acbc00" d="M426 488h16"/><path stroke="#b0bc00" d="M442 488h8"/><path stroke="#b0b800" d="M450 488h40"/><path stroke="#b0bc00" d="M490 488h8"/><path stroke="#acbc00" d="M498 488h8"/><path stroke="#acc000" d="M506 488h8"/><path stroke="#a8c400" d="M514 488h8"/><path stroke="#a4c800" d="M522 488h8"/><path stroke="#9cc800" d="M530 488h8"/><path stroke="#90c800" d="M538 488h8"/><path stroke="#84c804" d="M546 488h8"/><path stroke="#74c804" d="M554 488h8"/><path stroke="#6ccc08" d="M562 488h8"/><path stroke="#68c808" d="M570 488h8"/><path stroke="#6cc808" d="M578 488h8"/><path stroke="#70cc08" d="M586 488h8"/><path stroke="#78c804" d="M594 488h8"/><path stroke="#80c804" d="M602 488h8"/><path stroke="#88c804" d="M610 488h8"/><path stroke="#8cc804" d="M618 488h8"/><path stroke="#90c800" d="M626 488h8"/><path stroke="#94c800" d="M634 488h16"/><path stroke="#98c800" d="M650 488h8"/><path stroke="#9cc800" d="M658 488h8"/><path stroke="#a0c800" d="M666 488h8"/><path stroke="#a8c800" d="M674 488h8"/><path stroke="#a8c400" d="M682 488h8"/><path stroke="#a8c000" d="M690 488h8"/><path stroke="#acc000" d="M698 488h8"/><path stroke="#acbc00" d="M706 488h8"/><path stroke="#b0b800" d="M714 488h16"/><path stroke="#b4b400" d="M730 488h16"/><path stroke="#b4b000" d="M746 488h8"/><path stroke="#b8b000" d="M754 488h8"/><path stroke="#b8ac00" d="M762 488h16"/><path stroke="#30c43c" d="M90 496h8"/><path stroke="#30c434" d="M98 496h8"/><path stroke="#34c430" d="M106 496h8"/><path stroke="#34c42c" d="M114 496h8"/><path stroke="#34c424" d="M122 496h8"/><path stroke="#34c420" d="M130 496h8"/><path stroke="#38c420" d="M138 496h8"/><path stroke="#3cc420" d="M146 496h8"/><path stroke="#3cc41c" d="M154 496h8"/><path stroke="#40c41c" d="M162 496h8"/><path stroke="#44c41c" d="M170 496h8"/><path stroke="#48c418" d="M178 496h8"/><path stroke="#4cc418" d="M186 496h8"/><path stroke="#50c814" d="M194 496h8"/><path stroke="#54c814" d="M202 496h16"/><path stroke="#58c810" d="M218 496h8"/><path stroke="#5cc810" d="M226 496h8"/><path stroke="#60c80c" d="M234 496h8"/><path stroke="#64c80c" d="M242 496h8"/><path stroke="#68c808" d="M250 496h8"/><path stroke="#6ccc08" d="M258 496h8"/><path stroke="#70cc08" d="M266 496h8"/><path stroke="#74cc04" d="M274 496h8"/><path stroke="#78c804" d="M282 496h8"/><path stroke="#7cc804" d="M290 496h8"/><path stroke="#80c804" d="M298 496h8"/><path stroke="#84c804" d="M306 496h8"/><path stroke="#88c804" d="M314 496h8"/><path stroke="#8cc804" d="M322 496h8"/><path stroke="#90c800" d="M330 496h8"/><path stroke="#94c800" d="M338 496h8"/><path stroke="#98c800" d="M346 496h8"/><path stroke="#9cc800" d="M354 496h8"/><path stroke="#a0c800" d="M362 496h16"/><path stroke="#a4c800" d="M378 496h8"/><path stroke="#a8c400" d="M386 496h16"/><path stroke="#a8c000" d="M402 496h8"/><path stroke="#acc000" d="M410 496h16"/><path stroke="#acbc00" d="M426 496h16"/><path stroke="#b0bc00" d="M442 496h16"/><path stroke="#b0b800" d="M458 496h24"/><path stroke="#b0bc00" d="M482 496h8"/><path stroke="#acbc00" d="M490 496h16"/><path stroke="#acc000" d="M506 496h8"/><path stroke="#a8c400" d="M514 496h8"/><path stroke="#a4c800" d="M522 496h8"/><path stroke="#98c800" d="M530 496h8"/><path stroke="#90c800" d="M538 496h8"/><path stroke="#84c804" d="M546 496h8"/><path stroke="#7cc804" d="M554 496h8"/><path stroke="#74cc04" d="M562 496h8"/><path stroke="#70cc08" d="M570 496h16"/><path stroke="#74cc04" d="M586 496h8"/><path stroke="#7cc804" d="M594 496h8"/><path stroke="#80c804" d="M602 496h8"/><path stroke="#88c804" d="M610 496h8"/><path stroke="#8cc804" d="M618 496h8"/><path stroke="#90c800" d="M626 496h8"/><path stroke="#94c800" d="M634 496h8"/><path stroke="#98c800" d="M642 496h16"/><path stroke="#9cc800" d="M658 496h8"/><path stroke="#a0c800" d="M666 496h8"/><path stroke="#a4c800" d="M674 496h8"/><path stroke="#a8c400" d="M682 496h8"/><path stroke="#a8c000" d="M690 496h8"/><path stroke="#acc000" d="M698 496h8"/><path stroke="#acbc00" d="M706 496h8"/><path stroke="#b0bc00" d="M714 496h8"/><path stroke="#b0b800" d="M722 496h8"/><path stroke="#b0b400" d="M730 496h8"/><path stroke="#b4b400" d="M738 496h8"/><path stroke="#b4b000" d="M746 496h16"/><path stroke="#b8ac00" d="M762 496h16"/></g></g><g filter="url(#bl3)" fill="none" stroke-linecap="round" stroke-linejoin="round" opacity=".8"><path d="M133 96 L135 112 L137 125 L146 139 L148.5 155 L146.5 167" stroke="#2058e0" stroke-width="7"/><path d="M192 180 L215 182 L240 184 L258 186" stroke="#2a64dc" stroke-width="14"/><path d="M238 90 L232 106 L224 124" stroke="#2e7ad8" stroke-width="6"/></g><g filter="url(#bl4)" fill="none" stroke-linecap="round"><path d="M633 181 Q660 176 690 162" stroke="#ffd020" stroke-width="4.5" opacity=".9"/><path d="M636 189 Q662 184 692 170" stroke="#201000" stroke-width="4.5" opacity=".75"/></g><g fill="none" stroke-linecap="round" stroke-linejoin="round"><path d="M615 66 L614 81 L612.5 94.5 L607.5 109.5 L600 118 L590 123 L576 133 L560 143 L546 151 L535 154 L522 160 L502 165 L487 170 L465 177 L444 181 L416 181 L398 185 L380 188 L360 193 L340 196" stroke="#48ccc4" stroke-width="6.5" opacity=".92"/><path d="M446 183 L448 197 L446 211 L448 226 L452 245 L455 260" stroke="#40c0a0" stroke-width="2.5" opacity=".7"/><path d="M340 196 L320 192 L300 190 L282 186" stroke="#40c0c0" stroke-width="5" opacity=".5"/></g><g fill="#1030d0"><ellipse cx="675" cy="82" rx="9" ry="2"/><ellipse cx="734.5" cy="126" rx="2.2" ry="3.8"/><ellipse cx="737" cy="163.5" rx="2.5" ry="1.3"/></g></g>
</defs>
<g id="mapg" mask="url(#mk)"><g transform="rotate(-12 430 280)" filter="url(#hs)"><g transform="rotate(12 430 280)"><use href="#colg"/></g></g><g mask="url(#sth)"><g filter="url(#hs3)"><use href="#colg"/></g></g><g mask="url(#ard)"><g transform="rotate(-30 560 320)" filter="url(#hs2)"><g transform="rotate(30 560 320)"><use href="#colg"/></g></g></g></g>
</svg>
</body></html>
